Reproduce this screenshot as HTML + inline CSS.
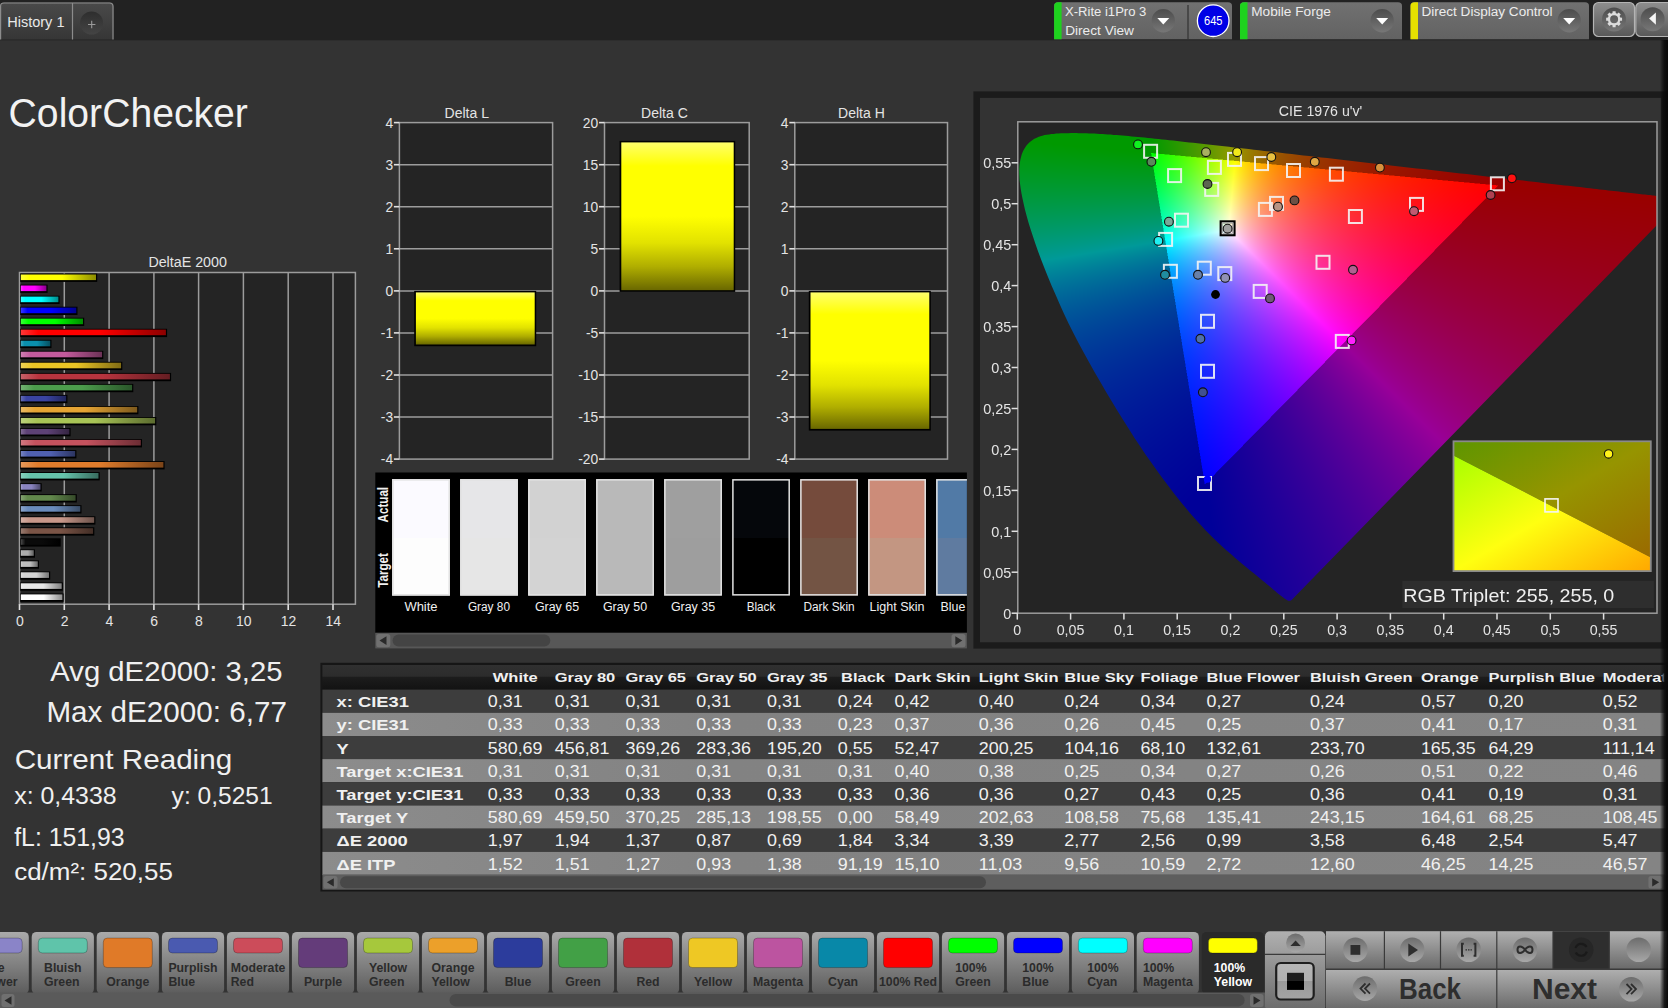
<!DOCTYPE html>
<html><head><meta charset="utf-8"><title>ColorChecker</title>
<style>
html,body{margin:0;padding:0;background:#333;overflow:hidden;width:1668px;height:1008px}
svg{position:absolute;left:0;top:0;font-family:"Liberation Sans",sans-serif}
</style></head><body>
<svg width="1668" height="1008" viewBox="0 0 1668 1008">
<rect x="0" y="0" width="1668" height="1008" fill="#333333"/>
<rect x="0" y="0" width="1668" height="40.3" fill="#222222"/>
<defs>
<linearGradient id="gTab" x1="0" y1="0" x2="0" y2="1"><stop offset="0" stop-color="#4a4a4a"/><stop offset="1" stop-color="#363636"/></linearGradient>
<linearGradient id="gDev" x1="0" y1="0" x2="0" y2="1"><stop offset="0" stop-color="#717171"/><stop offset="1" stop-color="#626262"/></linearGradient>
<linearGradient id="gBtnTop" x1="0" y1="0" x2="0" y2="1"><stop offset="0" stop-color="#8e8e8e"/><stop offset="1" stop-color="#585858"/></linearGradient>
<radialGradient id="gDrop" cx="0.5" cy="0.2" r="0.8"><stop offset="0" stop-color="#4a4a4a"/><stop offset="1" stop-color="#6e6e6e"/></radialGradient>
<linearGradient id="gDrop2" x1="0" y1="0" x2="0" y2="1"><stop offset="0" stop-color="#4c4c4c"/><stop offset="1" stop-color="#777777"/></linearGradient>
<linearGradient id="gPlus" x1="0" y1="0" x2="0" y2="1"><stop offset="0" stop-color="#2e2e2e"/><stop offset="1" stop-color="#444444"/></linearGradient>
</defs>
<path d="M0,39.5 L0,6 Q0,2.5 4,2.5 L109.5,2.5 Q113.5,2.5 113.5,6.5 L113.5,39.5 Z" fill="url(#gTab)"/><path d="M0.6,39.5 L0.6,6 Q0.6,3 4,3 L109.5,3 Q113,3 113,6.5 L113,39.5" fill="none" stroke="#8c8c8c" stroke-width="1.2"/>
<line x1="72.5" y1="3" x2="72.5" y2="39.5" stroke="#8c8c8c" stroke-width="1.2"/>
<text x="7.2" y="27.2" font-size="14.97" fill="#e8e8e8" textLength="57.3" lengthAdjust="spacingAndGlyphs">History 1</text>
<circle cx="91.6" cy="23" r="11.5" fill="url(#gPlus)"/>
<path d="M88,24.5 H95.4 M91.7,20.8 V28.2" stroke="#9a9a9a" stroke-width="1.1"/>
<path d="M1054.1,6 Q1054.1,2.3 1058.1,2.3 L1228,2.3 Q1232,2.3 1232,6 L1232,39.2 L1054.1,39.2 Z" fill="url(#gDev)"/><path d="M1054.1,6 Q1054.1,2.3 1058.1,2.3 L1061.6,2.3 L1061.6,39.2 L1054.1,39.2 Z" fill="#1ed21e"/><text x="1065.0" y="16.2" font-size="12.65" fill="#ececec" textLength="81.4" lengthAdjust="spacingAndGlyphs">X-Rite i1Pro 3</text><text x="1065.2" y="34.8" font-size="12.65" fill="#ececec" textLength="68.8" lengthAdjust="spacingAndGlyphs">Direct View</text><circle cx="1163.3" cy="20.7" r="11.7" fill="url(#gDrop2)"/><path d="M1157.3,18 L1169.3,18 L1163.3,24.5 Z" fill="#ffffff"/>
<line x1="1188" y1="5" x2="1188" y2="39" stroke="#3c3c3c" stroke-width="1.5"/>
<circle cx="1213.2" cy="20.7" r="15.8" fill="#0000e6" stroke="#ffffff" stroke-width="1.3"/>
<text x="1204.0" y="25.2" font-size="13.08" fill="#ffffff" textLength="18.5" lengthAdjust="spacingAndGlyphs">645</text>
<path d="M1240,6 Q1240,2.3 1244,2.3 L1398,2.3 Q1402,2.3 1402,6 L1402,39.2 L1240,39.2 Z" fill="url(#gDev)"/><path d="M1240,6 Q1240,2.3 1244,2.3 L1247.5,2.3 L1247.5,39.2 L1240,39.2 Z" fill="#1ed21e"/><text x="1251.2" y="16.2" font-size="12.65" fill="#ececec" textLength="79.7" lengthAdjust="spacingAndGlyphs">Mobile Forge</text><circle cx="1382.2" cy="20.7" r="11.7" fill="url(#gDrop2)"/><path d="M1376.2,18 L1388.2,18 L1382.2,24.5 Z" fill="#ffffff"/>
<path d="M1410.5,6 Q1410.5,2.3 1414.5,2.3 L1585,2.3 Q1589,2.3 1589,6 L1589,39.2 L1410.5,39.2 Z" fill="url(#gDev)"/><path d="M1410.5,6 Q1410.5,2.3 1414.5,2.3 L1418.0,2.3 L1418.0,39.2 L1410.5,39.2 Z" fill="#e6e000"/><text x="1421.4" y="16.2" font-size="12.65" fill="#ececec" textLength="131.2" lengthAdjust="spacingAndGlyphs">Direct Display Control</text><circle cx="1569.2" cy="20.7" r="11.7" fill="url(#gDrop2)"/><path d="M1563.2,18 L1575.2,18 L1569.2,24.5 Z" fill="#ffffff"/>
<rect x="1593.5" y="2.5" width="41" height="34" rx="5" fill="url(#gBtnTop)" stroke="#b4b4b4" stroke-width="1.2"/>
<circle cx="1614" cy="19.5" r="12" fill="url(#gDrop2)"/>
<path d="M1619.92,16.79 L1620.19,17.57 L1622.06,17.72 L1622.06,20.68 L1620.19,20.83 L1619.92,21.61 L1619.56,22.35 L1620.78,23.79 L1618.69,25.88 L1617.25,24.66 L1616.51,25.02 L1615.73,25.29 L1615.58,27.16 L1612.62,27.16 L1612.47,25.29 L1611.69,25.02 L1610.95,24.66 L1609.51,25.88 L1607.42,23.79 L1608.64,22.35 L1608.28,21.61 L1608.01,20.83 L1606.14,20.68 L1606.14,17.72 L1608.01,17.57 L1608.28,16.79 L1608.64,16.05 L1607.42,14.61 L1609.51,12.52 L1610.95,13.74 L1611.69,13.38 L1612.47,13.11 L1612.62,11.24 L1615.58,11.24 L1615.73,13.11 L1616.51,13.38 L1617.25,13.74 L1618.69,12.52 L1620.78,14.61 L1619.56,16.05 Z M1618.1,19.2 A4,4 0 1 0 1610.1,19.2 A4,4 0 1 0 1618.1,19.2 Z" fill="#dcdcdc" fill-rule="evenodd"/>
<rect x="1635.8" y="2.5" width="40" height="34" rx="5" fill="url(#gBtnTop)" stroke="#b4b4b4" stroke-width="1.2"/>
<circle cx="1652.6" cy="19.3" r="12" fill="url(#gDrop2)"/>
<path d="M1649.1,18.6 L1655.9,12.4 L1655.9,24.8 Z" fill="#f4f4f4"/>
<text x="8.6" y="126.8" font-size="40.70" fill="#f2f2f2" textLength="239.3" lengthAdjust="spacingAndGlyphs">ColorChecker</text>
<defs><linearGradient id="gb0" x1="0" y1="0" x2="1" y2="0"><stop offset="0" stop-color="#ffff38"/><stop offset="0.12" stop-color="#ffff00"/><stop offset="0.55" stop-color="#ffff00"/><stop offset="1" stop-color="#8c8c00"/></linearGradient><linearGradient id="gb1" x1="0" y1="0" x2="1" y2="0"><stop offset="0" stop-color="#ff38ff"/><stop offset="0.12" stop-color="#ff00ff"/><stop offset="0.55" stop-color="#ff00ff"/><stop offset="1" stop-color="#8c008c"/></linearGradient><linearGradient id="gb2" x1="0" y1="0" x2="1" y2="0"><stop offset="0" stop-color="#38ffff"/><stop offset="0.12" stop-color="#00ffff"/><stop offset="0.55" stop-color="#00ffff"/><stop offset="1" stop-color="#008c8c"/></linearGradient><linearGradient id="gb3" x1="0" y1="0" x2="1" y2="0"><stop offset="0" stop-color="#3838ff"/><stop offset="0.12" stop-color="#0000ff"/><stop offset="0.55" stop-color="#0000ff"/><stop offset="1" stop-color="#00008c"/></linearGradient><linearGradient id="gb4" x1="0" y1="0" x2="1" y2="0"><stop offset="0" stop-color="#38ff38"/><stop offset="0.12" stop-color="#00ff00"/><stop offset="0.55" stop-color="#00ff00"/><stop offset="1" stop-color="#008c00"/></linearGradient><linearGradient id="gb5" x1="0" y1="0" x2="1" y2="0"><stop offset="0" stop-color="#ff3838"/><stop offset="0.12" stop-color="#ff0000"/><stop offset="0.55" stop-color="#ff0000"/><stop offset="1" stop-color="#8c0000"/></linearGradient><linearGradient id="gb6" x1="0" y1="0" x2="1" y2="0"><stop offset="0" stop-color="#40a8c0"/><stop offset="0.12" stop-color="#0a90ae"/><stop offset="0.55" stop-color="#0a90ae"/><stop offset="1" stop-color="#064f60"/></linearGradient><linearGradient id="gb7" x1="0" y1="0" x2="1" y2="0"><stop offset="0" stop-color="#d07eb2"/><stop offset="0.12" stop-color="#c35a9c"/><stop offset="0.55" stop-color="#c35a9c"/><stop offset="1" stop-color="#6b3256"/></linearGradient><linearGradient id="gb8" x1="0" y1="0" x2="1" y2="0"><stop offset="0" stop-color="#efd155"/><stop offset="0.12" stop-color="#eac425"/><stop offset="0.55" stop-color="#eac425"/><stop offset="1" stop-color="#816c14"/></linearGradient><linearGradient id="gb9" x1="0" y1="0" x2="1" y2="0"><stop offset="0" stop-color="#c86168"/><stop offset="0.12" stop-color="#b8343e"/><stop offset="0.55" stop-color="#b8343e"/><stop offset="1" stop-color="#651d22"/></linearGradient><linearGradient id="gb10" x1="0" y1="0" x2="1" y2="0"><stop offset="0" stop-color="#73b273"/><stop offset="0.12" stop-color="#4c9c4c"/><stop offset="0.55" stop-color="#4c9c4c"/><stop offset="1" stop-color="#2a562a"/></linearGradient><linearGradient id="gb11" x1="0" y1="0" x2="1" y2="0"><stop offset="0" stop-color="#656db6"/><stop offset="0.12" stop-color="#3a44a2"/><stop offset="0.55" stop-color="#3a44a2"/><stop offset="1" stop-color="#202559"/></linearGradient><linearGradient id="gb12" x1="0" y1="0" x2="1" y2="0"><stop offset="0" stop-color="#ebb861"/><stop offset="0.12" stop-color="#e5a434"/><stop offset="0.55" stop-color="#e5a434"/><stop offset="1" stop-color="#7e5a1d"/></linearGradient><linearGradient id="gb13" x1="0" y1="0" x2="1" y2="0"><stop offset="0" stop-color="#bbd17b"/><stop offset="0.12" stop-color="#a8c456"/><stop offset="0.55" stop-color="#a8c456"/><stop offset="1" stop-color="#5c6c2f"/></linearGradient><linearGradient id="gb14" x1="0" y1="0" x2="1" y2="0"><stop offset="0" stop-color="#816c94"/><stop offset="0.12" stop-color="#5e4276"/><stop offset="0.55" stop-color="#5e4276"/><stop offset="1" stop-color="#342441"/></linearGradient><linearGradient id="gb15" x1="0" y1="0" x2="1" y2="0"><stop offset="0" stop-color="#d17881"/><stop offset="0.12" stop-color="#c4525e"/><stop offset="0.55" stop-color="#c4525e"/><stop offset="1" stop-color="#6c2d34"/></linearGradient><linearGradient id="gb16" x1="0" y1="0" x2="1" y2="0"><stop offset="0" stop-color="#7683c1"/><stop offset="0.12" stop-color="#5060b0"/><stop offset="0.55" stop-color="#5060b0"/><stop offset="1" stop-color="#2c3561"/></linearGradient><linearGradient id="gb17" x1="0" y1="0" x2="1" y2="0"><stop offset="0" stop-color="#e7995a"/><stop offset="0.12" stop-color="#e07c2c"/><stop offset="0.55" stop-color="#e07c2c"/><stop offset="1" stop-color="#7b4418"/></linearGradient><linearGradient id="gb18" x1="0" y1="0" x2="1" y2="0"><stop offset="0" stop-color="#88d1be"/><stop offset="0.12" stop-color="#66c4ac"/><stop offset="0.55" stop-color="#66c4ac"/><stop offset="1" stop-color="#386c5f"/></linearGradient><linearGradient id="gb19" x1="0" y1="0" x2="1" y2="0"><stop offset="0" stop-color="#a49fce"/><stop offset="0.12" stop-color="#8a84c0"/><stop offset="0.55" stop-color="#8a84c0"/><stop offset="1" stop-color="#4c496a"/></linearGradient><linearGradient id="gb20" x1="0" y1="0" x2="1" y2="0"><stop offset="0" stop-color="#85a273"/><stop offset="0.12" stop-color="#62884c"/><stop offset="0.55" stop-color="#62884c"/><stop offset="1" stop-color="#364b2a"/></linearGradient><linearGradient id="gb21" x1="0" y1="0" x2="1" y2="0"><stop offset="0" stop-color="#8ba5cb"/><stop offset="0.12" stop-color="#6a8cbc"/><stop offset="0.55" stop-color="#6a8cbc"/><stop offset="1" stop-color="#3a4d67"/></linearGradient><linearGradient id="gb22" x1="0" y1="0" x2="1" y2="0"><stop offset="0" stop-color="#d4afa4"/><stop offset="0.12" stop-color="#c8988a"/><stop offset="0.55" stop-color="#c8988a"/><stop offset="1" stop-color="#6e544c"/></linearGradient><linearGradient id="gb23" x1="0" y1="0" x2="1" y2="0"><stop offset="0" stop-color="#977a6f"/><stop offset="0.12" stop-color="#7a5446"/><stop offset="0.55" stop-color="#7a5446"/><stop offset="1" stop-color="#432e26"/></linearGradient><linearGradient id="gb24" x1="0" y1="0" x2="1" y2="0"><stop offset="0" stop-color="#4a4a4a"/><stop offset="0.12" stop-color="#0a0a0a"/><stop offset="0.55" stop-color="#0a0a0a"/><stop offset="1" stop-color="#000000"/></linearGradient><linearGradient id="gb25" x1="0" y1="0" x2="1" y2="0"><stop offset="0" stop-color="#bebebe"/><stop offset="0.12" stop-color="#acacac"/><stop offset="0.55" stop-color="#acacac"/><stop offset="1" stop-color="#5f5f5f"/></linearGradient><linearGradient id="gb26" x1="0" y1="0" x2="1" y2="0"><stop offset="0" stop-color="#cccccc"/><stop offset="0.12" stop-color="#bebebe"/><stop offset="0.55" stop-color="#bebebe"/><stop offset="1" stop-color="#686868"/></linearGradient><linearGradient id="gb27" x1="0" y1="0" x2="1" y2="0"><stop offset="0" stop-color="#dddddd"/><stop offset="0.12" stop-color="#d4d4d4"/><stop offset="0.55" stop-color="#d4d4d4"/><stop offset="1" stop-color="#757575"/></linearGradient><linearGradient id="gb28" x1="0" y1="0" x2="1" y2="0"><stop offset="0" stop-color="#ededed"/><stop offset="0.12" stop-color="#e8e8e8"/><stop offset="0.55" stop-color="#e8e8e8"/><stop offset="1" stop-color="#808080"/></linearGradient><linearGradient id="gb29" x1="0" y1="0" x2="1" y2="0"><stop offset="0" stop-color="#ffffff"/><stop offset="0.12" stop-color="#ffffff"/><stop offset="0.55" stop-color="#ffffff"/><stop offset="1" stop-color="#8c8c8c"/></linearGradient></defs>
<rect x="19.5" y="272.5" width="335.9" height="331.7" fill="#242424"/>
<line x1="64.3" y1="272.5" x2="64.3" y2="604.2" stroke="#9c9c9c" stroke-width="1.5"/>
<line x1="109.1" y1="272.5" x2="109.1" y2="604.2" stroke="#9c9c9c" stroke-width="1.5"/>
<line x1="153.9" y1="272.5" x2="153.9" y2="604.2" stroke="#9c9c9c" stroke-width="1.5"/>
<line x1="198.6" y1="272.5" x2="198.6" y2="604.2" stroke="#9c9c9c" stroke-width="1.5"/>
<line x1="243.4" y1="272.5" x2="243.4" y2="604.2" stroke="#9c9c9c" stroke-width="1.5"/>
<line x1="288.2" y1="272.5" x2="288.2" y2="604.2" stroke="#9c9c9c" stroke-width="1.5"/>
<line x1="333.0" y1="272.5" x2="333.0" y2="604.2" stroke="#9c9c9c" stroke-width="1.5"/>
<rect x="19.5" y="272.5" width="335.9" height="331.7" fill="none" stroke="#9c9c9c" stroke-width="1.5"/>
<line x1="19.5" y1="604.2" x2="19.5" y2="610.0" stroke="#e0e0e0" stroke-width="1.6"/>
<text x="15.9" y="626.2" font-size="13.95" fill="#e4e4e4" textLength="7.8" lengthAdjust="spacingAndGlyphs">0</text>
<line x1="64.3" y1="604.2" x2="64.3" y2="610.0" stroke="#e0e0e0" stroke-width="1.6"/>
<text x="60.7" y="626.2" font-size="13.95" fill="#e4e4e4" textLength="7.8" lengthAdjust="spacingAndGlyphs">2</text>
<line x1="109.1" y1="604.2" x2="109.1" y2="610.0" stroke="#e0e0e0" stroke-width="1.6"/>
<text x="105.5" y="626.2" font-size="13.95" fill="#e4e4e4" textLength="7.8" lengthAdjust="spacingAndGlyphs">4</text>
<line x1="153.9" y1="604.2" x2="153.9" y2="610.0" stroke="#e0e0e0" stroke-width="1.6"/>
<text x="150.3" y="626.2" font-size="13.95" fill="#e4e4e4" textLength="7.8" lengthAdjust="spacingAndGlyphs">6</text>
<line x1="198.6" y1="604.2" x2="198.6" y2="610.0" stroke="#e0e0e0" stroke-width="1.6"/>
<text x="195.1" y="626.2" font-size="13.95" fill="#e4e4e4" textLength="7.8" lengthAdjust="spacingAndGlyphs">8</text>
<line x1="243.4" y1="604.2" x2="243.4" y2="610.0" stroke="#e0e0e0" stroke-width="1.6"/>
<text x="236.0" y="626.2" font-size="13.95" fill="#e4e4e4" textLength="15.5" lengthAdjust="spacingAndGlyphs">10</text>
<line x1="288.2" y1="604.2" x2="288.2" y2="610.0" stroke="#e0e0e0" stroke-width="1.6"/>
<text x="280.8" y="626.2" font-size="13.95" fill="#e4e4e4" textLength="15.5" lengthAdjust="spacingAndGlyphs">12</text>
<line x1="333.0" y1="604.2" x2="333.0" y2="610.0" stroke="#e0e0e0" stroke-width="1.6"/>
<text x="325.5" y="626.2" font-size="13.95" fill="#e4e4e4" textLength="15.5" lengthAdjust="spacingAndGlyphs">14</text>
<rect x="20.2" y="273.6" width="77.0" height="8.3" fill="#000"/>
<rect x="20.8" y="274.5" width="75.2" height="5.6" fill="url(#gb0)"/>
<rect x="20.2" y="284.6" width="27.4" height="8.3" fill="#000"/>
<rect x="20.8" y="285.5" width="25.6" height="5.6" fill="url(#gb1)"/>
<rect x="20.2" y="295.7" width="39.4" height="8.3" fill="#000"/>
<rect x="20.8" y="296.6" width="37.6" height="5.6" fill="url(#gb2)"/>
<rect x="20.2" y="306.7" width="57.3" height="8.3" fill="#000"/>
<rect x="20.8" y="307.6" width="55.5" height="5.6" fill="url(#gb3)"/>
<rect x="20.2" y="317.7" width="64.0" height="8.3" fill="#000"/>
<rect x="20.8" y="318.6" width="62.2" height="5.6" fill="url(#gb4)"/>
<rect x="20.2" y="328.8" width="146.9" height="8.3" fill="#000"/>
<rect x="20.8" y="329.6" width="145.1" height="5.6" fill="url(#gb5)"/>
<rect x="20.2" y="339.8" width="31.3" height="8.3" fill="#000"/>
<rect x="20.8" y="340.7" width="29.5" height="5.6" fill="url(#gb6)"/>
<rect x="20.2" y="350.8" width="83.1" height="8.3" fill="#000"/>
<rect x="20.8" y="351.7" width="81.3" height="5.6" fill="url(#gb7)"/>
<rect x="20.2" y="361.8" width="102.1" height="8.3" fill="#000"/>
<rect x="20.8" y="362.7" width="100.3" height="5.6" fill="url(#gb8)"/>
<rect x="20.2" y="372.9" width="150.9" height="8.3" fill="#000"/>
<rect x="20.8" y="373.8" width="149.1" height="5.6" fill="url(#gb9)"/>
<rect x="20.2" y="383.9" width="113.1" height="8.3" fill="#000"/>
<rect x="20.8" y="384.8" width="111.3" height="5.6" fill="url(#gb10)"/>
<rect x="20.2" y="394.9" width="47.2" height="8.3" fill="#000"/>
<rect x="20.8" y="395.8" width="45.4" height="5.6" fill="url(#gb11)"/>
<rect x="20.2" y="406.0" width="118.2" height="8.3" fill="#000"/>
<rect x="20.8" y="406.9" width="116.4" height="5.6" fill="url(#gb12)"/>
<rect x="20.2" y="417.0" width="136.1" height="8.3" fill="#000"/>
<rect x="20.8" y="417.9" width="134.3" height="5.6" fill="url(#gb13)"/>
<rect x="20.2" y="428.0" width="50.4" height="8.3" fill="#000"/>
<rect x="20.8" y="428.9" width="48.6" height="5.6" fill="url(#gb14)"/>
<rect x="20.2" y="439.1" width="121.8" height="8.3" fill="#000"/>
<rect x="20.8" y="439.9" width="120.0" height="5.6" fill="url(#gb15)"/>
<rect x="20.2" y="450.1" width="56.2" height="8.3" fill="#000"/>
<rect x="20.8" y="451.0" width="54.4" height="5.6" fill="url(#gb16)"/>
<rect x="20.2" y="461.1" width="144.4" height="8.3" fill="#000"/>
<rect x="20.8" y="462.0" width="142.6" height="5.6" fill="url(#gb17)"/>
<rect x="20.2" y="472.1" width="79.5" height="8.3" fill="#000"/>
<rect x="20.8" y="473.0" width="77.7" height="5.6" fill="url(#gb18)"/>
<rect x="20.2" y="483.2" width="21.5" height="8.3" fill="#000"/>
<rect x="20.8" y="484.1" width="19.7" height="5.6" fill="url(#gb19)"/>
<rect x="20.2" y="494.2" width="56.6" height="8.3" fill="#000"/>
<rect x="20.8" y="495.1" width="54.8" height="5.6" fill="url(#gb20)"/>
<rect x="20.2" y="505.2" width="61.3" height="8.3" fill="#000"/>
<rect x="20.8" y="506.1" width="59.5" height="5.6" fill="url(#gb21)"/>
<rect x="20.2" y="516.3" width="75.2" height="8.3" fill="#000"/>
<rect x="20.8" y="517.2" width="73.4" height="5.6" fill="url(#gb22)"/>
<rect x="20.2" y="527.3" width="74.1" height="8.3" fill="#000"/>
<rect x="20.8" y="528.2" width="72.3" height="5.6" fill="url(#gb23)"/>
<rect x="20.2" y="538.3" width="40.5" height="8.3" fill="#000"/>
<rect x="20.8" y="539.2" width="38.7" height="5.6" fill="url(#gb24)"/>
<rect x="20.2" y="549.4" width="14.8" height="8.3" fill="#000"/>
<rect x="20.8" y="550.2" width="13.0" height="5.6" fill="url(#gb25)"/>
<rect x="20.2" y="560.4" width="18.8" height="8.3" fill="#000"/>
<rect x="20.8" y="561.3" width="17.0" height="5.6" fill="url(#gb26)"/>
<rect x="20.2" y="571.4" width="30.0" height="8.3" fill="#000"/>
<rect x="20.8" y="572.3" width="28.2" height="5.6" fill="url(#gb27)"/>
<rect x="20.2" y="582.4" width="42.7" height="8.3" fill="#000"/>
<rect x="20.8" y="583.3" width="40.9" height="5.6" fill="url(#gb28)"/>
<rect x="20.2" y="593.5" width="43.4" height="8.3" fill="#000"/>
<rect x="20.8" y="594.4" width="41.6" height="5.6" fill="url(#gb29)"/>
<text x="148.4" y="267.0" font-size="14.68" fill="#e4e4e4" textLength="78.5" lengthAdjust="spacingAndGlyphs">DeltaE 2000</text>
<defs><linearGradient id="gYel" x1="0" y1="0" x2="0" y2="1"><stop offset="0" stop-color="#ffff6a"/><stop offset="0.16" stop-color="#ffff00"/><stop offset="0.5" stop-color="#ffff00"/><stop offset="0.68" stop-color="#e2e200"/><stop offset="0.84" stop-color="#b0ae00"/><stop offset="1" stop-color="#6a6800"/></linearGradient></defs>
<rect x="399.4" y="122.6" width="153.2" height="336.5" fill="#242424"/>
<line x1="399.4" y1="164.7" x2="552.6" y2="164.7" stroke="#9c9c9c" stroke-width="1.5"/>
<line x1="399.4" y1="206.7" x2="552.6" y2="206.7" stroke="#9c9c9c" stroke-width="1.5"/>
<line x1="399.4" y1="248.8" x2="552.6" y2="248.8" stroke="#9c9c9c" stroke-width="1.5"/>
<line x1="399.4" y1="290.9" x2="552.6" y2="290.9" stroke="#9c9c9c" stroke-width="1.5"/>
<line x1="399.4" y1="332.9" x2="552.6" y2="332.9" stroke="#9c9c9c" stroke-width="1.5"/>
<line x1="399.4" y1="375.0" x2="552.6" y2="375.0" stroke="#9c9c9c" stroke-width="1.5"/>
<line x1="399.4" y1="417.0" x2="552.6" y2="417.0" stroke="#9c9c9c" stroke-width="1.5"/>
<rect x="414.2" y="290.9" width="122.0" height="55.3" fill="#000"/>
<rect x="415.9" y="292.4" width="118.8" height="52.1" fill="url(#gYel)"/>
<rect x="399.4" y="122.6" width="153.2" height="336.5" fill="none" stroke="#9c9c9c" stroke-width="1.5"/>
<line x1="393.9" y1="122.6" x2="399.4" y2="122.6" stroke="#e0e0e0" stroke-width="1.6"/>
<text x="385.4" y="127.7" font-size="13.81" fill="#e4e4e4" textLength="7.7" lengthAdjust="spacingAndGlyphs">4</text>
<line x1="393.9" y1="164.7" x2="399.4" y2="164.7" stroke="#e0e0e0" stroke-width="1.6"/>
<text x="385.4" y="169.8" font-size="13.81" fill="#e4e4e4" textLength="7.7" lengthAdjust="spacingAndGlyphs">3</text>
<line x1="393.9" y1="206.7" x2="399.4" y2="206.7" stroke="#e0e0e0" stroke-width="1.6"/>
<text x="385.4" y="211.8" font-size="13.81" fill="#e4e4e4" textLength="7.7" lengthAdjust="spacingAndGlyphs">2</text>
<line x1="393.9" y1="248.8" x2="399.4" y2="248.8" stroke="#e0e0e0" stroke-width="1.6"/>
<text x="385.4" y="253.9" font-size="13.81" fill="#e4e4e4" textLength="7.7" lengthAdjust="spacingAndGlyphs">1</text>
<line x1="393.9" y1="290.9" x2="399.4" y2="290.9" stroke="#e0e0e0" stroke-width="1.6"/>
<text x="385.4" y="296.0" font-size="13.81" fill="#e4e4e4" textLength="7.7" lengthAdjust="spacingAndGlyphs">0</text>
<line x1="393.9" y1="332.9" x2="399.4" y2="332.9" stroke="#e0e0e0" stroke-width="1.6"/>
<text x="380.8" y="338.0" font-size="13.81" fill="#e4e4e4" textLength="12.3" lengthAdjust="spacingAndGlyphs">-1</text>
<line x1="393.9" y1="375.0" x2="399.4" y2="375.0" stroke="#e0e0e0" stroke-width="1.6"/>
<text x="380.8" y="380.1" font-size="13.81" fill="#e4e4e4" textLength="12.3" lengthAdjust="spacingAndGlyphs">-2</text>
<line x1="393.9" y1="417.0" x2="399.4" y2="417.0" stroke="#e0e0e0" stroke-width="1.6"/>
<text x="380.8" y="422.1" font-size="13.81" fill="#e4e4e4" textLength="12.3" lengthAdjust="spacingAndGlyphs">-3</text>
<line x1="393.9" y1="459.1" x2="399.4" y2="459.1" stroke="#e0e0e0" stroke-width="1.6"/>
<text x="380.8" y="464.2" font-size="13.81" fill="#e4e4e4" textLength="12.3" lengthAdjust="spacingAndGlyphs">-4</text>
<rect x="604.5" y="122.6" width="144.7" height="336.5" fill="#242424"/>
<line x1="604.5" y1="164.7" x2="749.2" y2="164.7" stroke="#9c9c9c" stroke-width="1.5"/>
<line x1="604.5" y1="206.7" x2="749.2" y2="206.7" stroke="#9c9c9c" stroke-width="1.5"/>
<line x1="604.5" y1="248.8" x2="749.2" y2="248.8" stroke="#9c9c9c" stroke-width="1.5"/>
<line x1="604.5" y1="290.9" x2="749.2" y2="290.9" stroke="#9c9c9c" stroke-width="1.5"/>
<line x1="604.5" y1="332.9" x2="749.2" y2="332.9" stroke="#9c9c9c" stroke-width="1.5"/>
<line x1="604.5" y1="375.0" x2="749.2" y2="375.0" stroke="#9c9c9c" stroke-width="1.5"/>
<line x1="604.5" y1="417.0" x2="749.2" y2="417.0" stroke="#9c9c9c" stroke-width="1.5"/>
<rect x="619.6" y="140.9" width="115.6" height="151.0" fill="#000"/>
<rect x="621.3" y="142.4" width="112.4" height="147.8" fill="url(#gYel)"/>
<rect x="604.5" y="122.6" width="144.7" height="336.5" fill="none" stroke="#9c9c9c" stroke-width="1.5"/>
<line x1="599.0" y1="122.6" x2="604.5" y2="122.6" stroke="#e0e0e0" stroke-width="1.6"/>
<text x="582.8" y="127.7" font-size="13.81" fill="#e4e4e4" textLength="15.4" lengthAdjust="spacingAndGlyphs">20</text>
<line x1="599.0" y1="164.7" x2="604.5" y2="164.7" stroke="#e0e0e0" stroke-width="1.6"/>
<text x="582.8" y="169.8" font-size="13.81" fill="#e4e4e4" textLength="15.4" lengthAdjust="spacingAndGlyphs">15</text>
<line x1="599.0" y1="206.7" x2="604.5" y2="206.7" stroke="#e0e0e0" stroke-width="1.6"/>
<text x="582.8" y="211.8" font-size="13.81" fill="#e4e4e4" textLength="15.4" lengthAdjust="spacingAndGlyphs">10</text>
<line x1="599.0" y1="248.8" x2="604.5" y2="248.8" stroke="#e0e0e0" stroke-width="1.6"/>
<text x="590.5" y="253.9" font-size="13.81" fill="#e4e4e4" textLength="7.7" lengthAdjust="spacingAndGlyphs">5</text>
<line x1="599.0" y1="290.9" x2="604.5" y2="290.9" stroke="#e0e0e0" stroke-width="1.6"/>
<text x="590.5" y="296.0" font-size="13.81" fill="#e4e4e4" textLength="7.7" lengthAdjust="spacingAndGlyphs">0</text>
<line x1="599.0" y1="332.9" x2="604.5" y2="332.9" stroke="#e0e0e0" stroke-width="1.6"/>
<text x="585.9" y="338.0" font-size="13.81" fill="#e4e4e4" textLength="12.3" lengthAdjust="spacingAndGlyphs">-5</text>
<line x1="599.0" y1="375.0" x2="604.5" y2="375.0" stroke="#e0e0e0" stroke-width="1.6"/>
<text x="578.2" y="380.1" font-size="13.81" fill="#e4e4e4" textLength="20.0" lengthAdjust="spacingAndGlyphs">-10</text>
<line x1="599.0" y1="417.0" x2="604.5" y2="417.0" stroke="#e0e0e0" stroke-width="1.6"/>
<text x="578.2" y="422.1" font-size="13.81" fill="#e4e4e4" textLength="20.0" lengthAdjust="spacingAndGlyphs">-15</text>
<line x1="599.0" y1="459.1" x2="604.5" y2="459.1" stroke="#e0e0e0" stroke-width="1.6"/>
<text x="578.2" y="464.2" font-size="13.81" fill="#e4e4e4" textLength="20.0" lengthAdjust="spacingAndGlyphs">-20</text>
<rect x="794.8" y="122.6" width="152.7" height="336.5" fill="#242424"/>
<line x1="794.8" y1="164.7" x2="947.5" y2="164.7" stroke="#9c9c9c" stroke-width="1.5"/>
<line x1="794.8" y1="206.7" x2="947.5" y2="206.7" stroke="#9c9c9c" stroke-width="1.5"/>
<line x1="794.8" y1="248.8" x2="947.5" y2="248.8" stroke="#9c9c9c" stroke-width="1.5"/>
<line x1="794.8" y1="290.9" x2="947.5" y2="290.9" stroke="#9c9c9c" stroke-width="1.5"/>
<line x1="794.8" y1="332.9" x2="947.5" y2="332.9" stroke="#9c9c9c" stroke-width="1.5"/>
<line x1="794.8" y1="375.0" x2="947.5" y2="375.0" stroke="#9c9c9c" stroke-width="1.5"/>
<line x1="794.8" y1="417.0" x2="947.5" y2="417.0" stroke="#9c9c9c" stroke-width="1.5"/>
<rect x="808.8" y="290.9" width="122.0" height="139.7" fill="#000"/>
<rect x="810.5" y="292.4" width="118.8" height="136.5" fill="url(#gYel)"/>
<rect x="794.8" y="122.6" width="152.7" height="336.5" fill="none" stroke="#9c9c9c" stroke-width="1.5"/>
<line x1="789.3" y1="122.6" x2="794.8" y2="122.6" stroke="#e0e0e0" stroke-width="1.6"/>
<text x="780.8" y="127.7" font-size="13.81" fill="#e4e4e4" textLength="7.7" lengthAdjust="spacingAndGlyphs">4</text>
<line x1="789.3" y1="164.7" x2="794.8" y2="164.7" stroke="#e0e0e0" stroke-width="1.6"/>
<text x="780.8" y="169.8" font-size="13.81" fill="#e4e4e4" textLength="7.7" lengthAdjust="spacingAndGlyphs">3</text>
<line x1="789.3" y1="206.7" x2="794.8" y2="206.7" stroke="#e0e0e0" stroke-width="1.6"/>
<text x="780.8" y="211.8" font-size="13.81" fill="#e4e4e4" textLength="7.7" lengthAdjust="spacingAndGlyphs">2</text>
<line x1="789.3" y1="248.8" x2="794.8" y2="248.8" stroke="#e0e0e0" stroke-width="1.6"/>
<text x="780.8" y="253.9" font-size="13.81" fill="#e4e4e4" textLength="7.7" lengthAdjust="spacingAndGlyphs">1</text>
<line x1="789.3" y1="290.9" x2="794.8" y2="290.9" stroke="#e0e0e0" stroke-width="1.6"/>
<text x="780.8" y="296.0" font-size="13.81" fill="#e4e4e4" textLength="7.7" lengthAdjust="spacingAndGlyphs">0</text>
<line x1="789.3" y1="332.9" x2="794.8" y2="332.9" stroke="#e0e0e0" stroke-width="1.6"/>
<text x="776.2" y="338.0" font-size="13.81" fill="#e4e4e4" textLength="12.3" lengthAdjust="spacingAndGlyphs">-1</text>
<line x1="789.3" y1="375.0" x2="794.8" y2="375.0" stroke="#e0e0e0" stroke-width="1.6"/>
<text x="776.2" y="380.1" font-size="13.81" fill="#e4e4e4" textLength="12.3" lengthAdjust="spacingAndGlyphs">-2</text>
<line x1="789.3" y1="417.0" x2="794.8" y2="417.0" stroke="#e0e0e0" stroke-width="1.6"/>
<text x="776.2" y="422.1" font-size="13.81" fill="#e4e4e4" textLength="12.3" lengthAdjust="spacingAndGlyphs">-3</text>
<line x1="789.3" y1="459.1" x2="794.8" y2="459.1" stroke="#e0e0e0" stroke-width="1.6"/>
<text x="776.2" y="464.2" font-size="13.81" fill="#e4e4e4" textLength="12.3" lengthAdjust="spacingAndGlyphs">-4</text>
<text x="444.6" y="118.1" font-size="14.53" fill="#e4e4e4" textLength="44.4" lengthAdjust="spacingAndGlyphs">Delta L</text>
<text x="641.1" y="118.1" font-size="14.53" fill="#e4e4e4" textLength="46.7" lengthAdjust="spacingAndGlyphs">Delta C</text>
<text x="838.1" y="118.1" font-size="14.53" fill="#e4e4e4" textLength="46.7" lengthAdjust="spacingAndGlyphs">Delta H</text>
<rect x="375.3" y="472.5" width="591.6" height="160.3" fill="#000"/>
<defs><clipPath id="cpSw"><rect x="375.3" y="472.5" width="591.6" height="160.3"/></clipPath></defs>
<g clip-path="url(#cpSw)">
<rect x="392.1" y="479.1" width="57.8" height="58.9" fill="#fbfaff"/>
<rect x="392.1" y="538" width="57.8" height="57.6" fill="#fdfdfd"/>
<rect x="392.9" y="479.85" width="56.3" height="115" fill="none" stroke="#e2e2e2" stroke-width="1.5"/>
<text x="404.4" y="611.0" font-size="13.08" fill="#f0f0f0" textLength="33.2" lengthAdjust="spacingAndGlyphs">White</text>
<rect x="460.1" y="479.1" width="57.8" height="58.9" fill="#e6e6e8"/>
<rect x="460.1" y="538" width="57.8" height="57.6" fill="#e6e6e6"/>
<rect x="460.9" y="479.85" width="56.3" height="115" fill="none" stroke="#e2e2e2" stroke-width="1.5"/>
<text x="467.9" y="611.0" font-size="13.08" fill="#f0f0f0" textLength="42.1" lengthAdjust="spacingAndGlyphs">Gray 80</text>
<rect x="528.1" y="479.1" width="57.8" height="58.9" fill="#d2d2d2"/>
<rect x="528.1" y="538" width="57.8" height="57.6" fill="#d3d3d3"/>
<rect x="528.9" y="479.85" width="56.3" height="115" fill="none" stroke="#e2e2e2" stroke-width="1.5"/>
<text x="534.9" y="611.0" font-size="13.08" fill="#f0f0f0" textLength="44.2" lengthAdjust="spacingAndGlyphs">Gray 65</text>
<rect x="596.1" y="479.1" width="57.8" height="58.9" fill="#b9b9b9"/>
<rect x="596.1" y="538" width="57.8" height="57.6" fill="#b9b9b9"/>
<rect x="596.9" y="479.85" width="56.3" height="115" fill="none" stroke="#e2e2e2" stroke-width="1.5"/>
<text x="602.9" y="611.0" font-size="13.08" fill="#f0f0f0" textLength="44.2" lengthAdjust="spacingAndGlyphs">Gray 50</text>
<rect x="664.1" y="479.1" width="57.8" height="58.9" fill="#9f9f9f"/>
<rect x="664.1" y="538" width="57.8" height="57.6" fill="#9e9e9e"/>
<rect x="664.9" y="479.85" width="56.3" height="115" fill="none" stroke="#e2e2e2" stroke-width="1.5"/>
<text x="670.9" y="611.0" font-size="13.08" fill="#f0f0f0" textLength="44.2" lengthAdjust="spacingAndGlyphs">Gray 35</text>
<rect x="732.1" y="479.1" width="57.8" height="58.9" fill="#05070b"/>
<rect x="732.1" y="538" width="57.8" height="57.6" fill="#000000"/>
<rect x="732.9" y="479.85" width="56.3" height="115" fill="none" stroke="#e2e2e2" stroke-width="1.5"/>
<text x="746.7" y="611.0" font-size="13.08" fill="#f0f0f0" textLength="28.6" lengthAdjust="spacingAndGlyphs">Black</text>
<rect x="800.1" y="479.1" width="57.8" height="58.9" fill="#754b3c"/>
<rect x="800.1" y="538" width="57.8" height="57.6" fill="#735444"/>
<rect x="800.9" y="479.85" width="56.3" height="115" fill="none" stroke="#e2e2e2" stroke-width="1.5"/>
<text x="803.4" y="611.0" font-size="13.08" fill="#f0f0f0" textLength="51.3" lengthAdjust="spacingAndGlyphs">Dark Skin</text>
<rect x="868.1" y="479.1" width="57.8" height="58.9" fill="#cc8c79"/>
<rect x="868.1" y="538" width="57.8" height="57.6" fill="#c39682"/>
<rect x="868.9" y="479.85" width="56.3" height="115" fill="none" stroke="#e2e2e2" stroke-width="1.5"/>
<text x="869.5" y="611.0" font-size="13.08" fill="#f0f0f0" textLength="55.0" lengthAdjust="spacingAndGlyphs">Light Skin</text>
<rect x="936.1" y="479.1" width="57.8" height="58.9" fill="#517aa6"/>
<rect x="936.1" y="538" width="57.8" height="57.6" fill="#5f7ba0"/>
<rect x="936.9" y="479.85" width="56.3" height="115" fill="none" stroke="#e2e2e2" stroke-width="1.5"/>
<text x="940.5" y="611.0" font-size="13.08" fill="#f0f0f0" textLength="49.0" lengthAdjust="spacingAndGlyphs">Blue Sky</text>
</g>
<text x="-17.8" y="0.0" font-size="14.53" fill="#f0f0f0" font-weight="bold" textLength="35.5" lengthAdjust="spacingAndGlyphs" transform="translate(388.3,504.6) rotate(-90)">Actual</text>
<text x="-17.3" y="0.0" font-size="14.53" fill="#f0f0f0" font-weight="bold" textLength="34.7" lengthAdjust="spacingAndGlyphs" transform="translate(388.3,570.5) rotate(-90)">Target</text>
<rect x="375.3" y="632.8" width="591.6" height="15.6" fill="#575757"/>
<rect x="392.6" y="634.5" width="157.7" height="12" rx="6" fill="#444444"/>
<rect x="376.3" y="634" width="14" height="13.2" rx="2.5" fill="#707070"/>
<path d="M379.5,640.6 L386.5,636.3 L386.5,644.9 Z" fill="#2a2a2a"/>
<rect x="951.5" y="634" width="14" height="13.2" rx="2.5" fill="#707070"/>
<path d="M962.3,640.6 L955.3,636.3 L955.3,644.9 Z" fill="#2a2a2a"/>
<text x="50.3" y="680.8" font-size="27.47" fill="#f0f0f0" textLength="232.2" lengthAdjust="spacingAndGlyphs">Avg dE2000: 3,25</text>
<text x="46.4" y="722.0" font-size="29.22" fill="#f0f0f0" textLength="240.5" lengthAdjust="spacingAndGlyphs">Max dE2000: 6,77</text>
<text x="14.7" y="769.0" font-size="27.03" fill="#f0f0f0" textLength="217.5" lengthAdjust="spacingAndGlyphs">Current Reading</text>
<text x="14.2" y="803.8" font-size="24.42" fill="#f0f0f0" textLength="102.4" lengthAdjust="spacingAndGlyphs">x: 0,4338</text>
<text x="171.6" y="803.8" font-size="24.42" fill="#f0f0f0" textLength="101.1" lengthAdjust="spacingAndGlyphs">y: 0,5251</text>
<text x="14.2" y="845.6" font-size="25.15" fill="#f0f0f0" textLength="110.4" lengthAdjust="spacingAndGlyphs">fL: 151,93</text>
<text x="14.2" y="880.0" font-size="24.42" fill="#f0f0f0" textLength="158.7" lengthAdjust="spacingAndGlyphs">cd/m²: 520,55</text>
<defs><linearGradient id="gHdr" x1="0" y1="0" x2="0" y2="1"><stop offset="0" stop-color="#303030"/><stop offset="0.45" stop-color="#2c2c2c"/><stop offset="0.5" stop-color="#1c1c1c"/><stop offset="1" stop-color="#121212"/></linearGradient><linearGradient id="gRowL" x1="0" y1="0" x2="1" y2="0"><stop offset="0" stop-color="#8c8c8c"/><stop offset="0.3" stop-color="#828282"/><stop offset="1" stop-color="#848484"/></linearGradient><clipPath id="cpTbl"><rect x="320.4" y="663.5" width="1344" height="228"/></clipPath></defs>
<rect x="320.4" y="662.8" width="1347.6" height="228.7" fill="#161616"/>
<rect x="322.4" y="665" width="1343.3" height="24.8" fill="url(#gHdr)"/>
<rect x="322.4" y="689.6" width="1343.3" height="23.2" fill="#3d3d3d"/>
<rect x="322.4" y="712.8" width="1343.3" height="23.2" fill="url(#gRowL)"/>
<rect x="322.4" y="736.0" width="1343.3" height="23.2" fill="#3d3d3d"/>
<rect x="322.4" y="759.1" width="1343.3" height="23.2" fill="url(#gRowL)"/>
<rect x="322.4" y="782.3" width="1343.3" height="23.2" fill="#3d3d3d"/>
<rect x="322.4" y="805.5" width="1343.3" height="23.2" fill="url(#gRowL)"/>
<rect x="322.4" y="828.7" width="1343.3" height="23.2" fill="#3d3d3d"/>
<rect x="322.4" y="851.9" width="1343.3" height="23.2" fill="url(#gRowL)"/>
<rect x="322.4" y="874.4" width="1343.3" height="15.3" fill="#5e5e5e"/>
<rect x="340" y="876.2" width="646" height="12" rx="6" fill="#484848"/>
<rect x="323.5" y="876" width="14" height="12.5" rx="2.5" fill="#707070"/>
<path d="M326.8,882.2 L333.8,878.2 L333.8,886.4 Z" fill="#2a2a2a"/>
<rect x="1648.4" y="876" width="14" height="12.5" rx="2.5" fill="#707070"/>
<path d="M1659.2,882.2 L1652.2,878.2 L1652.2,886.4 Z" fill="#2a2a2a"/>
<g clip-path="url(#cpTbl)">
<text x="492.8" y="681.9" font-size="13.52" fill="#f0f0f0" font-weight="bold" textLength="44.9" lengthAdjust="spacingAndGlyphs">White</text>
<text x="554.8" y="681.9" font-size="13.52" fill="#f0f0f0" font-weight="bold" textLength="60.5" lengthAdjust="spacingAndGlyphs">Gray 80</text>
<text x="625.5" y="681.9" font-size="13.52" fill="#f0f0f0" font-weight="bold" textLength="60.5" lengthAdjust="spacingAndGlyphs">Gray 65</text>
<text x="696.3" y="681.9" font-size="13.52" fill="#f0f0f0" font-weight="bold" textLength="60.5" lengthAdjust="spacingAndGlyphs">Gray 50</text>
<text x="767.0" y="681.9" font-size="13.52" fill="#f0f0f0" font-weight="bold" textLength="60.5" lengthAdjust="spacingAndGlyphs">Gray 35</text>
<text x="841.0" y="681.9" font-size="13.52" fill="#f0f0f0" font-weight="bold" textLength="44.0" lengthAdjust="spacingAndGlyphs">Black</text>
<text x="894.6" y="681.9" font-size="13.52" fill="#f0f0f0" font-weight="bold" textLength="76.1" lengthAdjust="spacingAndGlyphs">Dark Skin</text>
<text x="978.8" y="681.9" font-size="13.52" fill="#f0f0f0" font-weight="bold" textLength="79.7" lengthAdjust="spacingAndGlyphs">Light Skin</text>
<text x="1064.3" y="681.9" font-size="13.52" fill="#f0f0f0" font-weight="bold" textLength="69.7" lengthAdjust="spacingAndGlyphs">Blue Sky</text>
<text x="1140.4" y="681.9" font-size="13.52" fill="#f0f0f0" font-weight="bold" textLength="57.7" lengthAdjust="spacingAndGlyphs">Foliage</text>
<text x="1206.5" y="681.9" font-size="13.52" fill="#f0f0f0" font-weight="bold" textLength="93.5" lengthAdjust="spacingAndGlyphs">Blue Flower</text>
<text x="1309.9" y="681.9" font-size="13.52" fill="#f0f0f0" font-weight="bold" textLength="102.6" lengthAdjust="spacingAndGlyphs">Bluish Green</text>
<text x="1420.9" y="681.9" font-size="13.52" fill="#f0f0f0" font-weight="bold" textLength="57.7" lengthAdjust="spacingAndGlyphs">Orange</text>
<text x="1488.6" y="681.9" font-size="13.52" fill="#f0f0f0" font-weight="bold" textLength="106.3" lengthAdjust="spacingAndGlyphs">Purplish Blue</text>
<text x="1602.7" y="681.9" font-size="13.52" fill="#f0f0f0" font-weight="bold" textLength="109.0" lengthAdjust="spacingAndGlyphs">Moderate Red</text>
<text x="336.5" y="707.2" font-size="15.41" fill="#f0f0f0" font-weight="bold" textLength="72.4" lengthAdjust="spacingAndGlyphs">x: CIE31</text>
<text x="487.8" y="707.2" font-size="15.70" fill="#f0f0f0" textLength="34.8" lengthAdjust="spacingAndGlyphs">0,31</text>
<text x="554.8" y="707.2" font-size="15.70" fill="#f0f0f0" textLength="34.8" lengthAdjust="spacingAndGlyphs">0,31</text>
<text x="625.5" y="707.2" font-size="15.70" fill="#f0f0f0" textLength="34.8" lengthAdjust="spacingAndGlyphs">0,31</text>
<text x="696.3" y="707.2" font-size="15.70" fill="#f0f0f0" textLength="34.8" lengthAdjust="spacingAndGlyphs">0,31</text>
<text x="767.0" y="707.2" font-size="15.70" fill="#f0f0f0" textLength="34.8" lengthAdjust="spacingAndGlyphs">0,31</text>
<text x="837.8" y="707.2" font-size="15.70" fill="#f0f0f0" textLength="34.8" lengthAdjust="spacingAndGlyphs">0,24</text>
<text x="894.6" y="707.2" font-size="15.70" fill="#f0f0f0" textLength="34.8" lengthAdjust="spacingAndGlyphs">0,42</text>
<text x="978.8" y="707.2" font-size="15.70" fill="#f0f0f0" textLength="34.8" lengthAdjust="spacingAndGlyphs">0,40</text>
<text x="1064.3" y="707.2" font-size="15.70" fill="#f0f0f0" textLength="34.8" lengthAdjust="spacingAndGlyphs">0,24</text>
<text x="1140.4" y="707.2" font-size="15.70" fill="#f0f0f0" textLength="34.8" lengthAdjust="spacingAndGlyphs">0,34</text>
<text x="1206.5" y="707.2" font-size="15.70" fill="#f0f0f0" textLength="34.8" lengthAdjust="spacingAndGlyphs">0,27</text>
<text x="1309.9" y="707.2" font-size="15.70" fill="#f0f0f0" textLength="34.8" lengthAdjust="spacingAndGlyphs">0,24</text>
<text x="1420.9" y="707.2" font-size="15.70" fill="#f0f0f0" textLength="34.8" lengthAdjust="spacingAndGlyphs">0,57</text>
<text x="1488.6" y="707.2" font-size="15.70" fill="#f0f0f0" textLength="34.8" lengthAdjust="spacingAndGlyphs">0,20</text>
<text x="1602.7" y="707.2" font-size="15.70" fill="#f0f0f0" textLength="34.8" lengthAdjust="spacingAndGlyphs">0,52</text>
<text x="336.5" y="730.4" font-size="15.41" fill="#f0f0f0" font-weight="bold" textLength="72.4" lengthAdjust="spacingAndGlyphs">y: CIE31</text>
<text x="487.8" y="730.4" font-size="15.70" fill="#f0f0f0" textLength="34.8" lengthAdjust="spacingAndGlyphs">0,33</text>
<text x="554.8" y="730.4" font-size="15.70" fill="#f0f0f0" textLength="34.8" lengthAdjust="spacingAndGlyphs">0,33</text>
<text x="625.5" y="730.4" font-size="15.70" fill="#f0f0f0" textLength="34.8" lengthAdjust="spacingAndGlyphs">0,33</text>
<text x="696.3" y="730.4" font-size="15.70" fill="#f0f0f0" textLength="34.8" lengthAdjust="spacingAndGlyphs">0,33</text>
<text x="767.0" y="730.4" font-size="15.70" fill="#f0f0f0" textLength="34.8" lengthAdjust="spacingAndGlyphs">0,33</text>
<text x="837.8" y="730.4" font-size="15.70" fill="#f0f0f0" textLength="34.8" lengthAdjust="spacingAndGlyphs">0,23</text>
<text x="894.6" y="730.4" font-size="15.70" fill="#f0f0f0" textLength="34.8" lengthAdjust="spacingAndGlyphs">0,37</text>
<text x="978.8" y="730.4" font-size="15.70" fill="#f0f0f0" textLength="34.8" lengthAdjust="spacingAndGlyphs">0,36</text>
<text x="1064.3" y="730.4" font-size="15.70" fill="#f0f0f0" textLength="34.8" lengthAdjust="spacingAndGlyphs">0,26</text>
<text x="1140.4" y="730.4" font-size="15.70" fill="#f0f0f0" textLength="34.8" lengthAdjust="spacingAndGlyphs">0,45</text>
<text x="1206.5" y="730.4" font-size="15.70" fill="#f0f0f0" textLength="34.8" lengthAdjust="spacingAndGlyphs">0,25</text>
<text x="1309.9" y="730.4" font-size="15.70" fill="#f0f0f0" textLength="34.8" lengthAdjust="spacingAndGlyphs">0,37</text>
<text x="1420.9" y="730.4" font-size="15.70" fill="#f0f0f0" textLength="34.8" lengthAdjust="spacingAndGlyphs">0,41</text>
<text x="1488.6" y="730.4" font-size="15.70" fill="#f0f0f0" textLength="34.8" lengthAdjust="spacingAndGlyphs">0,17</text>
<text x="1602.7" y="730.4" font-size="15.70" fill="#f0f0f0" textLength="34.8" lengthAdjust="spacingAndGlyphs">0,31</text>
<text x="336.5" y="753.6" font-size="15.41" fill="#f0f0f0" font-weight="bold" textLength="12.2" lengthAdjust="spacingAndGlyphs">Y</text>
<text x="487.8" y="753.6" font-size="15.70" fill="#f0f0f0" textLength="54.7" lengthAdjust="spacingAndGlyphs">580,69</text>
<text x="554.8" y="753.6" font-size="15.70" fill="#f0f0f0" textLength="54.7" lengthAdjust="spacingAndGlyphs">456,81</text>
<text x="625.5" y="753.6" font-size="15.70" fill="#f0f0f0" textLength="54.7" lengthAdjust="spacingAndGlyphs">369,26</text>
<text x="696.3" y="753.6" font-size="15.70" fill="#f0f0f0" textLength="54.7" lengthAdjust="spacingAndGlyphs">283,36</text>
<text x="767.0" y="753.6" font-size="15.70" fill="#f0f0f0" textLength="54.7" lengthAdjust="spacingAndGlyphs">195,20</text>
<text x="837.8" y="753.6" font-size="15.70" fill="#f0f0f0" textLength="34.8" lengthAdjust="spacingAndGlyphs">0,55</text>
<text x="894.6" y="753.6" font-size="15.70" fill="#f0f0f0" textLength="44.8" lengthAdjust="spacingAndGlyphs">52,47</text>
<text x="978.8" y="753.6" font-size="15.70" fill="#f0f0f0" textLength="54.7" lengthAdjust="spacingAndGlyphs">200,25</text>
<text x="1064.3" y="753.6" font-size="15.70" fill="#f0f0f0" textLength="54.7" lengthAdjust="spacingAndGlyphs">104,16</text>
<text x="1140.4" y="753.6" font-size="15.70" fill="#f0f0f0" textLength="44.8" lengthAdjust="spacingAndGlyphs">68,10</text>
<text x="1206.5" y="753.6" font-size="15.70" fill="#f0f0f0" textLength="54.7" lengthAdjust="spacingAndGlyphs">132,61</text>
<text x="1309.9" y="753.6" font-size="15.70" fill="#f0f0f0" textLength="54.7" lengthAdjust="spacingAndGlyphs">233,70</text>
<text x="1420.9" y="753.6" font-size="15.70" fill="#f0f0f0" textLength="54.7" lengthAdjust="spacingAndGlyphs">165,35</text>
<text x="1488.6" y="753.6" font-size="15.70" fill="#f0f0f0" textLength="44.8" lengthAdjust="spacingAndGlyphs">64,29</text>
<text x="1602.7" y="753.6" font-size="15.70" fill="#f0f0f0" textLength="52.1" lengthAdjust="spacingAndGlyphs">111,14</text>
<text x="336.5" y="776.7" font-size="15.41" fill="#f0f0f0" font-weight="bold" textLength="127.0" lengthAdjust="spacingAndGlyphs">Target x:CIE31</text>
<text x="487.8" y="776.7" font-size="15.70" fill="#f0f0f0" textLength="34.8" lengthAdjust="spacingAndGlyphs">0,31</text>
<text x="554.8" y="776.7" font-size="15.70" fill="#f0f0f0" textLength="34.8" lengthAdjust="spacingAndGlyphs">0,31</text>
<text x="625.5" y="776.7" font-size="15.70" fill="#f0f0f0" textLength="34.8" lengthAdjust="spacingAndGlyphs">0,31</text>
<text x="696.3" y="776.7" font-size="15.70" fill="#f0f0f0" textLength="34.8" lengthAdjust="spacingAndGlyphs">0,31</text>
<text x="767.0" y="776.7" font-size="15.70" fill="#f0f0f0" textLength="34.8" lengthAdjust="spacingAndGlyphs">0,31</text>
<text x="837.8" y="776.7" font-size="15.70" fill="#f0f0f0" textLength="34.8" lengthAdjust="spacingAndGlyphs">0,31</text>
<text x="894.6" y="776.7" font-size="15.70" fill="#f0f0f0" textLength="34.8" lengthAdjust="spacingAndGlyphs">0,40</text>
<text x="978.8" y="776.7" font-size="15.70" fill="#f0f0f0" textLength="34.8" lengthAdjust="spacingAndGlyphs">0,38</text>
<text x="1064.3" y="776.7" font-size="15.70" fill="#f0f0f0" textLength="34.8" lengthAdjust="spacingAndGlyphs">0,25</text>
<text x="1140.4" y="776.7" font-size="15.70" fill="#f0f0f0" textLength="34.8" lengthAdjust="spacingAndGlyphs">0,34</text>
<text x="1206.5" y="776.7" font-size="15.70" fill="#f0f0f0" textLength="34.8" lengthAdjust="spacingAndGlyphs">0,27</text>
<text x="1309.9" y="776.7" font-size="15.70" fill="#f0f0f0" textLength="34.8" lengthAdjust="spacingAndGlyphs">0,26</text>
<text x="1420.9" y="776.7" font-size="15.70" fill="#f0f0f0" textLength="34.8" lengthAdjust="spacingAndGlyphs">0,51</text>
<text x="1488.6" y="776.7" font-size="15.70" fill="#f0f0f0" textLength="34.8" lengthAdjust="spacingAndGlyphs">0,22</text>
<text x="1602.7" y="776.7" font-size="15.70" fill="#f0f0f0" textLength="34.8" lengthAdjust="spacingAndGlyphs">0,46</text>
<text x="336.5" y="799.9" font-size="15.41" fill="#f0f0f0" font-weight="bold" textLength="127.0" lengthAdjust="spacingAndGlyphs">Target y:CIE31</text>
<text x="487.8" y="799.9" font-size="15.70" fill="#f0f0f0" textLength="34.8" lengthAdjust="spacingAndGlyphs">0,33</text>
<text x="554.8" y="799.9" font-size="15.70" fill="#f0f0f0" textLength="34.8" lengthAdjust="spacingAndGlyphs">0,33</text>
<text x="625.5" y="799.9" font-size="15.70" fill="#f0f0f0" textLength="34.8" lengthAdjust="spacingAndGlyphs">0,33</text>
<text x="696.3" y="799.9" font-size="15.70" fill="#f0f0f0" textLength="34.8" lengthAdjust="spacingAndGlyphs">0,33</text>
<text x="767.0" y="799.9" font-size="15.70" fill="#f0f0f0" textLength="34.8" lengthAdjust="spacingAndGlyphs">0,33</text>
<text x="837.8" y="799.9" font-size="15.70" fill="#f0f0f0" textLength="34.8" lengthAdjust="spacingAndGlyphs">0,33</text>
<text x="894.6" y="799.9" font-size="15.70" fill="#f0f0f0" textLength="34.8" lengthAdjust="spacingAndGlyphs">0,36</text>
<text x="978.8" y="799.9" font-size="15.70" fill="#f0f0f0" textLength="34.8" lengthAdjust="spacingAndGlyphs">0,36</text>
<text x="1064.3" y="799.9" font-size="15.70" fill="#f0f0f0" textLength="34.8" lengthAdjust="spacingAndGlyphs">0,27</text>
<text x="1140.4" y="799.9" font-size="15.70" fill="#f0f0f0" textLength="34.8" lengthAdjust="spacingAndGlyphs">0,43</text>
<text x="1206.5" y="799.9" font-size="15.70" fill="#f0f0f0" textLength="34.8" lengthAdjust="spacingAndGlyphs">0,25</text>
<text x="1309.9" y="799.9" font-size="15.70" fill="#f0f0f0" textLength="34.8" lengthAdjust="spacingAndGlyphs">0,36</text>
<text x="1420.9" y="799.9" font-size="15.70" fill="#f0f0f0" textLength="34.8" lengthAdjust="spacingAndGlyphs">0,41</text>
<text x="1488.6" y="799.9" font-size="15.70" fill="#f0f0f0" textLength="34.8" lengthAdjust="spacingAndGlyphs">0,19</text>
<text x="1602.7" y="799.9" font-size="15.70" fill="#f0f0f0" textLength="34.8" lengthAdjust="spacingAndGlyphs">0,31</text>
<text x="336.5" y="823.1" font-size="15.41" fill="#f0f0f0" font-weight="bold" textLength="71.7" lengthAdjust="spacingAndGlyphs">Target Y</text>
<text x="487.8" y="823.1" font-size="15.70" fill="#f0f0f0" textLength="54.7" lengthAdjust="spacingAndGlyphs">580,69</text>
<text x="554.8" y="823.1" font-size="15.70" fill="#f0f0f0" textLength="54.7" lengthAdjust="spacingAndGlyphs">459,50</text>
<text x="625.5" y="823.1" font-size="15.70" fill="#f0f0f0" textLength="54.7" lengthAdjust="spacingAndGlyphs">370,25</text>
<text x="696.3" y="823.1" font-size="15.70" fill="#f0f0f0" textLength="54.7" lengthAdjust="spacingAndGlyphs">285,13</text>
<text x="767.0" y="823.1" font-size="15.70" fill="#f0f0f0" textLength="54.7" lengthAdjust="spacingAndGlyphs">198,55</text>
<text x="837.8" y="823.1" font-size="15.70" fill="#f0f0f0" textLength="34.8" lengthAdjust="spacingAndGlyphs">0,00</text>
<text x="894.6" y="823.1" font-size="15.70" fill="#f0f0f0" textLength="44.8" lengthAdjust="spacingAndGlyphs">58,49</text>
<text x="978.8" y="823.1" font-size="15.70" fill="#f0f0f0" textLength="54.7" lengthAdjust="spacingAndGlyphs">202,63</text>
<text x="1064.3" y="823.1" font-size="15.70" fill="#f0f0f0" textLength="54.7" lengthAdjust="spacingAndGlyphs">108,58</text>
<text x="1140.4" y="823.1" font-size="15.70" fill="#f0f0f0" textLength="44.8" lengthAdjust="spacingAndGlyphs">75,68</text>
<text x="1206.5" y="823.1" font-size="15.70" fill="#f0f0f0" textLength="54.7" lengthAdjust="spacingAndGlyphs">135,41</text>
<text x="1309.9" y="823.1" font-size="15.70" fill="#f0f0f0" textLength="54.7" lengthAdjust="spacingAndGlyphs">243,15</text>
<text x="1420.9" y="823.1" font-size="15.70" fill="#f0f0f0" textLength="54.7" lengthAdjust="spacingAndGlyphs">164,61</text>
<text x="1488.6" y="823.1" font-size="15.70" fill="#f0f0f0" textLength="44.8" lengthAdjust="spacingAndGlyphs">68,25</text>
<text x="1602.7" y="823.1" font-size="15.70" fill="#f0f0f0" textLength="54.7" lengthAdjust="spacingAndGlyphs">108,45</text>
<text x="336.5" y="846.3" font-size="15.41" fill="#f0f0f0" font-weight="bold" textLength="71.3" lengthAdjust="spacingAndGlyphs">ΔE 2000</text>
<text x="487.8" y="846.3" font-size="15.70" fill="#f0f0f0" textLength="34.8" lengthAdjust="spacingAndGlyphs">1,97</text>
<text x="554.8" y="846.3" font-size="15.70" fill="#f0f0f0" textLength="34.8" lengthAdjust="spacingAndGlyphs">1,94</text>
<text x="625.5" y="846.3" font-size="15.70" fill="#f0f0f0" textLength="34.8" lengthAdjust="spacingAndGlyphs">1,37</text>
<text x="696.3" y="846.3" font-size="15.70" fill="#f0f0f0" textLength="34.8" lengthAdjust="spacingAndGlyphs">0,87</text>
<text x="767.0" y="846.3" font-size="15.70" fill="#f0f0f0" textLength="34.8" lengthAdjust="spacingAndGlyphs">0,69</text>
<text x="837.8" y="846.3" font-size="15.70" fill="#f0f0f0" textLength="34.8" lengthAdjust="spacingAndGlyphs">1,84</text>
<text x="894.6" y="846.3" font-size="15.70" fill="#f0f0f0" textLength="34.8" lengthAdjust="spacingAndGlyphs">3,34</text>
<text x="978.8" y="846.3" font-size="15.70" fill="#f0f0f0" textLength="34.8" lengthAdjust="spacingAndGlyphs">3,39</text>
<text x="1064.3" y="846.3" font-size="15.70" fill="#f0f0f0" textLength="34.8" lengthAdjust="spacingAndGlyphs">2,77</text>
<text x="1140.4" y="846.3" font-size="15.70" fill="#f0f0f0" textLength="34.8" lengthAdjust="spacingAndGlyphs">2,56</text>
<text x="1206.5" y="846.3" font-size="15.70" fill="#f0f0f0" textLength="34.8" lengthAdjust="spacingAndGlyphs">0,99</text>
<text x="1309.9" y="846.3" font-size="15.70" fill="#f0f0f0" textLength="34.8" lengthAdjust="spacingAndGlyphs">3,58</text>
<text x="1420.9" y="846.3" font-size="15.70" fill="#f0f0f0" textLength="34.8" lengthAdjust="spacingAndGlyphs">6,48</text>
<text x="1488.6" y="846.3" font-size="15.70" fill="#f0f0f0" textLength="34.8" lengthAdjust="spacingAndGlyphs">2,54</text>
<text x="1602.7" y="846.3" font-size="15.70" fill="#f0f0f0" textLength="34.8" lengthAdjust="spacingAndGlyphs">5,47</text>
<text x="336.5" y="869.5" font-size="15.41" fill="#f0f0f0" font-weight="bold" textLength="59.0" lengthAdjust="spacingAndGlyphs">ΔE ITP</text>
<text x="487.8" y="869.5" font-size="15.70" fill="#f0f0f0" textLength="34.8" lengthAdjust="spacingAndGlyphs">1,52</text>
<text x="554.8" y="869.5" font-size="15.70" fill="#f0f0f0" textLength="34.8" lengthAdjust="spacingAndGlyphs">1,51</text>
<text x="625.5" y="869.5" font-size="15.70" fill="#f0f0f0" textLength="34.8" lengthAdjust="spacingAndGlyphs">1,27</text>
<text x="696.3" y="869.5" font-size="15.70" fill="#f0f0f0" textLength="34.8" lengthAdjust="spacingAndGlyphs">0,93</text>
<text x="767.0" y="869.5" font-size="15.70" fill="#f0f0f0" textLength="34.8" lengthAdjust="spacingAndGlyphs">1,38</text>
<text x="837.8" y="869.5" font-size="15.70" fill="#f0f0f0" textLength="44.8" lengthAdjust="spacingAndGlyphs">91,19</text>
<text x="894.6" y="869.5" font-size="15.70" fill="#f0f0f0" textLength="44.8" lengthAdjust="spacingAndGlyphs">15,10</text>
<text x="978.8" y="869.5" font-size="15.70" fill="#f0f0f0" textLength="43.5" lengthAdjust="spacingAndGlyphs">11,03</text>
<text x="1064.3" y="869.5" font-size="15.70" fill="#f0f0f0" textLength="34.8" lengthAdjust="spacingAndGlyphs">9,56</text>
<text x="1140.4" y="869.5" font-size="15.70" fill="#f0f0f0" textLength="44.8" lengthAdjust="spacingAndGlyphs">10,59</text>
<text x="1206.5" y="869.5" font-size="15.70" fill="#f0f0f0" textLength="34.8" lengthAdjust="spacingAndGlyphs">2,72</text>
<text x="1309.9" y="869.5" font-size="15.70" fill="#f0f0f0" textLength="44.8" lengthAdjust="spacingAndGlyphs">12,60</text>
<text x="1420.9" y="869.5" font-size="15.70" fill="#f0f0f0" textLength="44.8" lengthAdjust="spacingAndGlyphs">46,25</text>
<text x="1488.6" y="869.5" font-size="15.70" fill="#f0f0f0" textLength="44.8" lengthAdjust="spacingAndGlyphs">14,25</text>
<text x="1602.7" y="869.5" font-size="15.70" fill="#f0f0f0" textLength="44.8" lengthAdjust="spacingAndGlyphs">46,57</text>
</g>
<defs><linearGradient id="gBtn" x1="0" y1="0" x2="0" y2="1"><stop offset="0" stop-color="#aaaaaa"/><stop offset="0.35" stop-color="#8e8e8e"/><stop offset="1" stop-color="#5c5c5c"/></linearGradient><linearGradient id="gCtl" x1="0" y1="0" x2="0" y2="1"><stop offset="0" stop-color="#b0b0b0"/><stop offset="1" stop-color="#6a6a6a"/></linearGradient><radialGradient id="gCirc" cx="0.5" cy="0.15" r="0.9"><stop offset="0" stop-color="#7a7a7a"/><stop offset="0.6" stop-color="#969696"/><stop offset="1" stop-color="#b4b4b4"/></radialGradient><linearGradient id="gCirc2" x1="0" y1="0" x2="0" y2="1"><stop offset="0" stop-color="#6c6c6c"/><stop offset="1" stop-color="#a8a8a8"/></linearGradient><clipPath id="cpBtn"><rect x="0" y="925" width="1264.5" height="83"/></clipPath></defs>
<rect x="0" y="925" width="1265" height="83" fill="#333333"/>
<g clip-path="url(#cpBtn)">
<rect x="-33.4" y="931.9" width="62.2" height="62" rx="5" fill="url(#gBtn)"/>
<rect x="-26.8" y="938.1" width="49.0" height="14.9" rx="4" fill="#8a84c8" stroke="#000" stroke-opacity="0.25" stroke-width="1"/>
<text x="-22.1" y="971.9" font-size="13.66" fill="#2b2b2b" font-weight="bold" textLength="26.6" lengthAdjust="spacingAndGlyphs">Blue</text>
<text x="-22.1" y="986.3" font-size="13.66" fill="#2b2b2b" font-weight="bold" textLength="39.6" lengthAdjust="spacingAndGlyphs">Flower</text>
<rect x="31.7" y="931.9" width="62.2" height="62" rx="5" fill="url(#gBtn)"/>
<rect x="38.3" y="938.1" width="49.0" height="14.9" rx="4" fill="#5fc4aa" stroke="#000" stroke-opacity="0.25" stroke-width="1"/>
<text x="44.0" y="971.9" font-size="13.66" fill="#2b2b2b" font-weight="bold" textLength="37.6" lengthAdjust="spacingAndGlyphs">Bluish</text>
<text x="44.0" y="986.3" font-size="13.66" fill="#2b2b2b" font-weight="bold" textLength="35.5" lengthAdjust="spacingAndGlyphs">Green</text>
<rect x="96.7" y="931.9" width="62.2" height="62" rx="5" fill="url(#gBtn)"/>
<rect x="103.3" y="938.1" width="49.0" height="29.5" rx="4" fill="#e07a28" stroke="#000" stroke-opacity="0.25" stroke-width="1"/>
<text x="106.3" y="986.3" font-size="13.66" fill="#2b2b2b" font-weight="bold" textLength="43.0" lengthAdjust="spacingAndGlyphs">Orange</text>
<rect x="161.9" y="931.9" width="62.2" height="62" rx="5" fill="url(#gBtn)"/>
<rect x="168.5" y="938.1" width="49.0" height="14.9" rx="4" fill="#4a5ab0" stroke="#000" stroke-opacity="0.25" stroke-width="1"/>
<text x="168.4" y="971.9" font-size="13.66" fill="#2b2b2b" font-weight="bold" textLength="49.2" lengthAdjust="spacingAndGlyphs">Purplish</text>
<text x="168.4" y="986.3" font-size="13.66" fill="#2b2b2b" font-weight="bold" textLength="26.6" lengthAdjust="spacingAndGlyphs">Blue</text>
<rect x="226.9" y="931.9" width="62.2" height="62" rx="5" fill="url(#gBtn)"/>
<rect x="233.5" y="938.1" width="49.0" height="14.9" rx="4" fill="#cc4c5a" stroke="#000" stroke-opacity="0.25" stroke-width="1"/>
<text x="230.7" y="971.9" font-size="13.66" fill="#2b2b2b" font-weight="bold" textLength="54.7" lengthAdjust="spacingAndGlyphs">Moderate</text>
<text x="230.7" y="986.3" font-size="13.66" fill="#2b2b2b" font-weight="bold" textLength="23.2" lengthAdjust="spacingAndGlyphs">Red</text>
<rect x="291.9" y="931.9" width="62.2" height="62" rx="5" fill="url(#gBtn)"/>
<rect x="298.5" y="938.1" width="49.0" height="29.5" rx="4" fill="#643c7a" stroke="#000" stroke-opacity="0.25" stroke-width="1"/>
<text x="303.9" y="986.3" font-size="13.66" fill="#2b2b2b" font-weight="bold" textLength="38.3" lengthAdjust="spacingAndGlyphs">Purple</text>
<rect x="356.9" y="931.9" width="62.2" height="62" rx="5" fill="url(#gBtn)"/>
<rect x="363.5" y="938.1" width="49.0" height="14.9" rx="4" fill="#a6c83c" stroke="#000" stroke-opacity="0.25" stroke-width="1"/>
<text x="368.9" y="971.9" font-size="13.66" fill="#2b2b2b" font-weight="bold" textLength="38.3" lengthAdjust="spacingAndGlyphs">Yellow</text>
<text x="368.9" y="986.3" font-size="13.66" fill="#2b2b2b" font-weight="bold" textLength="35.5" lengthAdjust="spacingAndGlyphs">Green</text>
<rect x="421.9" y="931.9" width="62.2" height="62" rx="5" fill="url(#gBtn)"/>
<rect x="428.5" y="938.1" width="49.0" height="14.9" rx="4" fill="#eca02a" stroke="#000" stroke-opacity="0.25" stroke-width="1"/>
<text x="431.5" y="971.9" font-size="13.66" fill="#2b2b2b" font-weight="bold" textLength="43.0" lengthAdjust="spacingAndGlyphs">Orange</text>
<text x="431.5" y="986.3" font-size="13.66" fill="#2b2b2b" font-weight="bold" textLength="38.3" lengthAdjust="spacingAndGlyphs">Yellow</text>
<rect x="486.9" y="931.9" width="62.2" height="62" rx="5" fill="url(#gBtn)"/>
<rect x="493.5" y="938.1" width="49.0" height="29.5" rx="4" fill="#2c3c9c" stroke="#000" stroke-opacity="0.25" stroke-width="1"/>
<text x="504.7" y="986.3" font-size="13.66" fill="#2b2b2b" font-weight="bold" textLength="26.6" lengthAdjust="spacingAndGlyphs">Blue</text>
<rect x="551.9" y="931.9" width="62.2" height="62" rx="5" fill="url(#gBtn)"/>
<rect x="558.5" y="938.1" width="49.0" height="29.5" rx="4" fill="#42a046" stroke="#000" stroke-opacity="0.25" stroke-width="1"/>
<text x="565.2" y="986.3" font-size="13.66" fill="#2b2b2b" font-weight="bold" textLength="35.5" lengthAdjust="spacingAndGlyphs">Green</text>
<rect x="616.9" y="931.9" width="62.2" height="62" rx="5" fill="url(#gBtn)"/>
<rect x="623.5" y="938.1" width="49.0" height="29.5" rx="4" fill="#b0303a" stroke="#000" stroke-opacity="0.25" stroke-width="1"/>
<text x="636.4" y="986.3" font-size="13.66" fill="#2b2b2b" font-weight="bold" textLength="23.2" lengthAdjust="spacingAndGlyphs">Red</text>
<rect x="681.9" y="931.9" width="62.2" height="62" rx="5" fill="url(#gBtn)"/>
<rect x="688.5" y="938.1" width="49.0" height="29.5" rx="4" fill="#eec824" stroke="#000" stroke-opacity="0.25" stroke-width="1"/>
<text x="693.9" y="986.3" font-size="13.66" fill="#2b2b2b" font-weight="bold" textLength="38.3" lengthAdjust="spacingAndGlyphs">Yellow</text>
<rect x="746.9" y="931.9" width="62.2" height="62" rx="5" fill="url(#gBtn)"/>
<rect x="753.5" y="938.1" width="49.0" height="29.5" rx="4" fill="#bc54a0" stroke="#000" stroke-opacity="0.25" stroke-width="1"/>
<text x="753.1" y="986.3" font-size="13.66" fill="#2b2b2b" font-weight="bold" textLength="49.9" lengthAdjust="spacingAndGlyphs">Magenta</text>
<rect x="811.9" y="931.9" width="62.2" height="62" rx="5" fill="url(#gBtn)"/>
<rect x="818.5" y="938.1" width="49.0" height="29.5" rx="4" fill="#0888a8" stroke="#000" stroke-opacity="0.25" stroke-width="1"/>
<text x="828.0" y="986.3" font-size="13.66" fill="#2b2b2b" font-weight="bold" textLength="30.1" lengthAdjust="spacingAndGlyphs">Cyan</text>
<rect x="876.9" y="931.9" width="62.2" height="62" rx="5" fill="url(#gBtn)"/>
<rect x="883.5" y="938.1" width="49.0" height="29.5" rx="4" fill="#ff0000" stroke="#000" stroke-opacity="0.25" stroke-width="1"/>
<text x="879.0" y="986.3" font-size="13.66" fill="#2b2b2b" font-weight="bold" textLength="58.1" lengthAdjust="spacingAndGlyphs">100% Red</text>
<rect x="941.9" y="931.9" width="62.2" height="62" rx="5" fill="url(#gBtn)"/>
<rect x="948.5" y="938.1" width="49.0" height="14.9" rx="4" fill="#00ff00" stroke="#000" stroke-opacity="0.25" stroke-width="1"/>
<text x="955.2" y="971.9" font-size="13.66" fill="#2b2b2b" font-weight="bold" textLength="31.4" lengthAdjust="spacingAndGlyphs">100%</text>
<text x="955.2" y="986.3" font-size="13.66" fill="#2b2b2b" font-weight="bold" textLength="35.5" lengthAdjust="spacingAndGlyphs">Green</text>
<rect x="1006.9" y="931.9" width="62.2" height="62" rx="5" fill="url(#gBtn)"/>
<rect x="1013.5" y="938.1" width="49.0" height="14.9" rx="4" fill="#0000ff" stroke="#000" stroke-opacity="0.25" stroke-width="1"/>
<text x="1022.3" y="971.9" font-size="13.66" fill="#2b2b2b" font-weight="bold" textLength="31.4" lengthAdjust="spacingAndGlyphs">100%</text>
<text x="1022.3" y="986.3" font-size="13.66" fill="#2b2b2b" font-weight="bold" textLength="26.6" lengthAdjust="spacingAndGlyphs">Blue</text>
<rect x="1071.8" y="931.9" width="62.2" height="62" rx="5" fill="url(#gBtn)"/>
<rect x="1078.4" y="938.1" width="49.0" height="14.9" rx="4" fill="#00ffff" stroke="#000" stroke-opacity="0.25" stroke-width="1"/>
<text x="1087.2" y="971.9" font-size="13.66" fill="#2b2b2b" font-weight="bold" textLength="31.4" lengthAdjust="spacingAndGlyphs">100%</text>
<text x="1087.2" y="986.3" font-size="13.66" fill="#2b2b2b" font-weight="bold" textLength="30.1" lengthAdjust="spacingAndGlyphs">Cyan</text>
<rect x="1136.7" y="931.9" width="62.2" height="62" rx="5" fill="url(#gBtn)"/>
<rect x="1143.3" y="938.1" width="49.0" height="14.9" rx="4" fill="#ff00ff" stroke="#000" stroke-opacity="0.25" stroke-width="1"/>
<text x="1142.9" y="971.9" font-size="13.66" fill="#2b2b2b" font-weight="bold" textLength="31.4" lengthAdjust="spacingAndGlyphs">100%</text>
<text x="1142.9" y="986.3" font-size="13.66" fill="#2b2b2b" font-weight="bold" textLength="49.9" lengthAdjust="spacingAndGlyphs">Magenta</text>
<rect x="1201.8" y="931.9" width="62.2" height="62" rx="5" fill="#2a2a2a"/>
<rect x="1208.4" y="938.1" width="49.0" height="14.9" rx="4" fill="#ffff00" stroke="#000" stroke-opacity="0.25" stroke-width="1"/>
<text x="1213.8" y="971.9" font-size="13.66" fill="#ffffff" font-weight="bold" textLength="31.4" lengthAdjust="spacingAndGlyphs">100%</text>
<text x="1213.8" y="986.3" font-size="13.66" fill="#ffffff" font-weight="bold" textLength="38.3" lengthAdjust="spacingAndGlyphs">Yellow</text>
</g>
<rect x="0" y="992.5" width="1265" height="15.5" fill="#5a5a5a"/>
<rect x="449.6" y="994" width="795" height="12.4" rx="6.2" fill="#4a4a4a"/>
<rect x="1.5" y="994" width="13" height="13" rx="2.5" fill="#707070"/>
<path d="M4.5,1000.5 L11.5,996.3 L11.5,1004.7 Z" fill="#2a2a2a"/>
<rect x="1250" y="994" width="13.5" height="13" rx="2.5" fill="#707070"/>
<path d="M1260.5,1000.5 L1253.5,996.3 L1253.5,1004.7 Z" fill="#2a2a2a"/>
<rect x="1265" y="931.2" width="60.3" height="80" rx="5" fill="url(#gCtl)"/>
<line x1="1265" y1="954.3" x2="1325.3" y2="954.3" stroke="#3a3a3a" stroke-width="1.2"/>
<circle cx="1295.6" cy="943" r="9.5" fill="url(#gCirc2)"/>
<path d="M1290.4,946 L1295.6,940.4 L1300.8,946 Z" fill="#2e2e2e"/>
<defs><linearGradient id="gStop" x1="0" y1="0" x2="0" y2="1"><stop offset="0" stop-color="#b6b6b6"/><stop offset="0.5" stop-color="#b0b0b0"/><stop offset="0.5" stop-color="#9a9a9a"/><stop offset="1" stop-color="#a4a4a4"/></linearGradient><linearGradient id="gStopIn" x1="0" y1="0" x2="0" y2="1"><stop offset="0" stop-color="#1e1e1e"/><stop offset="0.5" stop-color="#1e1e1e"/><stop offset="0.5" stop-color="#000"/><stop offset="1" stop-color="#000"/></linearGradient></defs>
<rect x="1276.2" y="963" width="37.5" height="36.5" rx="4.5" fill="url(#gStop)" stroke="#1e1e1e" stroke-width="2.2"/>
<rect x="1287" y="972.8" width="17" height="17.1" fill="url(#gStopIn)"/>
<rect x="1326" y="931.2" width="342" height="37.8" fill="url(#gCtl)"/>
<rect x="1553" y="931.2" width="56.3" height="37.8" fill="#2e2e2e"/>
<line x1="1384.4" y1="931.2" x2="1384.4" y2="969" stroke="#3a3a3a" stroke-width="1.2"/>
<line x1="1440.5" y1="931.2" x2="1440.5" y2="969" stroke="#3a3a3a" stroke-width="1.2"/>
<line x1="1496.8" y1="931.2" x2="1496.8" y2="969" stroke="#3a3a3a" stroke-width="1.2"/>
<line x1="1553" y1="931.2" x2="1553" y2="969" stroke="#3a3a3a" stroke-width="1.2"/>
<line x1="1609.3" y1="931.2" x2="1609.3" y2="969" stroke="#3a3a3a" stroke-width="1.2"/>
<rect x="1326" y="969" width="342" height="40" fill="url(#gCtl)"/>
<line x1="1326" y1="969.2" x2="1668" y2="969.2" stroke="#3a3a3a" stroke-width="1.4"/>
<line x1="1496.8" y1="969" x2="1496.8" y2="1008" stroke="#3a3a3a" stroke-width="1.2"/>
<circle cx="1355.4" cy="949.8" r="12.3" fill="url(#gCirc2)"/>
<circle cx="1412.2" cy="949.8" r="12.3" fill="url(#gCirc2)"/>
<circle cx="1468.7" cy="949.8" r="12.3" fill="url(#gCirc2)"/>
<circle cx="1525" cy="949.8" r="12.3" fill="url(#gCirc2)"/>
<circle cx="1638.7" cy="949.8" r="12.3" fill="url(#gCirc2)"/>
<circle cx="1581.2" cy="949.8" r="12.3" fill="#262626"/>
<rect x="1350.5" y="945" width="9.8" height="9.8" fill="#2e2e2e"/>
<path d="M1408.3,943.5 L1418,950 L1408.3,956.5 Z" fill="#2e2e2e"/>
<path d="M1463.8,943.8 h-1.8 v12 h1.8 M1473.6,943.8 h1.8 v12 h-1.8" stroke="#2e2e2e" stroke-width="2" fill="none"/>
<path d="M1465.5,949.8 h6.4" stroke="#2e2e2e" stroke-width="1.2" stroke-dasharray="1.5,1"/>
<path d="M1525,949.8 C1522,945.5 1517.5,945.5 1517.5,949.8 C1517.5,954.1 1522,954.1 1525,949.8 C1528,945.5 1532.5,945.5 1532.5,949.8 C1532.5,954.1 1528,954.1 1525,949.8 Z" stroke="#2e2e2e" stroke-width="2" fill="none"/>
<path d="M1575.5,948 A6,6 0 0 1 1586.5,947 M1586.8,951.6 A6,6 0 0 1 1575.8,952.6" stroke="#1a1a1a" stroke-width="2.2" fill="none"/>
<circle cx="1364.9" cy="988.6" r="12.3" fill="url(#gCirc2)"/>
<circle cx="1631.3" cy="989.2" r="12.3" fill="url(#gCirc2)"/>
<path d="M1365.5,983.5 L1360.5,988.6 L1365.5,993.7 M1370,983.5 L1365,988.6 L1370,993.7" stroke="#2e2e2e" stroke-width="1.8" fill="none"/>
<path d="M1626.5,984 L1631.5,989.1 L1626.5,994.2 M1631,984 L1636,989.1 L1631,994.2" stroke="#2e2e2e" stroke-width="1.8" fill="none"/>
<text x="1399.0" y="999.1" font-size="28.63" fill="#2e2e2e" font-weight="bold" textLength="62.0" lengthAdjust="spacingAndGlyphs">Back</text>
<text x="1532.0" y="999.1" font-size="28.63" fill="#2e2e2e" font-weight="bold" textLength="65.0" lengthAdjust="spacingAndGlyphs">Next</text>
<rect x="973.4" y="91.4" width="700" height="557.2" fill="#1b1b1b"/>
<rect x="980" y="97.9" width="681.2" height="544.4" fill="#333333"/>
<rect x="1017.8" y="121.8" width="639.2" height="491.4" fill="#242424"/>
<defs><clipPath id="cpPlot"><rect x="1018.5" y="122.5" width="638" height="490"/></clipPath></defs>
<defs><clipPath id="cpLoc"><polygon points="1291.1,599.6 1291.0,599.6 1291.0,599.6 1291.0,599.6 1290.9,599.6 1290.9,599.6 1290.9,599.6 1290.8,599.6 1290.8,599.7 1290.8,599.7 1290.7,599.8 1290.7,599.8 1290.6,599.9 1290.6,599.9 1290.5,599.9 1290.5,599.9 1290.4,599.9 1290.4,599.9 1290.3,599.9 1290.2,599.9 1290.2,600.0 1290.1,600.0 1290.0,600.1 1290.0,600.1 1289.9,600.1 1289.8,600.2 1289.7,600.2 1289.6,600.2 1289.5,600.2 1289.4,600.2 1289.3,600.2 1289.2,600.2 1289.1,600.2 1289.0,600.2 1288.9,600.2 1288.8,600.2 1288.6,600.2 1288.5,600.2 1288.4,600.2 1288.2,600.2 1288.1,600.2 1287.9,600.2 1287.7,600.2 1287.5,600.1 1287.3,600.0 1287.1,599.9 1286.8,599.7 1286.5,599.6 1286.2,599.4 1285.8,599.1 1285.4,598.9 1284.9,598.6 1284.4,598.3 1283.9,597.9 1283.4,597.5 1282.8,597.1 1282.3,596.7 1281.7,596.3 1281.1,595.8 1280.4,595.2 1279.7,594.7 1278.9,594.0 1278.0,593.4 1277.2,592.7 1276.2,591.9 1275.3,591.1 1274.3,590.3 1273.2,589.4 1272.2,588.5 1271.1,587.6 1269.9,586.6 1268.7,585.6 1267.5,584.5 1266.2,583.4 1264.8,582.3 1263.5,581.2 1262.0,580.0 1260.5,578.7 1258.9,577.4 1257.2,576.0 1255.4,574.6 1253.6,573.1 1251.6,571.5 1249.7,569.9 1247.6,568.2 1245.5,566.5 1243.4,564.7 1241.2,562.9 1238.9,561.0 1236.5,559.0 1234.1,556.9 1231.5,554.6 1228.9,552.3 1226.1,549.9 1223.3,547.4 1220.4,544.7 1217.4,541.9 1214.3,538.9 1211.2,535.9 1208.0,532.7 1204.7,529.4 1201.2,525.6 1197.4,521.5 1193.4,517.0 1189.2,512.2 1184.9,507.0 1180.3,501.5 1175.7,495.7 1170.9,489.5 1166.0,483.1 1160.9,476.2 1155.7,469.1 1150.4,461.6 1145.0,453.9 1139.6,445.8 1134.0,437.4 1128.4,428.6 1122.7,419.5 1116.9,410.3 1111.2,400.8 1105.6,391.4 1100.0,381.8 1094.3,372.0 1088.7,362.1 1083.2,352.1 1077.9,342.3 1072.9,332.5 1068.1,322.9 1063.5,313.2 1059.1,303.6 1055.0,294.1 1051.0,284.9 1047.3,276.0 1043.9,267.4 1040.6,259.0 1037.6,250.9 1034.8,243.0 1032.3,235.5 1030.0,228.4 1027.9,221.7 1026.1,215.3 1024.5,209.3 1023.2,203.5 1022.0,198.1 1021.0,193.0 1020.2,188.2 1019.6,183.7 1019.1,179.5 1018.9,175.6 1018.8,171.9 1018.8,168.4 1019.0,165.0 1019.4,161.9 1019.9,159.0 1020.6,156.3 1021.3,153.8 1022.2,151.4 1023.3,149.2 1024.5,147.2 1025.8,145.3 1027.3,143.6 1028.8,142.1 1030.4,140.7 1032.1,139.4 1033.9,138.3 1035.8,137.4 1037.8,136.6 1039.9,135.8 1041.9,135.2 1044.1,134.6 1046.3,134.2 1048.6,133.9 1050.9,133.6 1053.3,133.4 1055.7,133.1 1058.1,133.0 1060.6,132.8 1063.1,132.8 1065.6,132.7 1068.1,132.7 1070.7,132.6 1073.2,132.6 1075.7,132.6 1078.2,132.7 1080.8,132.7 1083.3,132.8 1085.9,132.8 1088.5,132.9 1091.1,133.0 1093.7,133.1 1096.3,133.3 1099.0,133.4 1101.8,133.6 1104.5,133.8 1107.3,133.9 1110.1,134.1 1113.0,134.4 1115.9,134.6 1118.9,134.8 1121.8,135.1 1124.9,135.3 1127.9,135.6 1131.1,135.9 1134.2,136.2 1137.4,136.5 1140.7,136.8 1144.0,137.1 1147.4,137.5 1150.8,137.8 1154.3,138.2 1157.9,138.5 1161.5,138.9 1165.2,139.3 1168.9,139.7 1172.7,140.1 1176.6,140.5 1180.5,141.0 1184.5,141.4 1188.6,141.9 1192.7,142.3 1196.9,142.8 1201.2,143.3 1205.5,143.8 1210.0,144.3 1214.5,144.8 1219.1,145.3 1223.7,145.8 1228.5,146.3 1233.3,146.9 1238.2,147.4 1243.1,148.0 1248.2,148.6 1253.3,149.2 1258.5,149.8 1263.7,150.4 1269.1,151.0 1274.5,151.6 1280.0,152.2 1285.6,152.9 1291.2,153.5 1297.0,154.2 1302.8,154.9 1308.6,155.5 1314.6,156.2 1320.6,156.9 1326.7,157.6 1332.8,158.3 1339.0,159.0 1345.2,159.7 1351.6,160.5 1357.9,161.2 1364.3,161.9 1370.7,162.7 1377.2,163.4 1383.7,164.1 1390.2,164.9 1396.7,165.7 1403.2,166.4 1409.7,167.2 1416.0,167.9 1422.4,168.6 1428.7,169.3 1434.9,170.1 1441.2,170.8 1447.4,171.5 1453.6,172.2 1459.9,172.9 1466.1,173.6 1472.2,174.3 1478.2,175.0 1484.1,175.7 1489.9,176.4 1495.6,177.0 1501.2,177.6 1506.8,178.3 1512.2,178.9 1517.4,179.5 1522.6,180.1 1527.7,180.7 1532.7,181.2 1537.5,181.8 1542.2,182.4 1546.9,182.9 1551.3,183.4 1555.7,183.9 1559.9,184.4 1564.0,184.9 1568.0,185.3 1571.9,185.8 1575.7,186.2 1579.3,186.6 1582.8,187.0 1586.3,187.4 1589.6,187.8 1592.9,188.2 1596.0,188.5 1599.1,188.9 1602.0,189.2 1604.9,189.5 1607.8,189.9 1610.5,190.2 1613.3,190.5 1615.9,190.8 1618.5,191.1 1621.0,191.4 1623.5,191.7 1625.9,192.0 1628.2,192.2 1630.4,192.5 1632.6,192.7 1634.8,193.0 1636.8,193.2 1638.8,193.5 1640.7,193.7 1642.6,193.9 1644.4,194.1 1646.1,194.3 1647.7,194.5 1649.3,194.6 1650.8,194.8 1652.1,195.0 1653.3,195.1 1654.6,195.2 1655.9,195.4 1657.4,195.6 1659.2,195.8 1661.1,196.0 1663.1,196.2 1665.1,196.5 1666.9,196.7 1668.5,196.8 1669.8,197.0 1670.8,197.1 1671.8,197.2 1672.6,197.3 1673.3,197.4 1674.1,197.5 1674.9,197.6 1675.6,197.7 1676.2,197.7 1676.9,197.8 1677.5,197.9 1678.1,198.0 1678.8,198.0 1679.5,198.1 1680.2,198.2 1680.9,198.3 1681.4,198.3 1681.8,198.4"/></clipPath><clipPath id="cpTri"><polygon points="1497.7,184.9 1150.5,152.5 1204.3,483.9"/></clipPath><linearGradient id="f0" gradientUnits="userSpaceOnUse" x1="1017.8" x2="1657.0" y1="0" y2="0"><stop offset="0" stop-color="#009900"/><stop offset="0.0769" stop-color="#009900"/><stop offset="0.154" stop-color="#009900"/><stop offset="0.231" stop-color="#199900"/><stop offset="0.308" stop-color="#6b9900"/><stop offset="0.385" stop-color="#996c00"/><stop offset="0.462" stop-color="#993f00"/><stop offset="0.538" stop-color="#992700"/><stop offset="0.615" stop-color="#991700"/><stop offset="0.692" stop-color="#990d00"/><stop offset="0.769" stop-color="#990500"/><stop offset="0.846" stop-color="#990000"/><stop offset="0.923" stop-color="#990000"/><stop offset="1" stop-color="#990000"/></linearGradient><linearGradient id="f1" gradientUnits="userSpaceOnUse" x1="1017.8" x2="1657.0" y1="0" y2="0"><stop offset="0" stop-color="#009900"/><stop offset="0.0769" stop-color="#009900"/><stop offset="0.154" stop-color="#009900"/><stop offset="0.231" stop-color="#189900"/><stop offset="0.308" stop-color="#6b9900"/><stop offset="0.385" stop-color="#996b00"/><stop offset="0.462" stop-color="#993e00"/><stop offset="0.538" stop-color="#992500"/><stop offset="0.615" stop-color="#991600"/><stop offset="0.692" stop-color="#990c00"/><stop offset="0.769" stop-color="#990400"/><stop offset="0.846" stop-color="#990000"/><stop offset="0.923" stop-color="#990000"/><stop offset="1" stop-color="#990000"/></linearGradient><linearGradient id="f2" gradientUnits="userSpaceOnUse" x1="1017.8" x2="1657.0" y1="0" y2="0"><stop offset="0" stop-color="#009906"/><stop offset="0.0769" stop-color="#009902"/><stop offset="0.154" stop-color="#009900"/><stop offset="0.231" stop-color="#179900"/><stop offset="0.308" stop-color="#6c9900"/><stop offset="0.385" stop-color="#996900"/><stop offset="0.462" stop-color="#993c00"/><stop offset="0.538" stop-color="#992400"/><stop offset="0.615" stop-color="#991500"/><stop offset="0.692" stop-color="#990b00"/><stop offset="0.769" stop-color="#990300"/><stop offset="0.846" stop-color="#990000"/><stop offset="0.923" stop-color="#990000"/><stop offset="1" stop-color="#990000"/></linearGradient><linearGradient id="f3" gradientUnits="userSpaceOnUse" x1="1017.8" x2="1150.7" y1="0" y2="0"><stop offset="0" stop-color="#00990d"/><stop offset="0.5" stop-color="#009908"/><stop offset="1" stop-color="#009901"/></linearGradient><linearGradient id="f4" gradientUnits="userSpaceOnUse" x1="1150.7" x2="1159.0" y1="0" y2="0"><stop offset="0" stop-color="#01ff02"/><stop offset="1" stop-color="#12ff00"/></linearGradient><linearGradient id="f5" gradientUnits="userSpaceOnUse" x1="1159.0" x2="1657.0" y1="0" y2="0"><stop offset="0" stop-color="#0d9900"/><stop offset="0.1" stop-color="#619900"/><stop offset="0.2" stop-color="#996e00"/><stop offset="0.3" stop-color="#993e00"/><stop offset="0.4" stop-color="#992400"/><stop offset="0.5" stop-color="#991500"/><stop offset="0.6" stop-color="#990a00"/><stop offset="0.7" stop-color="#990300"/><stop offset="0.8" stop-color="#990000"/><stop offset="0.9" stop-color="#990000"/><stop offset="1" stop-color="#990000"/></linearGradient><linearGradient id="f6" gradientUnits="userSpaceOnUse" x1="1017.8" x2="1151.8" y1="0" y2="0"><stop offset="0" stop-color="#009914"/><stop offset="0.5" stop-color="#009910"/><stop offset="1" stop-color="#00990a"/></linearGradient><linearGradient id="f7" gradientUnits="userSpaceOnUse" x1="1151.8" x2="1233.9" y1="0" y2="0"><stop offset="0" stop-color="#01ff11"/><stop offset="1" stop-color="#faff00"/></linearGradient><linearGradient id="f8" gradientUnits="userSpaceOnUse" x1="1233.9" x2="1657.0" y1="0" y2="0"><stop offset="0" stop-color="#999900"/><stop offset="0.125" stop-color="#994d00"/><stop offset="0.25" stop-color="#992b00"/><stop offset="0.375" stop-color="#991800"/><stop offset="0.5" stop-color="#990c00"/><stop offset="0.625" stop-color="#990300"/><stop offset="0.75" stop-color="#990000"/><stop offset="0.875" stop-color="#990000"/><stop offset="1" stop-color="#990000"/></linearGradient><linearGradient id="f9" gradientUnits="userSpaceOnUse" x1="1017.8" x2="1152.9" y1="0" y2="0"><stop offset="0" stop-color="#00991b"/><stop offset="0.5" stop-color="#009918"/><stop offset="1" stop-color="#009914"/></linearGradient><linearGradient id="f10" gradientUnits="userSpaceOnUse" x1="1152.9" x2="1308.9" y1="0" y2="0"><stop offset="0" stop-color="#01ff21"/><stop offset="0.333" stop-color="#95ff1a"/><stop offset="0.667" stop-color="#ffb70b"/><stop offset="1" stop-color="#ff6200"/></linearGradient><linearGradient id="f11" gradientUnits="userSpaceOnUse" x1="1308.9" x2="1657.0" y1="0" y2="0"><stop offset="0" stop-color="#993a00"/><stop offset="0.143" stop-color="#992100"/><stop offset="0.286" stop-color="#991200"/><stop offset="0.429" stop-color="#990800"/><stop offset="0.571" stop-color="#990100"/><stop offset="0.714" stop-color="#990000"/><stop offset="0.857" stop-color="#990000"/><stop offset="1" stop-color="#990000"/></linearGradient><linearGradient id="f12" gradientUnits="userSpaceOnUse" x1="1017.8" x2="1154.1" y1="0" y2="0"><stop offset="0" stop-color="#009922"/><stop offset="0.5" stop-color="#009921"/><stop offset="1" stop-color="#00991e"/></linearGradient><linearGradient id="f13" gradientUnits="userSpaceOnUse" x1="1154.1" x2="1383.8" y1="0" y2="0"><stop offset="0" stop-color="#01ff32"/><stop offset="0.25" stop-color="#acff2d"/><stop offset="0.5" stop-color="#ff9916"/><stop offset="0.75" stop-color="#ff4e07"/><stop offset="1" stop-color="#ff2800"/></linearGradient><linearGradient id="f14" gradientUnits="userSpaceOnUse" x1="1383.8" x2="1657.0" y1="0" y2="0"><stop offset="0" stop-color="#991800"/><stop offset="0.2" stop-color="#990b00"/><stop offset="0.4" stop-color="#990200"/><stop offset="0.6" stop-color="#990000"/><stop offset="0.8" stop-color="#990000"/><stop offset="1" stop-color="#990000"/></linearGradient><linearGradient id="f15" gradientUnits="userSpaceOnUse" x1="1017.8" x2="1155.2" y1="0" y2="0"><stop offset="0" stop-color="#00992a"/><stop offset="0.5" stop-color="#009929"/><stop offset="1" stop-color="#009928"/></linearGradient><linearGradient id="f16" gradientUnits="userSpaceOnUse" x1="1155.2" x2="1458.7" y1="0" y2="0"><stop offset="0" stop-color="#02ff43"/><stop offset="0.167" stop-color="#99ff42"/><stop offset="0.333" stop-color="#ffb22c"/><stop offset="0.5" stop-color="#ff5e16"/><stop offset="0.667" stop-color="#ff340b"/><stop offset="0.833" stop-color="#ff1b04"/><stop offset="1" stop-color="#ff0b00"/></linearGradient><linearGradient id="f17" gradientUnits="userSpaceOnUse" x1="1458.7" x2="1657.0" y1="0" y2="0"><stop offset="0" stop-color="#990600"/><stop offset="0.25" stop-color="#990000"/><stop offset="0.5" stop-color="#990000"/><stop offset="0.75" stop-color="#990000"/><stop offset="1" stop-color="#990000"/></linearGradient><linearGradient id="f18" gradientUnits="userSpaceOnUse" x1="1017.8" x2="1156.4" y1="0" y2="0"><stop offset="0" stop-color="#009932"/><stop offset="0.5" stop-color="#009933"/><stop offset="1" stop-color="#009934"/></linearGradient><linearGradient id="f19" gradientUnits="userSpaceOnUse" x1="1156.4" x2="1494.5" y1="0" y2="0"><stop offset="0" stop-color="#02ff56"/><stop offset="0.143" stop-color="#95ff57"/><stop offset="0.286" stop-color="#ffb740"/><stop offset="0.429" stop-color="#ff6224"/><stop offset="0.571" stop-color="#ff3715"/><stop offset="0.714" stop-color="#ff1e0d"/><stop offset="0.857" stop-color="#ff0c07"/><stop offset="1" stop-color="#ff0003"/></linearGradient><linearGradient id="f20" gradientUnits="userSpaceOnUse" x1="1494.5" x2="1657.0" y1="0" y2="0"><stop offset="0" stop-color="#990002"/><stop offset="0.333" stop-color="#990000"/><stop offset="0.667" stop-color="#990000"/><stop offset="1" stop-color="#990000"/></linearGradient><linearGradient id="f21" gradientUnits="userSpaceOnUse" x1="1017.8" x2="1157.5" y1="0" y2="0"><stop offset="0" stop-color="#00993a"/><stop offset="0.5" stop-color="#00993c"/><stop offset="1" stop-color="#00993f"/></linearGradient><linearGradient id="f22" gradientUnits="userSpaceOnUse" x1="1157.5" x2="1487.6" y1="0" y2="0"><stop offset="0" stop-color="#02ff69"/><stop offset="0.167" stop-color="#b2ff6f"/><stop offset="0.333" stop-color="#ff9345"/><stop offset="0.5" stop-color="#ff4a26"/><stop offset="0.667" stop-color="#ff2517"/><stop offset="0.833" stop-color="#ff0f0e"/><stop offset="1" stop-color="#ff0008"/></linearGradient><linearGradient id="f23" gradientUnits="userSpaceOnUse" x1="1487.6" x2="1657.0" y1="0" y2="0"><stop offset="0" stop-color="#990005"/><stop offset="0.333" stop-color="#990002"/><stop offset="0.667" stop-color="#990000"/><stop offset="1" stop-color="#990000"/></linearGradient><linearGradient id="f24" gradientUnits="userSpaceOnUse" x1="1017.8" x2="1158.6" y1="0" y2="0"><stop offset="0" stop-color="#009942"/><stop offset="0.5" stop-color="#009946"/><stop offset="1" stop-color="#00994b"/></linearGradient><linearGradient id="f25" gradientUnits="userSpaceOnUse" x1="1158.6" x2="1480.7" y1="0" y2="0"><stop offset="0" stop-color="#02ff7d"/><stop offset="0.167" stop-color="#b2ff87"/><stop offset="0.333" stop-color="#ff9356"/><stop offset="0.5" stop-color="#ff4a32"/><stop offset="0.667" stop-color="#ff2520"/><stop offset="0.833" stop-color="#ff0f15"/><stop offset="1" stop-color="#ff000e"/></linearGradient><linearGradient id="f26" gradientUnits="userSpaceOnUse" x1="1480.7" x2="1657.0" y1="0" y2="0"><stop offset="0" stop-color="#990008"/><stop offset="0.333" stop-color="#990005"/><stop offset="0.667" stop-color="#990003"/><stop offset="1" stop-color="#990001"/></linearGradient><linearGradient id="f27" gradientUnits="userSpaceOnUse" x1="1017.8" x2="1159.8" y1="0" y2="0"><stop offset="0" stop-color="#00994b"/><stop offset="0.5" stop-color="#009950"/><stop offset="1" stop-color="#009958"/></linearGradient><linearGradient id="f28" gradientUnits="userSpaceOnUse" x1="1159.8" x2="1473.8" y1="0" y2="0"><stop offset="0" stop-color="#02ff93"/><stop offset="0.167" stop-color="#b2ffa1"/><stop offset="0.333" stop-color="#ff9369"/><stop offset="0.5" stop-color="#ff4a3e"/><stop offset="0.667" stop-color="#ff2529"/><stop offset="0.833" stop-color="#ff0f1d"/><stop offset="1" stop-color="#ff0014"/></linearGradient><linearGradient id="f29" gradientUnits="userSpaceOnUse" x1="1473.8" x2="1657.0" y1="0" y2="0"><stop offset="0" stop-color="#99000c"/><stop offset="0.333" stop-color="#990008"/><stop offset="0.667" stop-color="#990005"/><stop offset="1" stop-color="#990003"/></linearGradient><linearGradient id="f30" gradientUnits="userSpaceOnUse" x1="1017.8" x2="1160.9" y1="0" y2="0"><stop offset="0" stop-color="#009954"/><stop offset="0.5" stop-color="#00995b"/><stop offset="1" stop-color="#009965"/></linearGradient><linearGradient id="f31" gradientUnits="userSpaceOnUse" x1="1160.9" x2="1467.0" y1="0" y2="0"><stop offset="0" stop-color="#02ffa9"/><stop offset="0.167" stop-color="#b2ffbc"/><stop offset="0.333" stop-color="#ff937c"/><stop offset="0.5" stop-color="#ff4a4b"/><stop offset="0.667" stop-color="#ff2533"/><stop offset="0.833" stop-color="#ff0f24"/><stop offset="1" stop-color="#ff001b"/></linearGradient><linearGradient id="f32" gradientUnits="userSpaceOnUse" x1="1467.0" x2="1657.0" y1="0" y2="0"><stop offset="0" stop-color="#990010"/><stop offset="0.333" stop-color="#99000b"/><stop offset="0.667" stop-color="#990007"/><stop offset="1" stop-color="#990005"/></linearGradient><linearGradient id="f33" gradientUnits="userSpaceOnUse" x1="1017.8" x2="1162.0" y1="0" y2="0"><stop offset="0" stop-color="#00995d"/><stop offset="0.333" stop-color="#009963"/><stop offset="0.667" stop-color="#00996a"/><stop offset="1" stop-color="#009973"/></linearGradient><linearGradient id="f34" gradientUnits="userSpaceOnUse" x1="1162.0" x2="1460.1" y1="0" y2="0"><stop offset="0" stop-color="#02ffc1"/><stop offset="0.167" stop-color="#b2ffd8"/><stop offset="0.333" stop-color="#ff9390"/><stop offset="0.5" stop-color="#ff4a59"/><stop offset="0.667" stop-color="#ff253d"/><stop offset="0.833" stop-color="#ff0f2d"/><stop offset="1" stop-color="#ff0022"/></linearGradient><linearGradient id="f35" gradientUnits="userSpaceOnUse" x1="1460.1" x2="1657.0" y1="0" y2="0"><stop offset="0" stop-color="#990014"/><stop offset="0.25" stop-color="#99000f"/><stop offset="0.5" stop-color="#99000c"/><stop offset="0.75" stop-color="#990009"/><stop offset="1" stop-color="#990007"/></linearGradient><linearGradient id="f36" gradientUnits="userSpaceOnUse" x1="1017.8" x2="1163.2" y1="0" y2="0"><stop offset="0" stop-color="#009966"/><stop offset="0.333" stop-color="#00996d"/><stop offset="0.667" stop-color="#009976"/><stop offset="1" stop-color="#009982"/></linearGradient><linearGradient id="f37" gradientUnits="userSpaceOnUse" x1="1163.2" x2="1453.2" y1="0" y2="0"><stop offset="0" stop-color="#02ffda"/><stop offset="0.167" stop-color="#b2fff6"/><stop offset="0.333" stop-color="#ff93a6"/><stop offset="0.5" stop-color="#ff4a67"/><stop offset="0.667" stop-color="#ff2548"/><stop offset="0.833" stop-color="#ff0f35"/><stop offset="1" stop-color="#ff0029"/></linearGradient><linearGradient id="f38" gradientUnits="userSpaceOnUse" x1="1453.2" x2="1657.0" y1="0" y2="0"><stop offset="0" stop-color="#990018"/><stop offset="0.25" stop-color="#990013"/><stop offset="0.5" stop-color="#99000f"/><stop offset="0.75" stop-color="#99000b"/><stop offset="1" stop-color="#990009"/></linearGradient><linearGradient id="f39" gradientUnits="userSpaceOnUse" x1="1017.8" x2="1164.3" y1="0" y2="0"><stop offset="0" stop-color="#009970"/><stop offset="0.333" stop-color="#009979"/><stop offset="0.667" stop-color="#009983"/><stop offset="1" stop-color="#009992"/></linearGradient><linearGradient id="f40" gradientUnits="userSpaceOnUse" x1="1164.3" x2="1446.3" y1="0" y2="0"><stop offset="0" stop-color="#02fff4"/><stop offset="0.2" stop-color="#c7e3ff"/><stop offset="0.4" stop-color="#ff6e9a"/><stop offset="0.6" stop-color="#ff315f"/><stop offset="0.8" stop-color="#ff1342"/><stop offset="1" stop-color="#ff0030"/></linearGradient><linearGradient id="f41" gradientUnits="userSpaceOnUse" x1="1446.3" x2="1657.0" y1="0" y2="0"><stop offset="0" stop-color="#99001d"/><stop offset="0.25" stop-color="#990016"/><stop offset="0.5" stop-color="#990011"/><stop offset="0.75" stop-color="#99000e"/><stop offset="1" stop-color="#99000b"/></linearGradient><linearGradient id="f42" gradientUnits="userSpaceOnUse" x1="1017.8" x2="1165.4" y1="0" y2="0"><stop offset="0" stop-color="#00997a"/><stop offset="0.333" stop-color="#009984"/><stop offset="0.667" stop-color="#009991"/><stop offset="1" stop-color="#009099"/></linearGradient><linearGradient id="f43" gradientUnits="userSpaceOnUse" x1="1165.4" x2="1439.5" y1="0" y2="0"><stop offset="0" stop-color="#02efff"/><stop offset="0.2" stop-color="#b1cbff"/><stop offset="0.4" stop-color="#ff6eae"/><stop offset="0.6" stop-color="#ff316d"/><stop offset="0.8" stop-color="#ff134c"/><stop offset="1" stop-color="#ff0038"/></linearGradient><linearGradient id="f44" gradientUnits="userSpaceOnUse" x1="1439.5" x2="1657.0" y1="0" y2="0"><stop offset="0" stop-color="#990022"/><stop offset="0.25" stop-color="#99001a"/><stop offset="0.5" stop-color="#990014"/><stop offset="0.75" stop-color="#990010"/><stop offset="1" stop-color="#99000d"/></linearGradient><linearGradient id="f45" gradientUnits="userSpaceOnUse" x1="1017.8" x2="1166.6" y1="0" y2="0"><stop offset="0" stop-color="#009985"/><stop offset="0.333" stop-color="#009990"/><stop offset="0.667" stop-color="#009399"/><stop offset="1" stop-color="#008299"/></linearGradient><linearGradient id="f46" gradientUnits="userSpaceOnUse" x1="1166.6" x2="1432.6" y1="0" y2="0"><stop offset="0" stop-color="#02d8ff"/><stop offset="0.2" stop-color="#9fb6ff"/><stop offset="0.4" stop-color="#ff6ec3"/><stop offset="0.6" stop-color="#ff317b"/><stop offset="0.8" stop-color="#ff1357"/><stop offset="1" stop-color="#ff0041"/></linearGradient><linearGradient id="f47" gradientUnits="userSpaceOnUse" x1="1432.6" x2="1657.0" y1="0" y2="0"><stop offset="0" stop-color="#990027"/><stop offset="0.25" stop-color="#99001e"/><stop offset="0.5" stop-color="#990017"/><stop offset="0.75" stop-color="#990013"/><stop offset="1" stop-color="#99000f"/></linearGradient><linearGradient id="f48" gradientUnits="userSpaceOnUse" x1="1017.8" x2="1167.7" y1="0" y2="0"><stop offset="0" stop-color="#00998f"/><stop offset="0.333" stop-color="#009599"/><stop offset="0.667" stop-color="#008699"/><stop offset="1" stop-color="#007699"/></linearGradient><linearGradient id="f49" gradientUnits="userSpaceOnUse" x1="1167.7" x2="1425.7" y1="0" y2="0"><stop offset="0" stop-color="#02c3ff"/><stop offset="0.2" stop-color="#8fa4ff"/><stop offset="0.4" stop-color="#ff6ed9"/><stop offset="0.6" stop-color="#ff318a"/><stop offset="0.8" stop-color="#ff1362"/><stop offset="1" stop-color="#ff004a"/></linearGradient><linearGradient id="f50" gradientUnits="userSpaceOnUse" x1="1425.7" x2="1657.0" y1="0" y2="0"><stop offset="0" stop-color="#99002c"/><stop offset="0.25" stop-color="#990022"/><stop offset="0.5" stop-color="#99001a"/><stop offset="0.75" stop-color="#990015"/><stop offset="1" stop-color="#990011"/></linearGradient><linearGradient id="f51" gradientUnits="userSpaceOnUse" x1="1017.8" x2="1168.8" y1="0" y2="0"><stop offset="0" stop-color="#009899"/><stop offset="0.333" stop-color="#008a99"/><stop offset="0.667" stop-color="#007b99"/><stop offset="1" stop-color="#006b99"/></linearGradient><linearGradient id="f52" gradientUnits="userSpaceOnUse" x1="1168.8" x2="1418.9" y1="0" y2="0"><stop offset="0" stop-color="#01b1ff"/><stop offset="0.2" stop-color="#8194ff"/><stop offset="0.4" stop-color="#ff6ef2"/><stop offset="0.6" stop-color="#ff319a"/><stop offset="0.8" stop-color="#ff136e"/><stop offset="1" stop-color="#ff0054"/></linearGradient><linearGradient id="f53" gradientUnits="userSpaceOnUse" x1="1418.9" x2="1657.0" y1="0" y2="0"><stop offset="0" stop-color="#990032"/><stop offset="0.25" stop-color="#990026"/><stop offset="0.5" stop-color="#99001e"/><stop offset="0.75" stop-color="#990018"/><stop offset="1" stop-color="#990013"/></linearGradient><linearGradient id="f54" gradientUnits="userSpaceOnUse" x1="1017.8" x2="1170.0" y1="0" y2="0"><stop offset="0" stop-color="#008d99"/><stop offset="0.333" stop-color="#008099"/><stop offset="0.667" stop-color="#007199"/><stop offset="1" stop-color="#006199"/></linearGradient><linearGradient id="f55" gradientUnits="userSpaceOnUse" x1="1170.0" x2="1412.0" y1="0" y2="0"><stop offset="0" stop-color="#01a2ff"/><stop offset="0.2" stop-color="#7687ff"/><stop offset="0.4" stop-color="#f369ff"/><stop offset="0.6" stop-color="#ff31ab"/><stop offset="0.8" stop-color="#ff137b"/><stop offset="1" stop-color="#ff005e"/></linearGradient><linearGradient id="f56" gradientUnits="userSpaceOnUse" x1="1412.0" x2="1657.0" y1="0" y2="0"><stop offset="0" stop-color="#990038"/><stop offset="0.2" stop-color="#99002c"/><stop offset="0.4" stop-color="#990024"/><stop offset="0.6" stop-color="#99001e"/><stop offset="0.8" stop-color="#990019"/><stop offset="1" stop-color="#990015"/></linearGradient><linearGradient id="f57" gradientUnits="userSpaceOnUse" x1="1017.8" x2="1171.1" y1="0" y2="0"><stop offset="0" stop-color="#008499"/><stop offset="0.333" stop-color="#007699"/><stop offset="0.667" stop-color="#006899"/><stop offset="1" stop-color="#005999"/></linearGradient><linearGradient id="f58" gradientUnits="userSpaceOnUse" x1="1171.1" x2="1405.1" y1="0" y2="0"><stop offset="0" stop-color="#0194ff"/><stop offset="0.25" stop-color="#8774ff"/><stop offset="0.5" stop-color="#ff4ae7"/><stop offset="0.75" stop-color="#ff1993"/><stop offset="1" stop-color="#ff0069"/></linearGradient><linearGradient id="f59" gradientUnits="userSpaceOnUse" x1="1405.1" x2="1657.0" y1="0" y2="0"><stop offset="0" stop-color="#99003f"/><stop offset="0.2" stop-color="#990031"/><stop offset="0.4" stop-color="#990028"/><stop offset="0.6" stop-color="#990021"/><stop offset="0.8" stop-color="#99001c"/><stop offset="1" stop-color="#990017"/></linearGradient><linearGradient id="f60" gradientUnits="userSpaceOnUse" x1="1017.8" x2="1172.2" y1="0" y2="0"><stop offset="0" stop-color="#007b99"/><stop offset="0.333" stop-color="#006e99"/><stop offset="0.667" stop-color="#006099"/><stop offset="1" stop-color="#005199"/></linearGradient><linearGradient id="f61" gradientUnits="userSpaceOnUse" x1="1172.2" x2="1398.2" y1="0" y2="0"><stop offset="0" stop-color="#0187ff"/><stop offset="0.25" stop-color="#7b6aff"/><stop offset="0.5" stop-color="#ff4aff"/><stop offset="0.75" stop-color="#ff19a3"/><stop offset="1" stop-color="#ff0075"/></linearGradient><linearGradient id="f62" gradientUnits="userSpaceOnUse" x1="1398.2" x2="1657.0" y1="0" y2="0"><stop offset="0" stop-color="#990046"/><stop offset="0.2" stop-color="#990036"/><stop offset="0.4" stop-color="#99002c"/><stop offset="0.6" stop-color="#990024"/><stop offset="0.8" stop-color="#99001e"/><stop offset="1" stop-color="#990019"/></linearGradient><linearGradient id="f63" gradientUnits="userSpaceOnUse" x1="1017.8" x2="1173.4" y1="0" y2="0"><stop offset="0" stop-color="#007399"/><stop offset="0.333" stop-color="#006799"/><stop offset="0.667" stop-color="#005999"/><stop offset="1" stop-color="#004b99"/></linearGradient><linearGradient id="f64" gradientUnits="userSpaceOnUse" x1="1173.4" x2="1391.4" y1="0" y2="0"><stop offset="0" stop-color="#017cff"/><stop offset="0.25" stop-color="#7061ff"/><stop offset="0.5" stop-color="#e843ff"/><stop offset="0.75" stop-color="#ff19b4"/><stop offset="1" stop-color="#ff0081"/></linearGradient><linearGradient id="f65" gradientUnits="userSpaceOnUse" x1="1391.4" x2="1657.0" y1="0" y2="0"><stop offset="0" stop-color="#99004d"/><stop offset="0.2" stop-color="#99003c"/><stop offset="0.4" stop-color="#990030"/><stop offset="0.6" stop-color="#990027"/><stop offset="0.8" stop-color="#990021"/><stop offset="1" stop-color="#99001c"/></linearGradient><linearGradient id="f66" gradientUnits="userSpaceOnUse" x1="1017.8" x2="1174.5" y1="0" y2="0"><stop offset="0" stop-color="#006c99"/><stop offset="0.333" stop-color="#006099"/><stop offset="0.667" stop-color="#005399"/><stop offset="1" stop-color="#004599"/></linearGradient><linearGradient id="f67" gradientUnits="userSpaceOnUse" x1="1174.5" x2="1384.5" y1="0" y2="0"><stop offset="0" stop-color="#0172ff"/><stop offset="0.25" stop-color="#6758ff"/><stop offset="0.5" stop-color="#d43dff"/><stop offset="0.75" stop-color="#ff19c6"/><stop offset="1" stop-color="#ff008f"/></linearGradient><linearGradient id="f68" gradientUnits="userSpaceOnUse" x1="1384.5" x2="1657.0" y1="0" y2="0"><stop offset="0" stop-color="#990055"/><stop offset="0.2" stop-color="#990041"/><stop offset="0.4" stop-color="#990034"/><stop offset="0.6" stop-color="#99002a"/><stop offset="0.8" stop-color="#990023"/><stop offset="1" stop-color="#99001e"/></linearGradient><linearGradient id="f69" gradientUnits="userSpaceOnUse" x1="1017.8" x2="1175.6" y1="0" y2="0"><stop offset="0" stop-color="#006699"/><stop offset="0.333" stop-color="#005a99"/><stop offset="0.667" stop-color="#004d99"/><stop offset="1" stop-color="#003f99"/></linearGradient><linearGradient id="f70" gradientUnits="userSpaceOnUse" x1="1175.6" x2="1377.6" y1="0" y2="0"><stop offset="0" stop-color="#0168ff"/><stop offset="0.25" stop-color="#5e51ff"/><stop offset="0.5" stop-color="#c138ff"/><stop offset="0.75" stop-color="#ff19d9"/><stop offset="1" stop-color="#ff009e"/></linearGradient><linearGradient id="f71" gradientUnits="userSpaceOnUse" x1="1377.6" x2="1657.0" y1="0" y2="0"><stop offset="0" stop-color="#99005e"/><stop offset="0.2" stop-color="#990047"/><stop offset="0.4" stop-color="#990038"/><stop offset="0.6" stop-color="#99002e"/><stop offset="0.8" stop-color="#990026"/><stop offset="1" stop-color="#990020"/></linearGradient><linearGradient id="f72" gradientUnits="userSpaceOnUse" x1="1017.8" x2="1176.8" y1="0" y2="0"><stop offset="0" stop-color="#006099"/><stop offset="0.333" stop-color="#005499"/><stop offset="0.667" stop-color="#004799"/><stop offset="1" stop-color="#003a99"/></linearGradient><linearGradient id="f73" gradientUnits="userSpaceOnUse" x1="1176.8" x2="1370.8" y1="0" y2="0"><stop offset="0" stop-color="#0160ff"/><stop offset="0.25" stop-color="#564aff"/><stop offset="0.5" stop-color="#b133ff"/><stop offset="0.75" stop-color="#ff19ef"/><stop offset="1" stop-color="#ff00ae"/></linearGradient><linearGradient id="f74" gradientUnits="userSpaceOnUse" x1="1370.8" x2="1657.0" y1="0" y2="0"><stop offset="0" stop-color="#990067"/><stop offset="0.2" stop-color="#99004d"/><stop offset="0.4" stop-color="#99003c"/><stop offset="0.6" stop-color="#990031"/><stop offset="0.8" stop-color="#990028"/><stop offset="1" stop-color="#990022"/></linearGradient><linearGradient id="f75" gradientUnits="userSpaceOnUse" x1="1017.8" x2="1177.9" y1="0" y2="0"><stop offset="0" stop-color="#005a99"/><stop offset="0.333" stop-color="#004f99"/><stop offset="0.667" stop-color="#004299"/><stop offset="1" stop-color="#003599"/></linearGradient><linearGradient id="f76" gradientUnits="userSpaceOnUse" x1="1177.9" x2="1363.9" y1="0" y2="0"><stop offset="0" stop-color="#0158ff"/><stop offset="0.333" stop-color="#6a3dff"/><stop offset="0.667" stop-color="#db20ff"/><stop offset="1" stop-color="#ff00bf"/></linearGradient><linearGradient id="f77" gradientUnits="userSpaceOnUse" x1="1363.9" x2="1657.0" y1="0" y2="0"><stop offset="0" stop-color="#990072"/><stop offset="0.167" stop-color="#990057"/><stop offset="0.333" stop-color="#990046"/><stop offset="0.5" stop-color="#99003a"/><stop offset="0.667" stop-color="#990031"/><stop offset="0.833" stop-color="#99002a"/><stop offset="1" stop-color="#990024"/></linearGradient><linearGradient id="f78" gradientUnits="userSpaceOnUse" x1="1017.8" x2="1179.1" y1="0" y2="0"><stop offset="0" stop-color="#005599"/><stop offset="0.333" stop-color="#004a99"/><stop offset="0.667" stop-color="#003e99"/><stop offset="1" stop-color="#003199"/></linearGradient><linearGradient id="f79" gradientUnits="userSpaceOnUse" x1="1179.1" x2="1357.0" y1="0" y2="0"><stop offset="0" stop-color="#0151ff"/><stop offset="0.333" stop-color="#6138ff"/><stop offset="0.667" stop-color="#c81dff"/><stop offset="1" stop-color="#ff00d2"/></linearGradient><linearGradient id="f80" gradientUnits="userSpaceOnUse" x1="1357.0" x2="1657.0" y1="0" y2="0"><stop offset="0" stop-color="#99007d"/><stop offset="0.167" stop-color="#99005f"/><stop offset="0.333" stop-color="#99004b"/><stop offset="0.5" stop-color="#99003e"/><stop offset="0.667" stop-color="#990034"/><stop offset="0.833" stop-color="#99002c"/><stop offset="1" stop-color="#990026"/></linearGradient><linearGradient id="f81" gradientUnits="userSpaceOnUse" x1="1017.8" x2="1180.2" y1="0" y2="0"><stop offset="0" stop-color="#005199"/><stop offset="0.333" stop-color="#004599"/><stop offset="0.667" stop-color="#003999"/><stop offset="1" stop-color="#002d99"/></linearGradient><linearGradient id="f82" gradientUnits="userSpaceOnUse" x1="1180.2" x2="1350.1" y1="0" y2="0"><stop offset="0" stop-color="#014aff"/><stop offset="0.333" stop-color="#5933ff"/><stop offset="0.667" stop-color="#b71bff"/><stop offset="1" stop-color="#ff00e6"/></linearGradient><linearGradient id="f83" gradientUnits="userSpaceOnUse" x1="1350.1" x2="1657.0" y1="0" y2="0"><stop offset="0" stop-color="#990089"/><stop offset="0.167" stop-color="#990067"/><stop offset="0.333" stop-color="#990051"/><stop offset="0.5" stop-color="#990042"/><stop offset="0.667" stop-color="#990037"/><stop offset="0.833" stop-color="#99002f"/><stop offset="1" stop-color="#990029"/></linearGradient><linearGradient id="f84" gradientUnits="userSpaceOnUse" x1="1017.8" x2="1181.3" y1="0" y2="0"><stop offset="0" stop-color="#004c99"/><stop offset="0.333" stop-color="#004199"/><stop offset="0.667" stop-color="#003599"/><stop offset="1" stop-color="#002999"/></linearGradient><linearGradient id="f85" gradientUnits="userSpaceOnUse" x1="1181.3" x2="1343.3" y1="0" y2="0"><stop offset="0" stop-color="#0144ff"/><stop offset="0.333" stop-color="#512fff"/><stop offset="0.667" stop-color="#a718ff"/><stop offset="1" stop-color="#ff00fd"/></linearGradient><linearGradient id="f86" gradientUnits="userSpaceOnUse" x1="1343.3" x2="1657.0" y1="0" y2="0"><stop offset="0" stop-color="#990097"/><stop offset="0.167" stop-color="#99006f"/><stop offset="0.333" stop-color="#990057"/><stop offset="0.5" stop-color="#990046"/><stop offset="0.667" stop-color="#99003b"/><stop offset="0.833" stop-color="#990032"/><stop offset="1" stop-color="#99002b"/></linearGradient><linearGradient id="f87" gradientUnits="userSpaceOnUse" x1="1017.8" x2="1182.5" y1="0" y2="0"><stop offset="0" stop-color="#004899"/><stop offset="0.333" stop-color="#003d99"/><stop offset="0.667" stop-color="#003299"/><stop offset="1" stop-color="#002699"/></linearGradient><linearGradient id="f88" gradientUnits="userSpaceOnUse" x1="1182.5" x2="1336.4" y1="0" y2="0"><stop offset="0" stop-color="#013eff"/><stop offset="0.333" stop-color="#4b2bff"/><stop offset="0.667" stop-color="#9816ff"/><stop offset="1" stop-color="#ea00ff"/></linearGradient><linearGradient id="f89" gradientUnits="userSpaceOnUse" x1="1336.4" x2="1657.0" y1="0" y2="0"><stop offset="0" stop-color="#8d0099"/><stop offset="0.167" stop-color="#990078"/><stop offset="0.333" stop-color="#99005d"/><stop offset="0.5" stop-color="#99004b"/><stop offset="0.667" stop-color="#99003e"/><stop offset="0.833" stop-color="#990034"/><stop offset="1" stop-color="#99002d"/></linearGradient><linearGradient id="f90" gradientUnits="userSpaceOnUse" x1="1017.8" x2="1183.6" y1="0" y2="0"><stop offset="0" stop-color="#004499"/><stop offset="0.333" stop-color="#003a99"/><stop offset="0.667" stop-color="#002e99"/><stop offset="1" stop-color="#002399"/></linearGradient><linearGradient id="f91" gradientUnits="userSpaceOnUse" x1="1183.6" x2="1329.5" y1="0" y2="0"><stop offset="0" stop-color="#0139ff"/><stop offset="0.333" stop-color="#4427ff"/><stop offset="0.667" stop-color="#8b14ff"/><stop offset="1" stop-color="#d400ff"/></linearGradient><linearGradient id="f92" gradientUnits="userSpaceOnUse" x1="1329.5" x2="1657.0" y1="0" y2="0"><stop offset="0" stop-color="#810099"/><stop offset="0.167" stop-color="#990081"/><stop offset="0.333" stop-color="#990063"/><stop offset="0.5" stop-color="#99004f"/><stop offset="0.667" stop-color="#990041"/><stop offset="0.833" stop-color="#990037"/><stop offset="1" stop-color="#99002f"/></linearGradient><linearGradient id="f93" gradientUnits="userSpaceOnUse" x1="1017.8" x2="1184.7" y1="0" y2="0"><stop offset="0" stop-color="#004199"/><stop offset="0.333" stop-color="#003699"/><stop offset="0.667" stop-color="#002b99"/><stop offset="1" stop-color="#002099"/></linearGradient><linearGradient id="f94" gradientUnits="userSpaceOnUse" x1="1184.7" x2="1322.7" y1="0" y2="0"><stop offset="0" stop-color="#0134ff"/><stop offset="0.5" stop-color="#5e1bff"/><stop offset="1" stop-color="#c100ff"/></linearGradient><linearGradient id="f95" gradientUnits="userSpaceOnUse" x1="1322.7" x2="1657.0" y1="0" y2="0"><stop offset="0" stop-color="#750099"/><stop offset="0.167" stop-color="#99008b"/><stop offset="0.333" stop-color="#990069"/><stop offset="0.5" stop-color="#990054"/><stop offset="0.667" stop-color="#990045"/><stop offset="0.833" stop-color="#99003a"/><stop offset="1" stop-color="#990031"/></linearGradient><linearGradient id="f96" gradientUnits="userSpaceOnUse" x1="1017.8" x2="1185.9" y1="0" y2="0"><stop offset="0" stop-color="#003d99"/><stop offset="0.333" stop-color="#003399"/><stop offset="0.667" stop-color="#002899"/><stop offset="1" stop-color="#001d99"/></linearGradient><linearGradient id="f97" gradientUnits="userSpaceOnUse" x1="1185.9" x2="1315.8" y1="0" y2="0"><stop offset="0" stop-color="#0130ff"/><stop offset="0.5" stop-color="#5519ff"/><stop offset="1" stop-color="#af00ff"/></linearGradient><linearGradient id="f98" gradientUnits="userSpaceOnUse" x1="1315.8" x2="1657.0" y1="0" y2="0"><stop offset="0" stop-color="#6a0099"/><stop offset="0.143" stop-color="#950099"/><stop offset="0.286" stop-color="#990079"/><stop offset="0.429" stop-color="#990061"/><stop offset="0.571" stop-color="#990051"/><stop offset="0.714" stop-color="#990045"/><stop offset="0.857" stop-color="#99003b"/><stop offset="1" stop-color="#990034"/></linearGradient><linearGradient id="f99" gradientUnits="userSpaceOnUse" x1="1017.8" x2="1187.0" y1="0" y2="0"><stop offset="0" stop-color="#003a99"/><stop offset="0.333" stop-color="#003099"/><stop offset="0.667" stop-color="#002599"/><stop offset="1" stop-color="#001a99"/></linearGradient><linearGradient id="f100" gradientUnits="userSpaceOnUse" x1="1187.0" x2="1308.9" y1="0" y2="0"><stop offset="0" stop-color="#012bff"/><stop offset="0.5" stop-color="#4d16ff"/><stop offset="1" stop-color="#9e00ff"/></linearGradient><linearGradient id="f101" gradientUnits="userSpaceOnUse" x1="1308.9" x2="1657.0" y1="0" y2="0"><stop offset="0" stop-color="#600099"/><stop offset="0.143" stop-color="#8a0099"/><stop offset="0.286" stop-color="#990081"/><stop offset="0.429" stop-color="#990067"/><stop offset="0.571" stop-color="#990055"/><stop offset="0.714" stop-color="#990048"/><stop offset="0.857" stop-color="#99003e"/><stop offset="1" stop-color="#990036"/></linearGradient><linearGradient id="f102" gradientUnits="userSpaceOnUse" x1="1017.8" x2="1188.1" y1="0" y2="0"><stop offset="0" stop-color="#003799"/><stop offset="0.333" stop-color="#002d99"/><stop offset="0.667" stop-color="#002399"/><stop offset="1" stop-color="#001899"/></linearGradient><linearGradient id="f103" gradientUnits="userSpaceOnUse" x1="1188.1" x2="1302.0" y1="0" y2="0"><stop offset="0" stop-color="#0127ff"/><stop offset="0.5" stop-color="#4614ff"/><stop offset="1" stop-color="#8e00ff"/></linearGradient><linearGradient id="f104" gradientUnits="userSpaceOnUse" x1="1302.0" x2="1657.0" y1="0" y2="0"><stop offset="0" stop-color="#560099"/><stop offset="0.143" stop-color="#7f0099"/><stop offset="0.286" stop-color="#99008a"/><stop offset="0.429" stop-color="#99006d"/><stop offset="0.571" stop-color="#990059"/><stop offset="0.714" stop-color="#99004b"/><stop offset="0.857" stop-color="#990041"/><stop offset="1" stop-color="#990038"/></linearGradient><linearGradient id="f105" gradientUnits="userSpaceOnUse" x1="1017.8" x2="1189.3" y1="0" y2="0"><stop offset="0" stop-color="#003499"/><stop offset="0.333" stop-color="#002a99"/><stop offset="0.667" stop-color="#002099"/><stop offset="1" stop-color="#001599"/></linearGradient><linearGradient id="f106" gradientUnits="userSpaceOnUse" x1="1189.3" x2="1295.2" y1="0" y2="0"><stop offset="0" stop-color="#0123ff"/><stop offset="0.5" stop-color="#3f12ff"/><stop offset="1" stop-color="#8000ff"/></linearGradient><linearGradient id="f107" gradientUnits="userSpaceOnUse" x1="1295.2" x2="1657.0" y1="0" y2="0"><stop offset="0" stop-color="#4e0099"/><stop offset="0.143" stop-color="#760099"/><stop offset="0.286" stop-color="#990093"/><stop offset="0.429" stop-color="#990073"/><stop offset="0.571" stop-color="#99005e"/><stop offset="0.714" stop-color="#99004f"/><stop offset="0.857" stop-color="#990043"/><stop offset="1" stop-color="#99003a"/></linearGradient><linearGradient id="f108" gradientUnits="userSpaceOnUse" x1="1017.8" x2="1190.4" y1="0" y2="0"><stop offset="0" stop-color="#003299"/><stop offset="0.333" stop-color="#002899"/><stop offset="0.667" stop-color="#001e99"/><stop offset="1" stop-color="#001399"/></linearGradient><linearGradient id="f109" gradientUnits="userSpaceOnUse" x1="1190.4" x2="1288.3" y1="0" y2="0"><stop offset="0" stop-color="#0120ff"/><stop offset="0.5" stop-color="#3810ff"/><stop offset="1" stop-color="#7200ff"/></linearGradient><linearGradient id="f110" gradientUnits="userSpaceOnUse" x1="1288.3" x2="1657.0" y1="0" y2="0"><stop offset="0" stop-color="#450099"/><stop offset="0.143" stop-color="#6d0099"/><stop offset="0.286" stop-color="#960099"/><stop offset="0.429" stop-color="#99007a"/><stop offset="0.571" stop-color="#990063"/><stop offset="0.714" stop-color="#990052"/><stop offset="0.857" stop-color="#990046"/><stop offset="1" stop-color="#99003d"/></linearGradient><linearGradient id="f111" gradientUnits="userSpaceOnUse" x1="1017.8" x2="1191.5" y1="0" y2="0"><stop offset="0" stop-color="#002f99"/><stop offset="0.333" stop-color="#002599"/><stop offset="0.667" stop-color="#001c99"/><stop offset="1" stop-color="#001199"/></linearGradient><linearGradient id="f112" gradientUnits="userSpaceOnUse" x1="1191.5" x2="1281.4" y1="0" y2="0"><stop offset="0" stop-color="#011cff"/><stop offset="1" stop-color="#6500ff"/></linearGradient><linearGradient id="f113" gradientUnits="userSpaceOnUse" x1="1281.4" x2="1657.0" y1="0" y2="0"><stop offset="0" stop-color="#3e0099"/><stop offset="0.143" stop-color="#640099"/><stop offset="0.286" stop-color="#8d0099"/><stop offset="0.429" stop-color="#990080"/><stop offset="0.571" stop-color="#990067"/><stop offset="0.714" stop-color="#990056"/><stop offset="0.857" stop-color="#990049"/><stop offset="1" stop-color="#99003f"/></linearGradient><linearGradient id="f114" gradientUnits="userSpaceOnUse" x1="1017.8" x2="1192.7" y1="0" y2="0"><stop offset="0" stop-color="#002d99"/><stop offset="0.333" stop-color="#002399"/><stop offset="0.667" stop-color="#001999"/><stop offset="1" stop-color="#000f99"/></linearGradient><linearGradient id="f115" gradientUnits="userSpaceOnUse" x1="1192.7" x2="1274.5" y1="0" y2="0"><stop offset="0" stop-color="#0119ff"/><stop offset="1" stop-color="#5a00ff"/></linearGradient><linearGradient id="f116" gradientUnits="userSpaceOnUse" x1="1274.5" x2="1657.0" y1="0" y2="0"><stop offset="0" stop-color="#370099"/><stop offset="0.143" stop-color="#5c0099"/><stop offset="0.286" stop-color="#840099"/><stop offset="0.429" stop-color="#990087"/><stop offset="0.571" stop-color="#99006c"/><stop offset="0.714" stop-color="#99005a"/><stop offset="0.857" stop-color="#99004c"/><stop offset="1" stop-color="#990041"/></linearGradient><linearGradient id="f117" gradientUnits="userSpaceOnUse" x1="1017.8" x2="1193.8" y1="0" y2="0"><stop offset="0" stop-color="#002a99"/><stop offset="0.333" stop-color="#002199"/><stop offset="0.667" stop-color="#001799"/><stop offset="1" stop-color="#000d99"/></linearGradient><linearGradient id="f118" gradientUnits="userSpaceOnUse" x1="1193.8" x2="1267.7" y1="0" y2="0"><stop offset="0" stop-color="#0116ff"/><stop offset="1" stop-color="#4e00ff"/></linearGradient><linearGradient id="f119" gradientUnits="userSpaceOnUse" x1="1267.7" x2="1657.0" y1="0" y2="0"><stop offset="0" stop-color="#300099"/><stop offset="0.125" stop-color="#500099"/><stop offset="0.25" stop-color="#720099"/><stop offset="0.375" stop-color="#950099"/><stop offset="0.5" stop-color="#99007e"/><stop offset="0.625" stop-color="#990069"/><stop offset="0.75" stop-color="#990059"/><stop offset="0.875" stop-color="#99004d"/><stop offset="1" stop-color="#990044"/></linearGradient><linearGradient id="f120" gradientUnits="userSpaceOnUse" x1="1017.8" x2="1194.9" y1="0" y2="0"><stop offset="0" stop-color="#002899"/><stop offset="0.333" stop-color="#001f99"/><stop offset="0.667" stop-color="#001699"/><stop offset="1" stop-color="#000c99"/></linearGradient><linearGradient id="f121" gradientUnits="userSpaceOnUse" x1="1194.9" x2="1260.8" y1="0" y2="0"><stop offset="0" stop-color="#0113ff"/><stop offset="1" stop-color="#4400ff"/></linearGradient><linearGradient id="f122" gradientUnits="userSpaceOnUse" x1="1260.8" x2="1657.0" y1="0" y2="0"><stop offset="0" stop-color="#290099"/><stop offset="0.125" stop-color="#490099"/><stop offset="0.25" stop-color="#6b0099"/><stop offset="0.375" stop-color="#8d0099"/><stop offset="0.5" stop-color="#990084"/><stop offset="0.625" stop-color="#99006d"/><stop offset="0.75" stop-color="#99005d"/><stop offset="0.875" stop-color="#990050"/><stop offset="1" stop-color="#990046"/></linearGradient><linearGradient id="f123" gradientUnits="userSpaceOnUse" x1="1017.8" x2="1196.1" y1="0" y2="0"><stop offset="0" stop-color="#002699"/><stop offset="0.333" stop-color="#001d99"/><stop offset="0.667" stop-color="#001499"/><stop offset="1" stop-color="#000a99"/></linearGradient><linearGradient id="f124" gradientUnits="userSpaceOnUse" x1="1196.1" x2="1253.9" y1="0" y2="0"><stop offset="0" stop-color="#0110ff"/><stop offset="1" stop-color="#3a00ff"/></linearGradient><linearGradient id="f125" gradientUnits="userSpaceOnUse" x1="1253.9" x2="1657.0" y1="0" y2="0"><stop offset="0" stop-color="#230099"/><stop offset="0.125" stop-color="#430099"/><stop offset="0.25" stop-color="#640099"/><stop offset="0.375" stop-color="#860099"/><stop offset="0.5" stop-color="#99008b"/><stop offset="0.625" stop-color="#990072"/><stop offset="0.75" stop-color="#990060"/><stop offset="0.875" stop-color="#990053"/><stop offset="1" stop-color="#990048"/></linearGradient><linearGradient id="f126" gradientUnits="userSpaceOnUse" x1="1017.8" x2="1197.2" y1="0" y2="0"><stop offset="0" stop-color="#002499"/><stop offset="0.333" stop-color="#001b99"/><stop offset="0.667" stop-color="#001299"/><stop offset="1" stop-color="#000899"/></linearGradient><linearGradient id="f127" gradientUnits="userSpaceOnUse" x1="1197.2" x2="1247.1" y1="0" y2="0"><stop offset="0" stop-color="#010eff"/><stop offset="1" stop-color="#3000ff"/></linearGradient><linearGradient id="f128" gradientUnits="userSpaceOnUse" x1="1247.1" x2="1657.0" y1="0" y2="0"><stop offset="0" stop-color="#1e0099"/><stop offset="0.125" stop-color="#3d0099"/><stop offset="0.25" stop-color="#5d0099"/><stop offset="0.375" stop-color="#7e0099"/><stop offset="0.5" stop-color="#990091"/><stop offset="0.625" stop-color="#990077"/><stop offset="0.75" stop-color="#990064"/><stop offset="0.875" stop-color="#990056"/><stop offset="1" stop-color="#99004b"/></linearGradient><linearGradient id="f129" gradientUnits="userSpaceOnUse" x1="1017.8" x2="1198.3" y1="0" y2="0"><stop offset="0" stop-color="#002299"/><stop offset="0.333" stop-color="#001999"/><stop offset="0.667" stop-color="#001099"/><stop offset="1" stop-color="#000799"/></linearGradient><linearGradient id="f130" gradientUnits="userSpaceOnUse" x1="1198.3" x2="1240.2" y1="0" y2="0"><stop offset="0" stop-color="#010bff"/><stop offset="1" stop-color="#2700ff"/></linearGradient><linearGradient id="f131" gradientUnits="userSpaceOnUse" x1="1240.2" x2="1657.0" y1="0" y2="0"><stop offset="0" stop-color="#180099"/><stop offset="0.125" stop-color="#370099"/><stop offset="0.25" stop-color="#570099"/><stop offset="0.375" stop-color="#780099"/><stop offset="0.5" stop-color="#990098"/><stop offset="0.625" stop-color="#99007c"/><stop offset="0.75" stop-color="#990068"/><stop offset="0.875" stop-color="#990059"/><stop offset="1" stop-color="#99004d"/></linearGradient><linearGradient id="f132" gradientUnits="userSpaceOnUse" x1="1017.8" x2="1199.5" y1="0" y2="0"><stop offset="0" stop-color="#002099"/><stop offset="0.333" stop-color="#001899"/><stop offset="0.667" stop-color="#000f99"/><stop offset="1" stop-color="#000599"/></linearGradient><linearGradient id="f133" gradientUnits="userSpaceOnUse" x1="1199.5" x2="1233.3" y1="0" y2="0"><stop offset="0" stop-color="#0109ff"/><stop offset="1" stop-color="#1f00ff"/></linearGradient><linearGradient id="f134" gradientUnits="userSpaceOnUse" x1="1233.3" x2="1657.0" y1="0" y2="0"><stop offset="0" stop-color="#130099"/><stop offset="0.125" stop-color="#320099"/><stop offset="0.25" stop-color="#510099"/><stop offset="0.375" stop-color="#710099"/><stop offset="0.5" stop-color="#930099"/><stop offset="0.625" stop-color="#990081"/><stop offset="0.75" stop-color="#99006b"/><stop offset="0.875" stop-color="#99005c"/><stop offset="1" stop-color="#99004f"/></linearGradient><linearGradient id="f135" gradientUnits="userSpaceOnUse" x1="1017.8" x2="1200.6" y1="0" y2="0"><stop offset="0" stop-color="#001f99"/><stop offset="0.333" stop-color="#001699"/><stop offset="0.667" stop-color="#000d99"/><stop offset="1" stop-color="#000499"/></linearGradient><linearGradient id="f136" gradientUnits="userSpaceOnUse" x1="1200.6" x2="1226.4" y1="0" y2="0"><stop offset="0" stop-color="#0007ff"/><stop offset="1" stop-color="#1700ff"/></linearGradient><linearGradient id="f137" gradientUnits="userSpaceOnUse" x1="1226.4" x2="1657.0" y1="0" y2="0"><stop offset="0" stop-color="#0e0099"/><stop offset="0.125" stop-color="#2c0099"/><stop offset="0.25" stop-color="#4b0099"/><stop offset="0.375" stop-color="#6b0099"/><stop offset="0.5" stop-color="#8d0099"/><stop offset="0.625" stop-color="#990086"/><stop offset="0.75" stop-color="#99006f"/><stop offset="0.875" stop-color="#99005f"/><stop offset="1" stop-color="#990052"/></linearGradient><linearGradient id="f138" gradientUnits="userSpaceOnUse" x1="1017.8" x2="1201.8" y1="0" y2="0"><stop offset="0" stop-color="#001d99"/><stop offset="0.333" stop-color="#001599"/><stop offset="0.667" stop-color="#000c99"/><stop offset="1" stop-color="#000399"/></linearGradient><linearGradient id="f139" gradientUnits="userSpaceOnUse" x1="1201.8" x2="1219.6" y1="0" y2="0"><stop offset="0" stop-color="#0004ff"/><stop offset="1" stop-color="#0f00ff"/></linearGradient><linearGradient id="f140" gradientUnits="userSpaceOnUse" x1="1219.6" x2="1657.0" y1="0" y2="0"><stop offset="0" stop-color="#0a0099"/><stop offset="0.111" stop-color="#240099"/><stop offset="0.222" stop-color="#3f0099"/><stop offset="0.333" stop-color="#5b0099"/><stop offset="0.444" stop-color="#780099"/><stop offset="0.556" stop-color="#950099"/><stop offset="0.667" stop-color="#990082"/><stop offset="0.778" stop-color="#99006f"/><stop offset="0.889" stop-color="#990060"/><stop offset="1" stop-color="#990054"/></linearGradient><linearGradient id="f141" gradientUnits="userSpaceOnUse" x1="1017.8" x2="1202.9" y1="0" y2="0"><stop offset="0" stop-color="#001b99"/><stop offset="0.333" stop-color="#001399"/><stop offset="0.667" stop-color="#000a99"/><stop offset="1" stop-color="#000299"/></linearGradient><linearGradient id="f142" gradientUnits="userSpaceOnUse" x1="1202.9" x2="1212.7" y1="0" y2="0"><stop offset="0" stop-color="#0002ff"/><stop offset="1" stop-color="#0800ff"/></linearGradient><linearGradient id="f143" gradientUnits="userSpaceOnUse" x1="1212.7" x2="1657.0" y1="0" y2="0"><stop offset="0" stop-color="#050099"/><stop offset="0.111" stop-color="#1f0099"/><stop offset="0.222" stop-color="#3a0099"/><stop offset="0.333" stop-color="#560099"/><stop offset="0.444" stop-color="#720099"/><stop offset="0.556" stop-color="#8f0099"/><stop offset="0.667" stop-color="#990087"/><stop offset="0.778" stop-color="#990072"/><stop offset="0.889" stop-color="#990063"/><stop offset="1" stop-color="#990057"/></linearGradient><linearGradient id="f144" gradientUnits="userSpaceOnUse" x1="1017.8" x2="1204.0" y1="0" y2="0"><stop offset="0" stop-color="#001a99"/><stop offset="0.333" stop-color="#001299"/><stop offset="0.667" stop-color="#000999"/><stop offset="1" stop-color="#000099"/></linearGradient><linearGradient id="f145" gradientUnits="userSpaceOnUse" x1="1204.0" x2="1205.8" y1="0" y2="0"><stop offset="0" stop-color="#0000ff"/><stop offset="1" stop-color="#0100ff"/></linearGradient><linearGradient id="f146" gradientUnits="userSpaceOnUse" x1="1205.8" x2="1657.0" y1="0" y2="0"><stop offset="0" stop-color="#010099"/><stop offset="0.111" stop-color="#1b0099"/><stop offset="0.222" stop-color="#350099"/><stop offset="0.333" stop-color="#510099"/><stop offset="0.444" stop-color="#6d0099"/><stop offset="0.556" stop-color="#8a0099"/><stop offset="0.667" stop-color="#99008c"/><stop offset="0.778" stop-color="#990076"/><stop offset="0.889" stop-color="#990066"/><stop offset="1" stop-color="#990059"/></linearGradient><linearGradient id="f147" gradientUnits="userSpaceOnUse" x1="1017.8" x2="1657.0" y1="0" y2="0"><stop offset="0" stop-color="#001899"/><stop offset="0.0769" stop-color="#001299"/><stop offset="0.154" stop-color="#000b99"/><stop offset="0.231" stop-color="#000599"/><stop offset="0.308" stop-color="#050099"/><stop offset="0.385" stop-color="#1d0099"/><stop offset="0.462" stop-color="#370099"/><stop offset="0.538" stop-color="#510099"/><stop offset="0.615" stop-color="#6c0099"/><stop offset="0.692" stop-color="#880099"/><stop offset="0.769" stop-color="#99008e"/><stop offset="0.846" stop-color="#990079"/><stop offset="0.923" stop-color="#990068"/><stop offset="1" stop-color="#99005c"/></linearGradient><linearGradient id="f148" gradientUnits="userSpaceOnUse" x1="1017.8" x2="1657.0" y1="0" y2="0"><stop offset="0" stop-color="#001799"/><stop offset="0.0769" stop-color="#001199"/><stop offset="0.154" stop-color="#000a99"/><stop offset="0.231" stop-color="#000499"/><stop offset="0.308" stop-color="#040099"/><stop offset="0.385" stop-color="#1c0099"/><stop offset="0.462" stop-color="#350099"/><stop offset="0.538" stop-color="#4f0099"/><stop offset="0.615" stop-color="#690099"/><stop offset="0.692" stop-color="#840099"/><stop offset="0.769" stop-color="#990092"/><stop offset="0.846" stop-color="#99007c"/><stop offset="0.923" stop-color="#99006b"/><stop offset="1" stop-color="#99005e"/></linearGradient><linearGradient id="f149" gradientUnits="userSpaceOnUse" x1="1017.8" x2="1657.0" y1="0" y2="0"><stop offset="0" stop-color="#001699"/><stop offset="0.0769" stop-color="#001099"/><stop offset="0.154" stop-color="#000999"/><stop offset="0.231" stop-color="#000399"/><stop offset="0.308" stop-color="#030099"/><stop offset="0.385" stop-color="#1b0099"/><stop offset="0.462" stop-color="#340099"/><stop offset="0.538" stop-color="#4d0099"/><stop offset="0.615" stop-color="#660099"/><stop offset="0.692" stop-color="#810099"/><stop offset="0.769" stop-color="#990096"/><stop offset="0.846" stop-color="#99007f"/><stop offset="0.923" stop-color="#99006e"/><stop offset="1" stop-color="#990060"/></linearGradient><linearGradient id="f150" gradientUnits="userSpaceOnUse" x1="1017.8" x2="1657.0" y1="0" y2="0"><stop offset="0" stop-color="#001499"/><stop offset="0.0769" stop-color="#000e99"/><stop offset="0.154" stop-color="#000899"/><stop offset="0.231" stop-color="#000299"/><stop offset="0.308" stop-color="#030099"/><stop offset="0.385" stop-color="#1a0099"/><stop offset="0.462" stop-color="#320099"/><stop offset="0.538" stop-color="#4a0099"/><stop offset="0.615" stop-color="#640099"/><stop offset="0.692" stop-color="#7e0099"/><stop offset="0.769" stop-color="#980099"/><stop offset="0.846" stop-color="#990082"/><stop offset="0.923" stop-color="#990071"/><stop offset="1" stop-color="#990063"/></linearGradient><linearGradient id="f151" gradientUnits="userSpaceOnUse" x1="1017.8" x2="1657.0" y1="0" y2="0"><stop offset="0" stop-color="#001399"/><stop offset="0.0769" stop-color="#000d99"/><stop offset="0.154" stop-color="#000799"/><stop offset="0.231" stop-color="#000199"/><stop offset="0.308" stop-color="#020099"/><stop offset="0.385" stop-color="#190099"/><stop offset="0.462" stop-color="#300099"/><stop offset="0.538" stop-color="#480099"/><stop offset="0.615" stop-color="#610099"/><stop offset="0.692" stop-color="#7a0099"/><stop offset="0.769" stop-color="#940099"/><stop offset="0.846" stop-color="#990086"/><stop offset="0.923" stop-color="#990074"/><stop offset="1" stop-color="#990065"/></linearGradient><linearGradient id="f152" gradientUnits="userSpaceOnUse" x1="1017.8" x2="1657.0" y1="0" y2="0"><stop offset="0" stop-color="#001299"/><stop offset="0.0769" stop-color="#000c99"/><stop offset="0.154" stop-color="#000699"/><stop offset="0.231" stop-color="#000099"/><stop offset="0.308" stop-color="#020099"/><stop offset="0.385" stop-color="#180099"/><stop offset="0.462" stop-color="#2f0099"/><stop offset="0.538" stop-color="#460099"/><stop offset="0.615" stop-color="#5f0099"/><stop offset="0.692" stop-color="#770099"/><stop offset="0.769" stop-color="#910099"/><stop offset="0.846" stop-color="#990089"/><stop offset="0.923" stop-color="#990076"/><stop offset="1" stop-color="#990068"/></linearGradient><linearGradient id="f153" gradientUnits="userSpaceOnUse" x1="1017.8" x2="1657.0" y1="0" y2="0"><stop offset="0" stop-color="#001199"/><stop offset="0.0769" stop-color="#000b99"/><stop offset="0.154" stop-color="#000599"/><stop offset="0.231" stop-color="#000099"/><stop offset="0.308" stop-color="#010099"/><stop offset="0.385" stop-color="#170099"/><stop offset="0.462" stop-color="#2e0099"/><stop offset="0.538" stop-color="#450099"/><stop offset="0.615" stop-color="#5c0099"/><stop offset="0.692" stop-color="#740099"/><stop offset="0.769" stop-color="#8d0099"/><stop offset="0.846" stop-color="#99008c"/><stop offset="0.923" stop-color="#990079"/><stop offset="1" stop-color="#99006a"/></linearGradient><linearGradient id="f154" gradientUnits="userSpaceOnUse" x1="1017.8" x2="1657.0" y1="0" y2="0"><stop offset="0" stop-color="#001099"/><stop offset="0.0769" stop-color="#000a99"/><stop offset="0.154" stop-color="#000499"/><stop offset="0.231" stop-color="#000099"/><stop offset="0.308" stop-color="#010099"/><stop offset="0.385" stop-color="#160099"/><stop offset="0.462" stop-color="#2c0099"/><stop offset="0.538" stop-color="#430099"/><stop offset="0.615" stop-color="#5a0099"/><stop offset="0.692" stop-color="#720099"/><stop offset="0.769" stop-color="#8a0099"/><stop offset="0.846" stop-color="#990090"/><stop offset="0.923" stop-color="#99007c"/><stop offset="1" stop-color="#99006d"/></linearGradient><linearGradient id="f155" gradientUnits="userSpaceOnUse" x1="1017.8" x2="1657.0" y1="0" y2="0"><stop offset="0" stop-color="#000f99"/><stop offset="0.0769" stop-color="#000999"/><stop offset="0.154" stop-color="#000399"/><stop offset="0.231" stop-color="#000099"/><stop offset="0.308" stop-color="#000099"/><stop offset="0.385" stop-color="#150099"/><stop offset="0.462" stop-color="#2b0099"/><stop offset="0.538" stop-color="#410099"/><stop offset="0.615" stop-color="#580099"/><stop offset="0.692" stop-color="#6f0099"/><stop offset="0.769" stop-color="#870099"/><stop offset="0.846" stop-color="#990093"/><stop offset="0.923" stop-color="#99007f"/><stop offset="1" stop-color="#99006f"/></linearGradient><linearGradient id="f156" gradientUnits="userSpaceOnUse" x1="1017.8" x2="1657.0" y1="0" y2="0"><stop offset="0" stop-color="#000e99"/><stop offset="0.0769" stop-color="#000899"/><stop offset="0.154" stop-color="#000299"/><stop offset="0.231" stop-color="#000099"/><stop offset="0.308" stop-color="#000099"/><stop offset="0.385" stop-color="#140099"/><stop offset="0.462" stop-color="#2a0099"/><stop offset="0.538" stop-color="#3f0099"/><stop offset="0.615" stop-color="#560099"/><stop offset="0.692" stop-color="#6c0099"/><stop offset="0.769" stop-color="#840099"/><stop offset="0.846" stop-color="#990096"/><stop offset="0.923" stop-color="#990082"/><stop offset="1" stop-color="#990072"/></linearGradient><linearGradient id="f157" gradientUnits="userSpaceOnUse" x1="1017.8" x2="1657.0" y1="0" y2="0"><stop offset="0" stop-color="#000d99"/><stop offset="0.0769" stop-color="#000799"/><stop offset="0.154" stop-color="#000299"/><stop offset="0.231" stop-color="#000099"/><stop offset="0.308" stop-color="#000099"/><stop offset="0.385" stop-color="#140099"/><stop offset="0.462" stop-color="#280099"/><stop offset="0.538" stop-color="#3e0099"/><stop offset="0.615" stop-color="#530099"/><stop offset="0.692" stop-color="#6a0099"/><stop offset="0.769" stop-color="#810099"/><stop offset="0.846" stop-color="#980099"/><stop offset="0.923" stop-color="#990085"/><stop offset="1" stop-color="#990075"/></linearGradient><linearGradient id="f158" gradientUnits="userSpaceOnUse" x1="1017.8" x2="1657.0" y1="0" y2="0"><stop offset="0" stop-color="#000c99"/><stop offset="0.0769" stop-color="#000699"/><stop offset="0.154" stop-color="#000199"/><stop offset="0.231" stop-color="#000099"/><stop offset="0.308" stop-color="#000099"/><stop offset="0.385" stop-color="#130099"/><stop offset="0.462" stop-color="#270099"/><stop offset="0.538" stop-color="#3c0099"/><stop offset="0.615" stop-color="#510099"/><stop offset="0.692" stop-color="#670099"/><stop offset="0.769" stop-color="#7e0099"/><stop offset="0.846" stop-color="#950099"/><stop offset="0.923" stop-color="#990088"/><stop offset="1" stop-color="#990077"/></linearGradient><linearGradient id="f159" gradientUnits="userSpaceOnUse" x1="1017.8" x2="1657.0" y1="0" y2="0"><stop offset="0" stop-color="#000b99"/><stop offset="0.0769" stop-color="#000599"/><stop offset="0.154" stop-color="#000099"/><stop offset="0.231" stop-color="#000099"/><stop offset="0.308" stop-color="#000099"/><stop offset="0.385" stop-color="#120099"/><stop offset="0.462" stop-color="#260099"/><stop offset="0.538" stop-color="#3b0099"/><stop offset="0.615" stop-color="#500099"/><stop offset="0.692" stop-color="#650099"/><stop offset="0.769" stop-color="#7b0099"/><stop offset="0.846" stop-color="#920099"/><stop offset="0.923" stop-color="#99008b"/><stop offset="1" stop-color="#99007a"/></linearGradient><linearGradient id="f160" gradientUnits="userSpaceOnUse" x1="1017.8" x2="1657.0" y1="0" y2="0"><stop offset="0" stop-color="#000a99"/><stop offset="0.0769" stop-color="#000599"/><stop offset="0.154" stop-color="#000099"/><stop offset="0.231" stop-color="#000099"/><stop offset="0.308" stop-color="#000099"/><stop offset="0.385" stop-color="#110099"/><stop offset="0.462" stop-color="#250099"/><stop offset="0.538" stop-color="#390099"/><stop offset="0.615" stop-color="#4e0099"/><stop offset="0.692" stop-color="#630099"/><stop offset="0.769" stop-color="#780099"/><stop offset="0.846" stop-color="#8e0099"/><stop offset="0.923" stop-color="#99008e"/><stop offset="1" stop-color="#99007c"/></linearGradient><linearGradient id="f161" gradientUnits="userSpaceOnUse" x1="1017.8" x2="1657.0" y1="0" y2="0"><stop offset="0" stop-color="#000999"/><stop offset="0.0769" stop-color="#000499"/><stop offset="0.154" stop-color="#000099"/><stop offset="0.231" stop-color="#000099"/><stop offset="0.308" stop-color="#000099"/><stop offset="0.385" stop-color="#110099"/><stop offset="0.462" stop-color="#240099"/><stop offset="0.538" stop-color="#380099"/><stop offset="0.615" stop-color="#4c0099"/><stop offset="0.692" stop-color="#610099"/><stop offset="0.769" stop-color="#760099"/><stop offset="0.846" stop-color="#8c0099"/><stop offset="0.923" stop-color="#990091"/><stop offset="1" stop-color="#99007f"/></linearGradient><linearGradient id="f162" gradientUnits="userSpaceOnUse" x1="1017.8" x2="1657.0" y1="0" y2="0"><stop offset="0" stop-color="#000899"/><stop offset="0.0769" stop-color="#000399"/><stop offset="0.154" stop-color="#000099"/><stop offset="0.231" stop-color="#000099"/><stop offset="0.308" stop-color="#000099"/><stop offset="0.385" stop-color="#100099"/><stop offset="0.462" stop-color="#230099"/><stop offset="0.538" stop-color="#360099"/><stop offset="0.615" stop-color="#4a0099"/><stop offset="0.692" stop-color="#5f0099"/><stop offset="0.769" stop-color="#730099"/><stop offset="0.846" stop-color="#890099"/><stop offset="0.923" stop-color="#990094"/><stop offset="1" stop-color="#990082"/></linearGradient><linearGradient id="f163" gradientUnits="userSpaceOnUse" x1="1017.8" x2="1657.0" y1="0" y2="0"><stop offset="0" stop-color="#000799"/><stop offset="0.0769" stop-color="#000299"/><stop offset="0.154" stop-color="#000099"/><stop offset="0.231" stop-color="#000099"/><stop offset="0.308" stop-color="#000099"/><stop offset="0.385" stop-color="#0f0099"/><stop offset="0.462" stop-color="#220099"/><stop offset="0.538" stop-color="#350099"/><stop offset="0.615" stop-color="#490099"/><stop offset="0.692" stop-color="#5d0099"/><stop offset="0.769" stop-color="#710099"/><stop offset="0.846" stop-color="#860099"/><stop offset="0.923" stop-color="#990097"/><stop offset="1" stop-color="#990084"/></linearGradient><linearGradient id="f164" gradientUnits="userSpaceOnUse" x1="1017.8" x2="1657.0" y1="0" y2="0"><stop offset="0" stop-color="#000699"/><stop offset="0.0769" stop-color="#000199"/><stop offset="0.154" stop-color="#000099"/><stop offset="0.231" stop-color="#000099"/><stop offset="0.308" stop-color="#000099"/><stop offset="0.385" stop-color="#0e0099"/><stop offset="0.462" stop-color="#210099"/><stop offset="0.538" stop-color="#340099"/><stop offset="0.615" stop-color="#470099"/><stop offset="0.692" stop-color="#5b0099"/><stop offset="0.769" stop-color="#6f0099"/><stop offset="0.846" stop-color="#830099"/><stop offset="0.923" stop-color="#980099"/><stop offset="1" stop-color="#990087"/></linearGradient><linearGradient id="f165" gradientUnits="userSpaceOnUse" x1="1017.8" x2="1657.0" y1="0" y2="0"><stop offset="0" stop-color="#000699"/><stop offset="0.0769" stop-color="#000199"/><stop offset="0.154" stop-color="#000099"/><stop offset="0.231" stop-color="#000099"/><stop offset="0.308" stop-color="#000099"/><stop offset="0.385" stop-color="#0e0099"/><stop offset="0.462" stop-color="#200099"/><stop offset="0.538" stop-color="#330099"/><stop offset="0.615" stop-color="#460099"/><stop offset="0.692" stop-color="#590099"/><stop offset="0.769" stop-color="#6d0099"/><stop offset="0.846" stop-color="#820099"/><stop offset="0.923" stop-color="#960099"/><stop offset="1" stop-color="#990088"/></linearGradient></defs><g clip-path="url(#cpPlot)"><g clip-path="url(#cpLoc)"><rect x="1017.8" y="128.6" width="639.2" height="7.4" fill="url(#f0)"/><rect x="1017.8" y="135.6" width="639.2" height="7.4" fill="url(#f1)"/><rect x="1017.8" y="142.6" width="639.2" height="7.4" fill="url(#f2)"/><rect x="1017.8" y="149.6" width="144.9" height="7.4" fill="url(#f3)"/><rect x="1147.0" y="149.6" width="510.0" height="7.4" fill="url(#f5)"/><rect x="1017.8" y="156.6" width="146.0" height="7.4" fill="url(#f6)"/><rect x="1221.9" y="156.6" width="435.1" height="7.4" fill="url(#f8)"/><rect x="1017.8" y="163.6" width="147.1" height="7.4" fill="url(#f9)"/><rect x="1296.9" y="163.6" width="360.1" height="7.4" fill="url(#f11)"/><rect x="1017.8" y="170.6" width="148.3" height="7.4" fill="url(#f12)"/><rect x="1371.8" y="170.6" width="285.2" height="7.4" fill="url(#f14)"/><rect x="1017.8" y="177.6" width="149.4" height="7.4" fill="url(#f15)"/><rect x="1446.7" y="177.6" width="210.3" height="7.4" fill="url(#f17)"/><rect x="1017.8" y="184.6" width="150.6" height="7.4" fill="url(#f18)"/><rect x="1482.5" y="184.6" width="174.5" height="7.4" fill="url(#f20)"/><rect x="1017.8" y="191.6" width="151.7" height="7.4" fill="url(#f21)"/><rect x="1475.6" y="191.6" width="181.4" height="7.4" fill="url(#f23)"/><rect x="1017.8" y="198.6" width="152.8" height="7.4" fill="url(#f24)"/><rect x="1468.7" y="198.6" width="188.3" height="7.4" fill="url(#f26)"/><rect x="1017.8" y="205.6" width="154.0" height="7.4" fill="url(#f27)"/><rect x="1461.8" y="205.6" width="195.2" height="7.4" fill="url(#f29)"/><rect x="1017.8" y="212.6" width="155.1" height="7.4" fill="url(#f30)"/><rect x="1455.0" y="212.6" width="202.0" height="7.4" fill="url(#f32)"/><rect x="1017.8" y="219.6" width="156.2" height="7.4" fill="url(#f33)"/><rect x="1448.1" y="219.6" width="208.9" height="7.4" fill="url(#f35)"/><rect x="1017.8" y="226.6" width="157.4" height="7.4" fill="url(#f36)"/><rect x="1441.2" y="226.6" width="215.8" height="7.4" fill="url(#f38)"/><rect x="1017.8" y="233.6" width="158.5" height="7.4" fill="url(#f39)"/><rect x="1434.3" y="233.6" width="222.7" height="7.4" fill="url(#f41)"/><rect x="1017.8" y="240.6" width="159.6" height="7.4" fill="url(#f42)"/><rect x="1427.5" y="240.6" width="229.5" height="7.4" fill="url(#f44)"/><rect x="1017.8" y="247.6" width="160.8" height="7.4" fill="url(#f45)"/><rect x="1420.6" y="247.6" width="236.4" height="7.4" fill="url(#f47)"/><rect x="1017.8" y="254.6" width="161.9" height="7.4" fill="url(#f48)"/><rect x="1413.7" y="254.6" width="243.3" height="7.4" fill="url(#f50)"/><rect x="1017.8" y="261.6" width="163.0" height="7.4" fill="url(#f51)"/><rect x="1406.9" y="261.6" width="250.1" height="7.4" fill="url(#f53)"/><rect x="1017.8" y="268.6" width="164.2" height="7.4" fill="url(#f54)"/><rect x="1400.0" y="268.6" width="257.0" height="7.4" fill="url(#f56)"/><rect x="1017.8" y="275.6" width="165.3" height="7.4" fill="url(#f57)"/><rect x="1393.1" y="275.6" width="263.9" height="7.4" fill="url(#f59)"/><rect x="1017.8" y="282.6" width="166.4" height="7.4" fill="url(#f60)"/><rect x="1386.2" y="282.6" width="270.8" height="7.4" fill="url(#f62)"/><rect x="1017.8" y="289.6" width="167.6" height="7.4" fill="url(#f63)"/><rect x="1379.4" y="289.6" width="277.6" height="7.4" fill="url(#f65)"/><rect x="1017.8" y="296.6" width="168.7" height="7.4" fill="url(#f66)"/><rect x="1372.5" y="296.6" width="284.5" height="7.4" fill="url(#f68)"/><rect x="1017.8" y="303.6" width="169.8" height="7.4" fill="url(#f69)"/><rect x="1365.6" y="303.6" width="291.4" height="7.4" fill="url(#f71)"/><rect x="1017.8" y="310.6" width="171.0" height="7.4" fill="url(#f72)"/><rect x="1358.8" y="310.6" width="298.2" height="7.4" fill="url(#f74)"/><rect x="1017.8" y="317.6" width="172.1" height="7.4" fill="url(#f75)"/><rect x="1351.9" y="317.6" width="305.1" height="7.4" fill="url(#f77)"/><rect x="1017.8" y="324.6" width="173.3" height="7.4" fill="url(#f78)"/><rect x="1345.0" y="324.6" width="312.0" height="7.4" fill="url(#f80)"/><rect x="1017.8" y="331.6" width="174.4" height="7.4" fill="url(#f81)"/><rect x="1338.1" y="331.6" width="318.9" height="7.4" fill="url(#f83)"/><rect x="1017.8" y="338.6" width="175.5" height="7.4" fill="url(#f84)"/><rect x="1331.3" y="338.6" width="325.7" height="7.4" fill="url(#f86)"/><rect x="1017.8" y="345.6" width="176.7" height="7.4" fill="url(#f87)"/><rect x="1324.4" y="345.6" width="332.6" height="7.4" fill="url(#f89)"/><rect x="1017.8" y="352.6" width="177.8" height="7.4" fill="url(#f90)"/><rect x="1317.5" y="352.6" width="339.5" height="7.4" fill="url(#f92)"/><rect x="1017.8" y="359.6" width="178.9" height="7.4" fill="url(#f93)"/><rect x="1310.7" y="359.6" width="346.3" height="7.4" fill="url(#f95)"/><rect x="1017.8" y="366.6" width="180.1" height="7.4" fill="url(#f96)"/><rect x="1303.8" y="366.6" width="353.2" height="7.4" fill="url(#f98)"/><rect x="1017.8" y="373.6" width="181.2" height="7.4" fill="url(#f99)"/><rect x="1296.9" y="373.6" width="360.1" height="7.4" fill="url(#f101)"/><rect x="1017.8" y="380.6" width="182.3" height="7.4" fill="url(#f102)"/><rect x="1290.0" y="380.6" width="367.0" height="7.4" fill="url(#f104)"/><rect x="1017.8" y="387.6" width="183.5" height="7.4" fill="url(#f105)"/><rect x="1283.2" y="387.6" width="373.8" height="7.4" fill="url(#f107)"/><rect x="1017.8" y="394.6" width="184.6" height="7.4" fill="url(#f108)"/><rect x="1276.3" y="394.6" width="380.7" height="7.4" fill="url(#f110)"/><rect x="1017.8" y="401.6" width="185.7" height="7.4" fill="url(#f111)"/><rect x="1269.4" y="401.6" width="387.6" height="7.4" fill="url(#f113)"/><rect x="1017.8" y="408.6" width="186.9" height="7.4" fill="url(#f114)"/><rect x="1262.5" y="408.6" width="394.5" height="7.4" fill="url(#f116)"/><rect x="1017.8" y="415.6" width="188.0" height="7.4" fill="url(#f117)"/><rect x="1255.7" y="415.6" width="401.3" height="7.4" fill="url(#f119)"/><rect x="1017.8" y="422.6" width="189.1" height="7.4" fill="url(#f120)"/><rect x="1248.8" y="422.6" width="408.2" height="7.4" fill="url(#f122)"/><rect x="1017.8" y="429.6" width="190.3" height="7.4" fill="url(#f123)"/><rect x="1241.9" y="429.6" width="415.1" height="7.4" fill="url(#f125)"/><rect x="1017.8" y="436.6" width="191.4" height="7.4" fill="url(#f126)"/><rect x="1235.1" y="436.6" width="421.9" height="7.4" fill="url(#f128)"/><rect x="1017.8" y="443.6" width="192.5" height="7.4" fill="url(#f129)"/><rect x="1228.2" y="443.6" width="428.8" height="7.4" fill="url(#f131)"/><rect x="1017.8" y="450.6" width="193.7" height="7.4" fill="url(#f132)"/><rect x="1221.3" y="450.6" width="435.7" height="7.4" fill="url(#f134)"/><rect x="1017.8" y="457.6" width="194.8" height="7.4" fill="url(#f135)"/><rect x="1214.4" y="457.6" width="442.6" height="7.4" fill="url(#f137)"/><rect x="1017.8" y="464.6" width="196.0" height="7.4" fill="url(#f138)"/><rect x="1207.6" y="464.6" width="449.4" height="7.4" fill="url(#f140)"/><rect x="1017.8" y="471.6" width="197.1" height="7.4" fill="url(#f141)"/><rect x="1200.7" y="471.6" width="456.3" height="7.4" fill="url(#f143)"/><rect x="1017.8" y="478.6" width="198.2" height="7.4" fill="url(#f144)"/><rect x="1193.8" y="478.6" width="463.2" height="7.4" fill="url(#f146)"/><rect x="1017.8" y="485.6" width="639.2" height="7.4" fill="url(#f147)"/><rect x="1017.8" y="492.6" width="639.2" height="7.4" fill="url(#f148)"/><rect x="1017.8" y="499.6" width="639.2" height="7.4" fill="url(#f149)"/><rect x="1017.8" y="506.6" width="639.2" height="7.4" fill="url(#f150)"/><rect x="1017.8" y="513.6" width="639.2" height="7.4" fill="url(#f151)"/><rect x="1017.8" y="520.6" width="639.2" height="7.4" fill="url(#f152)"/><rect x="1017.8" y="527.6" width="639.2" height="7.4" fill="url(#f153)"/><rect x="1017.8" y="534.6" width="639.2" height="7.4" fill="url(#f154)"/><rect x="1017.8" y="541.6" width="639.2" height="7.4" fill="url(#f155)"/><rect x="1017.8" y="548.6" width="639.2" height="7.4" fill="url(#f156)"/><rect x="1017.8" y="555.6" width="639.2" height="7.4" fill="url(#f157)"/><rect x="1017.8" y="562.6" width="639.2" height="7.4" fill="url(#f158)"/><rect x="1017.8" y="569.6" width="639.2" height="7.4" fill="url(#f159)"/><rect x="1017.8" y="576.6" width="639.2" height="7.4" fill="url(#f160)"/><rect x="1017.8" y="583.6" width="639.2" height="7.4" fill="url(#f161)"/><rect x="1017.8" y="590.6" width="639.2" height="7.4" fill="url(#f162)"/><rect x="1017.8" y="597.6" width="639.2" height="7.4" fill="url(#f163)"/><rect x="1017.8" y="604.6" width="639.2" height="7.4" fill="url(#f164)"/><rect x="1017.8" y="611.6" width="639.2" height="1.8" fill="url(#f165)"/><g clip-path="url(#cpTri)"><rect x="1138.7" y="149.6" width="32.3" height="7.4" fill="url(#f4)"/><rect x="1139.8" y="156.6" width="106.1" height="7.4" fill="url(#f7)"/><rect x="1140.9" y="163.6" width="179.9" height="7.4" fill="url(#f10)"/><rect x="1142.1" y="170.6" width="253.7" height="7.4" fill="url(#f13)"/><rect x="1143.2" y="177.6" width="327.5" height="7.4" fill="url(#f16)"/><rect x="1144.4" y="184.6" width="362.1" height="7.4" fill="url(#f19)"/><rect x="1145.5" y="191.6" width="354.1" height="7.4" fill="url(#f22)"/><rect x="1146.6" y="198.6" width="346.1" height="7.4" fill="url(#f25)"/><rect x="1147.8" y="205.6" width="338.1" height="7.4" fill="url(#f28)"/><rect x="1148.9" y="212.6" width="330.1" height="7.4" fill="url(#f31)"/><rect x="1150.0" y="219.6" width="322.1" height="7.4" fill="url(#f34)"/><rect x="1151.2" y="226.6" width="314.1" height="7.4" fill="url(#f37)"/><rect x="1152.3" y="233.6" width="306.1" height="7.4" fill="url(#f40)"/><rect x="1153.4" y="240.6" width="298.0" height="7.4" fill="url(#f43)"/><rect x="1154.6" y="247.6" width="290.0" height="7.4" fill="url(#f46)"/><rect x="1155.7" y="254.6" width="282.0" height="7.4" fill="url(#f49)"/><rect x="1156.8" y="261.6" width="274.0" height="7.4" fill="url(#f52)"/><rect x="1158.0" y="268.6" width="266.0" height="7.4" fill="url(#f55)"/><rect x="1159.1" y="275.6" width="258.0" height="7.4" fill="url(#f58)"/><rect x="1160.2" y="282.6" width="250.0" height="7.4" fill="url(#f61)"/><rect x="1161.4" y="289.6" width="242.0" height="7.4" fill="url(#f64)"/><rect x="1162.5" y="296.6" width="234.0" height="7.4" fill="url(#f67)"/><rect x="1163.6" y="303.6" width="226.0" height="7.4" fill="url(#f70)"/><rect x="1164.8" y="310.6" width="218.0" height="7.4" fill="url(#f73)"/><rect x="1165.9" y="317.6" width="210.0" height="7.4" fill="url(#f76)"/><rect x="1167.1" y="324.6" width="202.0" height="7.4" fill="url(#f79)"/><rect x="1168.2" y="331.6" width="194.0" height="7.4" fill="url(#f82)"/><rect x="1169.3" y="338.6" width="185.9" height="7.4" fill="url(#f85)"/><rect x="1170.5" y="345.6" width="177.9" height="7.4" fill="url(#f88)"/><rect x="1171.6" y="352.6" width="169.9" height="7.4" fill="url(#f91)"/><rect x="1172.7" y="359.6" width="161.9" height="7.4" fill="url(#f94)"/><rect x="1173.9" y="366.6" width="153.9" height="7.4" fill="url(#f97)"/><rect x="1175.0" y="373.6" width="145.9" height="7.4" fill="url(#f100)"/><rect x="1176.1" y="380.6" width="137.9" height="7.4" fill="url(#f103)"/><rect x="1177.3" y="387.6" width="129.9" height="7.4" fill="url(#f106)"/><rect x="1178.4" y="394.6" width="121.9" height="7.4" fill="url(#f109)"/><rect x="1179.5" y="401.6" width="113.9" height="7.4" fill="url(#f112)"/><rect x="1180.7" y="408.6" width="105.9" height="7.4" fill="url(#f115)"/><rect x="1181.8" y="415.6" width="97.9" height="7.4" fill="url(#f118)"/><rect x="1182.9" y="422.6" width="89.9" height="7.4" fill="url(#f121)"/><rect x="1184.1" y="429.6" width="81.9" height="7.4" fill="url(#f124)"/><rect x="1185.2" y="436.6" width="73.8" height="7.4" fill="url(#f127)"/><rect x="1186.3" y="443.6" width="65.8" height="7.4" fill="url(#f130)"/><rect x="1187.5" y="450.6" width="57.8" height="7.4" fill="url(#f133)"/><rect x="1188.6" y="457.6" width="49.8" height="7.4" fill="url(#f136)"/><rect x="1189.8" y="464.6" width="41.8" height="7.4" fill="url(#f139)"/><rect x="1190.9" y="471.6" width="33.8" height="7.4" fill="url(#f142)"/><rect x="1192.0" y="478.6" width="25.8" height="7.4" fill="url(#f145)"/></g></g></g>
</svg>
<canvas id="cie" width="638" height="490" style="position:absolute;left:1018.5px;top:122.5px"></canvas>
<script>
(function(){
var c=document.getElementById('cie'); if(!c||!c.getContext) return;
var ctx=c.getContext('2d'); var W=c.width,H=c.height, OX=1018.5, OY=122.5;
var L=[[1291.1,599.6],[1291.0,599.6],[1291.0,599.6],[1291.0,599.6],[1290.9,599.6],[1290.9,599.6],[1290.9,599.6],[1290.8,599.6],[1290.8,599.7],[1290.8,599.7],[1290.7,599.8],[1290.7,599.8],[1290.6,599.9],[1290.6,599.9],[1290.5,599.9],[1290.5,599.9],[1290.4,599.9],[1290.4,599.9],[1290.3,599.9],[1290.2,599.9],[1290.2,600.0],[1290.1,600.0],[1290.0,600.1],[1290.0,600.1],[1289.9,600.1],[1289.8,600.2],[1289.7,600.2],[1289.6,600.2],[1289.5,600.2],[1289.4,600.2],[1289.3,600.2],[1289.2,600.2],[1289.1,600.2],[1289.0,600.2],[1288.9,600.2],[1288.8,600.2],[1288.6,600.2],[1288.5,600.2],[1288.4,600.2],[1288.2,600.2],[1288.1,600.2],[1287.9,600.2],[1287.7,600.2],[1287.5,600.1],[1287.3,600.0],[1287.1,599.9],[1286.8,599.7],[1286.5,599.6],[1286.2,599.4],[1285.8,599.1],[1285.4,598.9],[1284.9,598.6],[1284.4,598.3],[1283.9,597.9],[1283.4,597.5],[1282.8,597.1],[1282.3,596.7],[1281.7,596.3],[1281.1,595.8],[1280.4,595.2],[1279.7,594.7],[1278.9,594.0],[1278.0,593.4],[1277.2,592.7],[1276.2,591.9],[1275.3,591.1],[1274.3,590.3],[1273.2,589.4],[1272.2,588.5],[1271.1,587.6],[1269.9,586.6],[1268.7,585.6],[1267.5,584.5],[1266.2,583.4],[1264.8,582.3],[1263.5,581.2],[1262.0,580.0],[1260.5,578.7],[1258.9,577.4],[1257.2,576.0],[1255.4,574.6],[1253.6,573.1],[1251.6,571.5],[1249.7,569.9],[1247.6,568.2],[1245.5,566.5],[1243.4,564.7],[1241.2,562.9],[1238.9,561.0],[1236.5,559.0],[1234.1,556.9],[1231.5,554.6],[1228.9,552.3],[1226.1,549.9],[1223.3,547.4],[1220.4,544.7],[1217.4,541.9],[1214.3,538.9],[1211.2,535.9],[1208.0,532.7],[1204.7,529.4],[1201.2,525.6],[1197.4,521.5],[1193.4,517.0],[1189.2,512.2],[1184.9,507.0],[1180.3,501.5],[1175.7,495.7],[1170.9,489.5],[1166.0,483.1],[1160.9,476.2],[1155.7,469.1],[1150.4,461.6],[1145.0,453.9],[1139.6,445.8],[1134.0,437.4],[1128.4,428.6],[1122.7,419.5],[1116.9,410.3],[1111.2,400.8],[1105.6,391.4],[1100.0,381.8],[1094.3,372.0],[1088.7,362.1],[1083.2,352.1],[1077.9,342.3],[1072.9,332.5],[1068.1,322.9],[1063.5,313.2],[1059.1,303.6],[1055.0,294.1],[1051.0,284.9],[1047.3,276.0],[1043.9,267.4],[1040.6,259.0],[1037.6,250.9],[1034.8,243.0],[1032.3,235.5],[1030.0,228.4],[1027.9,221.7],[1026.1,215.3],[1024.5,209.3],[1023.2,203.5],[1022.0,198.1],[1021.0,193.0],[1020.2,188.2],[1019.6,183.7],[1019.1,179.5],[1018.9,175.6],[1018.8,171.9],[1018.8,168.4],[1019.0,165.0],[1019.4,161.9],[1019.9,159.0],[1020.6,156.3],[1021.3,153.8],[1022.2,151.4],[1023.3,149.2],[1024.5,147.2],[1025.8,145.3],[1027.3,143.6],[1028.8,142.1],[1030.4,140.7],[1032.1,139.4],[1033.9,138.3],[1035.8,137.4],[1037.8,136.6],[1039.9,135.8],[1041.9,135.2],[1044.1,134.6],[1046.3,134.2],[1048.6,133.9],[1050.9,133.6],[1053.3,133.4],[1055.7,133.1],[1058.1,133.0],[1060.6,132.8],[1063.1,132.8],[1065.6,132.7],[1068.1,132.7],[1070.7,132.6],[1073.2,132.6],[1075.7,132.6],[1078.2,132.7],[1080.8,132.7],[1083.3,132.8],[1085.9,132.8],[1088.5,132.9],[1091.1,133.0],[1093.7,133.1],[1096.3,133.3],[1099.0,133.4],[1101.8,133.6],[1104.5,133.8],[1107.3,133.9],[1110.1,134.1],[1113.0,134.4],[1115.9,134.6],[1118.9,134.8],[1121.8,135.1],[1124.9,135.3],[1127.9,135.6],[1131.1,135.9],[1134.2,136.2],[1137.4,136.5],[1140.7,136.8],[1144.0,137.1],[1147.4,137.5],[1150.8,137.8],[1154.3,138.2],[1157.9,138.5],[1161.5,138.9],[1165.2,139.3],[1168.9,139.7],[1172.7,140.1],[1176.6,140.5],[1180.5,141.0],[1184.5,141.4],[1188.6,141.9],[1192.7,142.3],[1196.9,142.8],[1201.2,143.3],[1205.5,143.8],[1210.0,144.3],[1214.5,144.8],[1219.1,145.3],[1223.7,145.8],[1228.5,146.3],[1233.3,146.9],[1238.2,147.4],[1243.1,148.0],[1248.2,148.6],[1253.3,149.2],[1258.5,149.8],[1263.7,150.4],[1269.1,151.0],[1274.5,151.6],[1280.0,152.2],[1285.6,152.9],[1291.2,153.5],[1297.0,154.2],[1302.8,154.9],[1308.6,155.5],[1314.6,156.2],[1320.6,156.9],[1326.7,157.6],[1332.8,158.3],[1339.0,159.0],[1345.2,159.7],[1351.6,160.5],[1357.9,161.2],[1364.3,161.9],[1370.7,162.7],[1377.2,163.4],[1383.7,164.1],[1390.2,164.9],[1396.7,165.7],[1403.2,166.4],[1409.7,167.2],[1416.0,167.9],[1422.4,168.6],[1428.7,169.3],[1434.9,170.1],[1441.2,170.8],[1447.4,171.5],[1453.6,172.2],[1459.9,172.9],[1466.1,173.6],[1472.2,174.3],[1478.2,175.0],[1484.1,175.7],[1489.9,176.4],[1495.6,177.0],[1501.2,177.6],[1506.8,178.3],[1512.2,178.9],[1517.4,179.5],[1522.6,180.1],[1527.7,180.7],[1532.7,181.2],[1537.5,181.8],[1542.2,182.4],[1546.9,182.9],[1551.3,183.4],[1555.7,183.9],[1559.9,184.4],[1564.0,184.9],[1568.0,185.3],[1571.9,185.8],[1575.7,186.2],[1579.3,186.6],[1582.8,187.0],[1586.3,187.4],[1589.6,187.8],[1592.9,188.2],[1596.0,188.5],[1599.1,188.9],[1602.0,189.2],[1604.9,189.5],[1607.8,189.9],[1610.5,190.2],[1613.3,190.5],[1615.9,190.8],[1618.5,191.1],[1621.0,191.4],[1623.5,191.7],[1625.9,192.0],[1628.2,192.2],[1630.4,192.5],[1632.6,192.7],[1634.8,193.0],[1636.8,193.2],[1638.8,193.5],[1640.7,193.7],[1642.6,193.9],[1644.4,194.1],[1646.1,194.3],[1647.7,194.5],[1649.3,194.6],[1650.8,194.8],[1652.1,195.0],[1653.3,195.1],[1654.6,195.2],[1655.9,195.4],[1657.4,195.6],[1659.2,195.8],[1661.1,196.0],[1663.1,196.2],[1665.1,196.5],[1666.9,196.7],[1668.5,196.8],[1669.8,197.0],[1670.8,197.1],[1671.8,197.2],[1672.6,197.3],[1673.3,197.4],[1674.1,197.5],[1674.9,197.6],[1675.6,197.7],[1676.2,197.7],[1676.9,197.8],[1677.5,197.9],[1678.1,198.0],[1678.8,198.0],[1679.5,198.1],[1680.2,198.2],[1680.9,198.3],[1681.4,198.3],[1681.8,198.4]];
var S=2; var off=document.createElement('canvas'); off.width=W*S; off.height=H*S;
var oc=off.getContext('2d'); var img=oc.createImageData(W*S,H*S); var d=img.data;
function g(v){ return v; }
for(var j=0;j<H*S;j++){
  var Y=OY+(j+0.5)/S; var v=(613.2-Y)/819.0;
  for(var i=0;i<W*S;i++){
    var X=OX+(i+0.5)/S; var u=(X-1017.3)/1066.0;
    var k=(j*W*S+i)*4;
    if(v<=0.0005){ d[k+3]=0; continue; }
    var dd=6*u-16*v+12; var x=9*u/dd, y=4*v/dd;
    var XX=x/y, ZZ=(1-x-y)/y;
    var R=3.2406*XX-1.5372-0.4986*ZZ, G=-0.9689*XX+1.8758+0.0415*ZZ, B=0.0557*XX-0.2040+1.0570*ZZ;
    var out=(R<0||G<0||B<0);
    if(R<0)R=0; if(G<0)G=0; if(B<0)B=0;
    var m=Math.max(R,G,B); if(m<=0){ d[k+3]=0; continue; }
    R/=m; G/=m; B/=m;
    var f=out? 0.6 : 1.0;
    d[k]=Math.round(g(R)*255*f); d[k+1]=Math.round(g(G)*255*f); d[k+2]=Math.round(g(B)*255*f); d[k+3]=255;
  }
}
oc.putImageData(img,0,0);
ctx.fillStyle='#242424'; ctx.fillRect(0,0,W,H);
ctx.save(); ctx.beginPath();
for(var n=0;n<L.length;n++){ var p=L[n]; if(n==0) ctx.moveTo(p[0]-OX,p[1]-OY); else ctx.lineTo(p[0]-OX,p[1]-OY); }
ctx.closePath(); ctx.clip(); ctx.imageSmoothingEnabled=true; ctx.imageSmoothingQuality='high'; ctx.drawImage(off,0,0,W*S,H*S,0,0,W,H); ctx.restore();
})();
</script>
<svg width="1668" height="1008" viewBox="0 0 1668 1008" style="pointer-events:none">
<rect x="1017.8" y="121.8" width="639.2" height="491.4" fill="none" stroke="#9c9c9c" stroke-width="1.5"/>
<text x="1278.8" y="115.6" font-size="13.95" fill="#e4e4e4" textLength="83.5" lengthAdjust="spacingAndGlyphs">CIE 1976 u'v'</text>
<line x1="1011.6" y1="613.2" x2="1017.8" y2="613.2" stroke="#e0e0e0" stroke-width="1.5"/>
<text x="1003.3" y="618.8" font-size="14.68" fill="#e4e4e4" textLength="8.0" lengthAdjust="spacingAndGlyphs">0</text>
<line x1="1017.3" y1="613.2" x2="1017.3" y2="619.6" stroke="#e0e0e0" stroke-width="1.5"/>
<text x="1013.3" y="634.9" font-size="14.39" fill="#e4e4e4" textLength="7.9" lengthAdjust="spacingAndGlyphs">0</text>
<line x1="1011.6" y1="572.2" x2="1017.8" y2="572.2" stroke="#e0e0e0" stroke-width="1.5"/>
<text x="983.2" y="577.9" font-size="14.68" fill="#e4e4e4" textLength="28.1" lengthAdjust="spacingAndGlyphs">0,05</text>
<line x1="1070.6" y1="613.2" x2="1070.6" y2="619.6" stroke="#e0e0e0" stroke-width="1.5"/>
<text x="1056.7" y="634.9" font-size="14.39" fill="#e4e4e4" textLength="27.7" lengthAdjust="spacingAndGlyphs">0,05</text>
<line x1="1011.6" y1="531.3" x2="1017.8" y2="531.3" stroke="#e0e0e0" stroke-width="1.5"/>
<text x="991.2" y="536.9" font-size="14.68" fill="#e4e4e4" textLength="20.1" lengthAdjust="spacingAndGlyphs">0,1</text>
<line x1="1123.9" y1="613.2" x2="1123.9" y2="619.6" stroke="#e0e0e0" stroke-width="1.5"/>
<text x="1114.0" y="634.9" font-size="14.39" fill="#e4e4e4" textLength="19.8" lengthAdjust="spacingAndGlyphs">0,1</text>
<line x1="1011.6" y1="490.4" x2="1017.8" y2="490.4" stroke="#e0e0e0" stroke-width="1.5"/>
<text x="983.2" y="496.0" font-size="14.68" fill="#e4e4e4" textLength="28.1" lengthAdjust="spacingAndGlyphs">0,15</text>
<line x1="1177.2" y1="613.2" x2="1177.2" y2="619.6" stroke="#e0e0e0" stroke-width="1.5"/>
<text x="1163.3" y="634.9" font-size="14.39" fill="#e4e4e4" textLength="27.7" lengthAdjust="spacingAndGlyphs">0,15</text>
<line x1="1011.6" y1="449.4" x2="1017.8" y2="449.4" stroke="#e0e0e0" stroke-width="1.5"/>
<text x="991.2" y="455.0" font-size="14.68" fill="#e4e4e4" textLength="20.1" lengthAdjust="spacingAndGlyphs">0,2</text>
<line x1="1230.5" y1="613.2" x2="1230.5" y2="619.6" stroke="#e0e0e0" stroke-width="1.5"/>
<text x="1220.6" y="634.9" font-size="14.39" fill="#e4e4e4" textLength="19.8" lengthAdjust="spacingAndGlyphs">0,2</text>
<line x1="1011.6" y1="408.5" x2="1017.8" y2="408.5" stroke="#e0e0e0" stroke-width="1.5"/>
<text x="983.2" y="414.1" font-size="14.68" fill="#e4e4e4" textLength="28.1" lengthAdjust="spacingAndGlyphs">0,25</text>
<line x1="1283.8" y1="613.2" x2="1283.8" y2="619.6" stroke="#e0e0e0" stroke-width="1.5"/>
<text x="1269.9" y="634.9" font-size="14.39" fill="#e4e4e4" textLength="27.7" lengthAdjust="spacingAndGlyphs">0,25</text>
<line x1="1011.6" y1="367.5" x2="1017.8" y2="367.5" stroke="#e0e0e0" stroke-width="1.5"/>
<text x="991.2" y="373.1" font-size="14.68" fill="#e4e4e4" textLength="20.1" lengthAdjust="spacingAndGlyphs">0,3</text>
<line x1="1337.1" y1="613.2" x2="1337.1" y2="619.6" stroke="#e0e0e0" stroke-width="1.5"/>
<text x="1327.2" y="634.9" font-size="14.39" fill="#e4e4e4" textLength="19.8" lengthAdjust="spacingAndGlyphs">0,3</text>
<line x1="1011.6" y1="326.6" x2="1017.8" y2="326.6" stroke="#e0e0e0" stroke-width="1.5"/>
<text x="983.2" y="332.2" font-size="14.68" fill="#e4e4e4" textLength="28.1" lengthAdjust="spacingAndGlyphs">0,35</text>
<line x1="1390.4" y1="613.2" x2="1390.4" y2="619.6" stroke="#e0e0e0" stroke-width="1.5"/>
<text x="1376.5" y="634.9" font-size="14.39" fill="#e4e4e4" textLength="27.7" lengthAdjust="spacingAndGlyphs">0,35</text>
<line x1="1011.6" y1="285.6" x2="1017.8" y2="285.6" stroke="#e0e0e0" stroke-width="1.5"/>
<text x="991.2" y="291.2" font-size="14.68" fill="#e4e4e4" textLength="20.1" lengthAdjust="spacingAndGlyphs">0,4</text>
<line x1="1443.7" y1="613.2" x2="1443.7" y2="619.6" stroke="#e0e0e0" stroke-width="1.5"/>
<text x="1433.8" y="634.9" font-size="14.39" fill="#e4e4e4" textLength="19.8" lengthAdjust="spacingAndGlyphs">0,4</text>
<line x1="1011.6" y1="244.7" x2="1017.8" y2="244.7" stroke="#e0e0e0" stroke-width="1.5"/>
<text x="983.2" y="250.3" font-size="14.68" fill="#e4e4e4" textLength="28.1" lengthAdjust="spacingAndGlyphs">0,45</text>
<line x1="1497.0" y1="613.2" x2="1497.0" y2="619.6" stroke="#e0e0e0" stroke-width="1.5"/>
<text x="1483.1" y="634.9" font-size="14.39" fill="#e4e4e4" textLength="27.7" lengthAdjust="spacingAndGlyphs">0,45</text>
<line x1="1011.6" y1="203.7" x2="1017.8" y2="203.7" stroke="#e0e0e0" stroke-width="1.5"/>
<text x="991.2" y="209.3" font-size="14.68" fill="#e4e4e4" textLength="20.1" lengthAdjust="spacingAndGlyphs">0,5</text>
<line x1="1550.3" y1="613.2" x2="1550.3" y2="619.6" stroke="#e0e0e0" stroke-width="1.5"/>
<text x="1540.4" y="634.9" font-size="14.39" fill="#e4e4e4" textLength="19.8" lengthAdjust="spacingAndGlyphs">0,5</text>
<line x1="1011.6" y1="162.8" x2="1017.8" y2="162.8" stroke="#e0e0e0" stroke-width="1.5"/>
<text x="983.2" y="168.3" font-size="14.68" fill="#e4e4e4" textLength="28.1" lengthAdjust="spacingAndGlyphs">0,55</text>
<line x1="1603.6" y1="613.2" x2="1603.6" y2="619.6" stroke="#e0e0e0" stroke-width="1.5"/>
<text x="1589.7" y="634.9" font-size="14.39" fill="#e4e4e4" textLength="27.7" lengthAdjust="spacingAndGlyphs">0,55</text>
<rect x="1144.1" y="144.8" width="13" height="13" fill="none" stroke="#f4f4f4" stroke-opacity="0.9" stroke-width="2"/>
<rect x="1168.1" y="169.1" width="13" height="13" fill="none" stroke="#f4f4f4" stroke-opacity="0.9" stroke-width="2"/>
<rect x="1207.9" y="160.9" width="13" height="13" fill="none" stroke="#f4f4f4" stroke-opacity="0.9" stroke-width="2"/>
<rect x="1228.0" y="152.9" width="13" height="13" fill="none" stroke="#f4f4f4" stroke-opacity="0.9" stroke-width="2"/>
<rect x="1255.0" y="157.1" width="13" height="13" fill="none" stroke="#f4f4f4" stroke-opacity="0.9" stroke-width="2"/>
<rect x="1287.0" y="164.0" width="13" height="13" fill="none" stroke="#f4f4f4" stroke-opacity="0.9" stroke-width="2"/>
<rect x="1205.2" y="182.9" width="13" height="13" fill="none" stroke="#f4f4f4" stroke-opacity="0.9" stroke-width="2"/>
<rect x="1270.0" y="196.9" width="13" height="13" fill="none" stroke="#f4f4f4" stroke-opacity="0.9" stroke-width="2"/>
<rect x="1258.9" y="202.9" width="13" height="13" fill="none" stroke="#f4f4f4" stroke-opacity="0.9" stroke-width="2"/>
<rect x="1175.0" y="213.7" width="13" height="13" fill="none" stroke="#f4f4f4" stroke-opacity="0.9" stroke-width="2"/>
<rect x="1159.1" y="232.9" width="13" height="13" fill="none" stroke="#f4f4f4" stroke-opacity="0.9" stroke-width="2"/>
<rect x="1163.9" y="264.8" width="13" height="13" fill="none" stroke="#f4f4f4" stroke-opacity="0.9" stroke-width="2"/>
<rect x="1197.8" y="261.7" width="13" height="13" fill="none" stroke="#f4f4f4" stroke-opacity="0.9" stroke-width="2"/>
<rect x="1218.3" y="267.1" width="13" height="13" fill="none" stroke="#f4f4f4" stroke-opacity="0.9" stroke-width="2"/>
<rect x="1253.7" y="284.9" width="13" height="13" fill="none" stroke="#f4f4f4" stroke-opacity="0.9" stroke-width="2"/>
<rect x="1316.5" y="255.8" width="13" height="13" fill="none" stroke="#f4f4f4" stroke-opacity="0.9" stroke-width="2"/>
<rect x="1201.0" y="314.8" width="13" height="13" fill="none" stroke="#f4f4f4" stroke-opacity="0.9" stroke-width="2"/>
<rect x="1201.0" y="364.8" width="13" height="13" fill="none" stroke="#f4f4f4" stroke-opacity="0.9" stroke-width="2"/>
<rect x="1335.8" y="334.9" width="13" height="13" fill="none" stroke="#f4f4f4" stroke-opacity="0.9" stroke-width="2"/>
<rect x="1329.9" y="167.7" width="13" height="13" fill="none" stroke="#f4f4f4" stroke-opacity="0.9" stroke-width="2"/>
<rect x="1348.9" y="210.0" width="13" height="13" fill="none" stroke="#f4f4f4" stroke-opacity="0.9" stroke-width="2"/>
<rect x="1410.0" y="197.9" width="13" height="13" fill="none" stroke="#f4f4f4" stroke-opacity="0.9" stroke-width="2"/>
<rect x="1490.9" y="177.3" width="13" height="13" fill="none" stroke="#f4f4f4" stroke-opacity="0.9" stroke-width="2"/>
<rect x="1198.0" y="477.0" width="13" height="13" fill="none" stroke="#f4f4f4" stroke-opacity="0.9" stroke-width="2"/>
<rect x="1221.1" y="221.8" width="13" height="13" fill="none" stroke="#000" stroke-width="3"/>
<rect x="1222.1" y="222.8" width="11" height="11" fill="none" stroke="#ffffff" stroke-width="0.8"/>
<circle cx="1227.6" cy="228.7" r="4.4" fill="#a0a0a0" stroke="#111" stroke-width="1.1"/>
<circle cx="1215.5" cy="294.5" r="4.4" fill="#000"/>
<circle cx="1138" cy="144.4" r="4.4" fill="#10f020" stroke="#111" stroke-width="1.1"/>
<circle cx="1151.4" cy="161.8" r="4.4" fill="#5a8a5a" stroke="#111" stroke-width="1.1"/>
<circle cx="1206" cy="152.2" r="4.4" fill="#a8b060" stroke="#111" stroke-width="1.1"/>
<circle cx="1237.1" cy="152.2" r="4.4" fill="#f2e81a" stroke="#111" stroke-width="1.1"/>
<circle cx="1271.3" cy="157" r="4.4" fill="#e8c040" stroke="#111" stroke-width="1.1"/>
<circle cx="1314.8" cy="161.8" r="4.4" fill="#e0a844" stroke="#111" stroke-width="1.1"/>
<circle cx="1379.9" cy="167.6" r="4.4" fill="#d8903c" stroke="#111" stroke-width="1.1"/>
<circle cx="1207.5" cy="184" r="4.4" fill="#5c6650" stroke="#111" stroke-width="1.1"/>
<circle cx="1294.5" cy="200.4" r="4.4" fill="#6e5044" stroke="#111" stroke-width="1.1"/>
<circle cx="1278" cy="206.7" r="4.4" fill="#b89484" stroke="#111" stroke-width="1.1"/>
<circle cx="1168.9" cy="221.7" r="4.4" fill="#78a898" stroke="#111" stroke-width="1.1"/>
<circle cx="1158.4" cy="240.9" r="4.4" fill="#20f0f0" stroke="#111" stroke-width="1.1"/>
<circle cx="1165" cy="274.8" r="4.4" fill="#208ca0" stroke="#111" stroke-width="1.1"/>
<circle cx="1198" cy="274.8" r="4.4" fill="#6880a8" stroke="#111" stroke-width="1.1"/>
<circle cx="1225.2" cy="277.9" r="4.4" fill="#9090b4" stroke="#111" stroke-width="1.1"/>
<circle cx="1270" cy="298.4" r="4.4" fill="#705878" stroke="#111" stroke-width="1.1"/>
<circle cx="1353" cy="269.8" r="4.4" fill="#b06090" stroke="#111" stroke-width="1.1"/>
<circle cx="1200.4" cy="338.8" r="4.4" fill="#5070a8" stroke="#111" stroke-width="1.1"/>
<circle cx="1202.9" cy="392.3" r="4.4" fill="#405090" stroke="#111" stroke-width="1.1"/>
<circle cx="1351.6" cy="340.4" r="4.4" fill="#ff20ff" stroke="#111" stroke-width="1.1"/>
<circle cx="1414" cy="211.2" r="4.4" fill="#c05a70" stroke="#111" stroke-width="1.1"/>
<circle cx="1490.6" cy="195" r="4.4" fill="#b04050" stroke="#111" stroke-width="1.1"/>
<circle cx="1511.9" cy="178.3" r="4.4" fill="#ff1010" stroke="#111" stroke-width="1.1"/>
<circle cx="1207.5" cy="479.2" r="3.6" fill="#0000ff"/>
<defs><linearGradient id="gInLo" x1="0" y1="0" x2="1" y2="1"><stop offset="0" stop-color="#a8ff00"/><stop offset="0.5" stop-color="#ffff10"/><stop offset="1" stop-color="#ffa800"/></linearGradient><linearGradient id="gInHi" x1="0" y1="0" x2="1" y2="1"><stop offset="0" stop-color="#5e9600"/><stop offset="0.5" stop-color="#969400"/><stop offset="1" stop-color="#9a6a00"/></linearGradient></defs>
<polygon points="1453.5,441.5 1650.5,441.5 1650.5,557.2 1453.5,455.4" fill="url(#gInHi)"/>
<polygon points="1453.5,455.4 1650.5,557.2 1650.5,571 1453.5,571" fill="url(#gInLo)"/>
<rect x="1453.5" y="441.3" width="197.3" height="129.8" fill="none" stroke="#8a8a8a" stroke-width="1.8"/>
<rect x="1545" y="498.9" width="13" height="13" fill="none" stroke="#f4f4f4" stroke-width="1.6"/>
<circle cx="1608.6" cy="453.9" r="4.2" fill="#fff21a" stroke="#111" stroke-width="1.1"/>
<rect x="1402.3" y="580.8" width="251.6" height="27.3" fill="#2e2e2e"/>
<text x="1403.2" y="602.4" font-size="19.04" fill="#f0f0f0" textLength="211.1" lengthAdjust="spacingAndGlyphs">RGB Triplet: 255, 255, 0</text><defs><linearGradient id="gEdge" x1="0" y1="0" x2="1" y2="0"><stop offset="0" stop-color="#000" stop-opacity="0"/><stop offset="0.55" stop-color="#0a0a0a" stop-opacity="0.85"/><stop offset="1" stop-color="#080808"/></linearGradient></defs><rect x="1660" y="40" width="8" height="968" fill="url(#gEdge)"/>
</svg>
</body></html>
